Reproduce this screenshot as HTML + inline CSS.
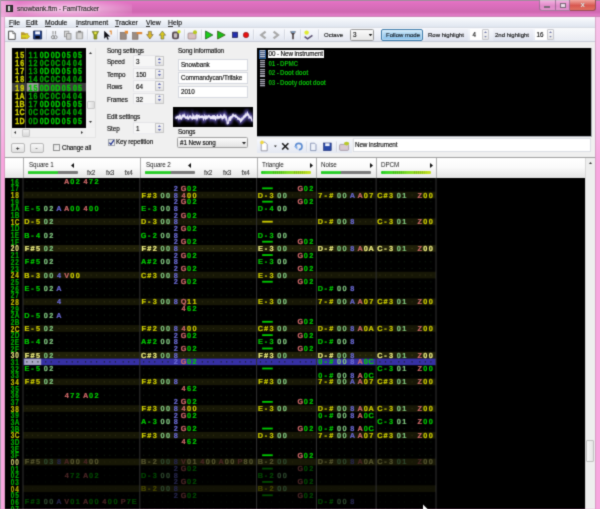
<!DOCTYPE html>
<html><head><meta charset="utf-8">
<style>
*{margin:0;padding:0;box-sizing:border-box}
html,body{width:600px;height:509px;overflow:hidden;background:#f08cd4}
body{position:relative;font-family:"Liberation Sans",sans-serif;color:#000}
#client{will-change:transform}
.a{position:absolute}
.t{position:absolute;white-space:nowrap;font-size:6.3px;letter-spacing:-0.1px;line-height:8px;color:#080808;-webkit-text-stroke:0.15px #222}
u{text-decoration:none;border-bottom:0.6px solid #333}
/* frame */
#frame{left:0;top:0;width:600px;height:509px;background:linear-gradient(to bottom,#a08c9c 0,#a08c9c 1px,#e872c8 1px,#e070c0 3px,#d66cb8 8px,#cf68b0 12px,#de78c2 14.5px,#e07cc4 16px,#b88aa8 17px,#f8c0e8 17px,#f8b4e4 130px,#f8a6de 160px,#f8a6de 100%)}
#client{left:5px;top:17px;width:590px;height:492px;background:#f0f0f0;box-shadow:-0.5px 0 0 #b890a8,0.5px 0 0 #b890a8}
#menu{left:0;top:0;width:590px;height:10px;background:linear-gradient(to bottom,#fbfdfe 0,#f2f5fa 30%,#dfe5ef 100%)}
#tool{left:0;top:10px;width:590px;height:13.5px;border-top:0.5px solid #d8dce4;background:linear-gradient(to bottom,#f8f9fd 0,#eef1f8 50%,#e2e6f0 100%)}
.sep{position:absolute;width:1px;height:10px;background:#c4c8d4;top:1.5px}
.edit{position:absolute;background:#fff;border:1px solid #d6d9e0}
.spin{position:absolute;background:linear-gradient(#f4f4f4,#e2e2e2);border:1px solid #c8c8c8}
.btn{position:absolute;background:linear-gradient(#f8f8f8,#e0e0e0);border:1px solid #b8b8b8;border-radius:2px}
.pat text{font-family:"Liberation Sans",sans-serif;font-weight:bold;font-size:7.3px;text-anchor:middle;text-rendering:geometricPrecision;stroke-width:0.2px}
.pat text.rn{font-size:8.6px}
.fl text{font-family:"Liberation Sans",sans-serif;font-weight:bold;font-size:8.8px;text-anchor:middle;text-rendering:geometricPrecision;stroke-width:0.35px}
</style></head><body>
<svg width="0" height="0" style="position:absolute"><defs><filter id="soft" x="0" y="0" width="100%" height="100%" color-interpolation-filters="sRGB"><feConvolveMatrix order="3" kernelMatrix="0.025 0.1 0.025 0.1 0.5 0.1 0.025 0.1 0.025" edgeMode="duplicate"/></filter></defs></svg>
<div id="wrap" style="position:absolute;left:0;top:0;width:600px;height:509px;filter:url(#soft)">
<div id="frame" class="a"></div>
<div class="a" style="left:0;top:0;width:600px;height:17px;will-change:transform">
<div class="a" style="left:2px;top:1px;width:130px;height:16px;background:radial-gradient(ellipse 60% 65% at 50% 50%,rgba(255,235,250,0.75),rgba(255,220,245,0.35) 60%,rgba(255,210,240,0) 100%)"></div>
<div class="a" style="left:1px;top:1px;width:18px;height:16px;background:linear-gradient(90deg,rgba(255,220,245,0.5),rgba(255,220,245,0))"></div>
<!-- title bar -->
<div class="a" style="left:0;top:0;width:1px;height:509px;background:#a89cac"></div>
<div class="a" style="left:6px;top:5px;width:7px;height:7px;background:#3a3a3a;border:1px solid #222"></div>
<div class="a" style="left:8px;top:6px;width:2px;height:5px;background:#d8d8d8"></div>
<div class="t" style="left:17px;top:5px;font-size:6.7px;color:#303030;text-shadow:0 0 2px #fde,0 0 3px #fce">snowbank.ftm - FamiTracker</div>
<div class="a" style="left:538.5px;top:0;width:16.5px;height:11px;background:linear-gradient(rgba(255,235,250,0.55),rgba(230,170,215,0.45) 60%,rgba(240,190,230,0.5));border:1px solid rgba(110,80,110,0.55);border-top:0;border-right:0;border-radius:0 0 0 3px"></div>
<div class="a" style="left:543.5px;top:6px;width:6.5px;height:2.2px;background:#f4f0f4;border:0.6px solid #7a6a78"></div>
<div class="a" style="left:555px;top:0;width:15px;height:11px;background:linear-gradient(rgba(255,235,250,0.55),rgba(230,170,215,0.45) 60%,rgba(240,190,230,0.5));border:1px solid rgba(110,80,110,0.55);border-top:0"></div>
<div class="a" style="left:559.5px;top:3.2px;width:6.5px;height:5px;border:1px solid #7a6a78;background:#ead8e8"></div>
<div class="a" style="left:570px;top:0;width:26px;height:11px;background:linear-gradient(#f0a8a0,#d85850 55%,#e07060);border:1px solid #9a5058;border-top:0;border-left:0;border-radius:0 0 3px 0"></div>
<div class="t" style="left:580.5px;top:0.6px;font-size:8px;font-weight:bold;color:#fff;letter-spacing:0">x</div>
</div>
<div id="client" class="a">
  <div id="menu" class="a">
    <div class="t" style="left:4px;top:1.5px;font-size:6.8px;letter-spacing:0"><u>F</u>ile</div>
    <div class="t" style="left:21px;top:1.5px;font-size:6.8px;letter-spacing:0"><u>E</u>dit</div>
    <div class="t" style="left:40px;top:1.5px;font-size:6.8px;letter-spacing:0"><u>M</u>odule</div>
    <div class="t" style="left:71px;top:1.5px;font-size:6.8px;letter-spacing:0"><u>I</u>nstrument</div>
    <div class="t" style="left:110px;top:1.5px;font-size:6.8px;letter-spacing:0"><u>T</u>racker</div>
    <div class="t" style="left:141px;top:1.5px;font-size:6.8px;letter-spacing:0"><u>V</u>iew</div>
    <div class="t" style="left:163px;top:1.5px;font-size:6.8px;letter-spacing:0"><u>H</u>elp</div>
  </div>
  <div id="tool" class="a">
    <svg class="a" style="left:0;top:-0.4px" width="320" height="13" viewBox="0 0 320 13">
      <g stroke-linejoin="round">
      <path d="M3.6 3.2h4.2l2.4 2.4v5.8H3.6z" fill="#fff" stroke="#4a4a4a" stroke-width="1"/>
      <path d="M7.8 3.2v2.4h2.4" fill="#ddd" stroke="#4a4a4a" stroke-width="0.7"/>
      <path d="M16 4.2h3l1 1h3.2v1.6L25 8.4 22.4 11H16z" fill="#b89a30"/>
      <path d="M16.6 7h4.2l0.2-1.6 3.6 3-3.6 2.6V9.4h-4.4z" fill="#d8d020"/>
      <rect x="28.6" y="3" width="8" height="8" fill="#20408c" stroke="#14244c" stroke-width="0.8"/>
      <rect x="30.2" y="3.4" width="4.8" height="3" fill="#f4f6ff"/>
      <rect x="30.4" y="8" width="4.4" height="2.6" fill="#080810"/>
      </g>
      <rect x="41.5" y="1.5" width="0.8" height="10" fill="#c4c8d4"/><rect x="42.3" y="1.5" width="0.6" height="10" fill="#fff"/>
      <path d="M48 3v3.5M50.5 3v3.5" stroke="#9a9a9a" stroke-width="1.1"/><circle cx="48" cy="9.2" r="1.6" fill="none" stroke="#8a8a8a" stroke-width="1"/><circle cx="50.5" cy="9.2" r="1.6" fill="none" stroke="#8a8a8a" stroke-width="1"/>
      <rect x="59.5" y="3.2" width="4.4" height="5.6" fill="#d8d8d8" stroke="#8c8c8c" stroke-width="0.8"/><rect x="61.6" y="5.6" width="4.4" height="5.6" fill="#cfcfcf" stroke="#8c8c8c" stroke-width="0.8"/>
      <rect x="70.8" y="3.6" width="7.4" height="7.6" rx="1" fill="#a8a8a8"/><rect x="72.4" y="5.2" width="4.4" height="5.2" fill="#d6d6d6"/><rect x="73" y="2.8" width="3" height="1.4" fill="#707070"/>
      <rect x="82" y="1.5" width="0.8" height="10" fill="#c4c8d4"/><rect x="82.8" y="1.5" width="0.6" height="10" fill="#fff"/>
      <path d="M87.2 3.4h6.4l-1.8 3.6v4h-2.8v-4z" fill="#98a020" stroke="#606818" stroke-width="0.6"/><circle cx="90.4" cy="5" r="1.3" fill="#e8e850"/>
      <path d="M99.2 2.8v8l2-2 1.4 3 1.2-0.6-1.4-2.8h2.8z" fill="#101018"/>
      <path d="M104.6 2.6h2.2v4h-1.2v-2.6h-1z" fill="#e09040"/>
      <rect x="112" y="1.5" width="0.8" height="10" fill="#c4c8d4"/><rect x="112.8" y="1.5" width="0.6" height="10" fill="#fff"/>
      <rect x="115.2" y="4.4" width="6" height="6.8" fill="#9a8c84" stroke="#706058" stroke-width="0.6"/><path d="M119.4 2.8h3.6v3.4z" fill="#e88a30"/><rect x="119.8" y="3.4" width="2" height="2" fill="#e88a30"/>
      <rect x="127.6" y="4.6" width="5.4" height="6.6" fill="#9a8c84" stroke="#706058" stroke-width="0.6"/><path d="M131.6 4h5.6v2.2h-5.6z" fill="#e08838"/>
      <path d="M143.4 3.4h3v3.2h1.8l-3.3 4.4-3.3-4.4h1.8z" fill="#d8b828" stroke="#6a5a40" stroke-width="0.6"/>
      <path d="M157.4 3l3.2 4.2h-1.8v3.8h-2.8V7.2h-1.8z" fill="#d8c820" stroke="#606040" stroke-width="0.6"/>
      <rect x="167" y="3.6" width="7" height="7.6" rx="2.2" fill="#5a4e52"/><rect x="168.8" y="5.2" width="3.4" height="4.6" rx="1" fill="#c8c0c0"/><circle cx="174" cy="3.8" r="1.7" fill="#d8e830"/>
      <rect x="179" y="1.5" width="0.8" height="10" fill="#c4c8d4"/><rect x="179.8" y="1.5" width="0.6" height="10" fill="#fff"/>
      <rect x="183" y="5" width="8" height="6" rx="1" fill="#d8c0c0" stroke="#8a7070" stroke-width="0.6"/><circle cx="190" cy="4.2" r="2" fill="#b8c820"/>
      <rect x="196" y="1.5" width="0.8" height="10" fill="#c4c8d4"/><rect x="196.8" y="1.5" width="0.6" height="10" fill="#fff"/>
      <path d="M200.6 3v8l7.2-4z" fill="#18d018" stroke="#1a5a1a" stroke-width="0.8" stroke-linejoin="round"/>
      <path d="M212.6 3v8l7.6-4z" fill="#18c018" stroke="#3a5a10" stroke-width="0.8" stroke-linejoin="round"/>
      <rect x="227.6" y="4.2" width="5" height="5.2" fill="#2430b0" stroke="#181848" stroke-width="0.7"/>
      <circle cx="241" cy="7" r="2.7" fill="#e81010" stroke="#802020" stroke-width="0.6"/>
      <rect x="248" y="1.5" width="0.8" height="10" fill="#c4c8d4"/><rect x="248.8" y="1.5" width="0.6" height="10" fill="#fff"/>
      <path d="M260.6 3.6l-4.4 3.4 4.4 3.4" fill="none" stroke="#a8a8a8" stroke-width="2.2"/>
      <path d="M268.6 3.6l4.4 3.4-4.4 3.4" fill="none" stroke="#a8a8a8" stroke-width="2.2"/>
      <rect x="279" y="1.5" width="0.8" height="10" fill="#c4c8d4"/><rect x="279.8" y="1.5" width="0.6" height="10" fill="#fff"/>
      <path d="M285 3.4h6l-2.2 3.4v4.4h-1.6V6.8z" fill="#4a4040"/><rect x="286.4" y="3.2" width="3.6" height="1.8" fill="#7a98b8"/>
      <rect x="295" y="1.5" width="0.8" height="10" fill="#c4c8d4"/><rect x="295.8" y="1.5" width="0.6" height="10" fill="#fff"/>
      <circle cx="301.6" cy="4.6" r="2.2" fill="#e0ec30"/><path d="M299.6 8.6l3 2.2 4.8-3.4" fill="none" stroke="#5a5070" stroke-width="1.6"/>
      <rect x="313" y="1.5" width="0.8" height="10" fill="#c4c8d4"/><rect x="313.8" y="1.5" width="0.6" height="10" fill="#fff"/>
    </svg>
    <div class="a" style="left:315px;top:0;width:41px;height:13px;background:linear-gradient(#f8f9fc,#e4e7f0)"></div>
    <div class="t" style="left:319px;top:2.5px;font-size:6px;letter-spacing:0">Octave</div>
    <div class="a" style="left:345px;top:0.8px;width:24px;height:12px;background:linear-gradient(#fafafa,#e6e6e6);border:1px solid #9a9a9a;border-radius:1.5px"></div>
    <div class="t" style="left:348px;top:2.8px;font-size:6.3px">3</div>
    <div class="a" style="left:363.5px;top:5.8px;width:4px;height:2.5px;background:#111;clip-path:polygon(0 0,100% 0,50% 100%)"></div>
    <div class="a" style="left:376px;top:0.5px;width:42px;height:12px;background:linear-gradient(#d4ecfa,#a4d0f0 50%,#88c0ea);border:1px solid #3a78a8;border-radius:2px;box-shadow:inset 0 0 0 0.5px #e8f6ff"></div>
    <div class="t" style="left:381px;top:2.5px;font-size:6px;letter-spacing:0;color:#0a1a2a">Follow mode</div>
    <div class="a" style="left:420px;top:1px;width:43px;height:11.5px;background:linear-gradient(#f2f3f9,#dde1ee);border-radius:1px"></div>
    <div class="t" style="left:423px;top:2.5px;font-size:6px;letter-spacing:0">Row highlight</div>
    <div class="a" style="left:465px;top:1px;width:12px;height:11px;background:#fff"></div>
    <div class="t" style="left:467.5px;top:2.8px;font-size:6.3px">4</div>
    <div class="a" style="left:477px;top:1px;width:7px;height:11px;background:linear-gradient(#f8f8f8,#e4e4e4);border:1px solid #c8c8cc;border-radius:1px"></div>
    <div class="a" style="left:478.8px;top:3.2px;width:3.4px;height:2px;background:#7078a8;clip-path:polygon(50% 0,100% 100%,0 100%)"></div>
    <div class="a" style="left:478.8px;top:7.6px;width:3.4px;height:2px;background:#7078a8;clip-path:polygon(0 0,100% 0,50% 100%)"></div>
    <div class="a" style="left:488px;top:1px;width:40px;height:11.5px;background:linear-gradient(#f2f3f9,#dde1ee);border-radius:1px"></div>
    <div class="t" style="left:490px;top:2.5px;font-size:6px;letter-spacing:0">2nd highlight</div>
    <div class="a" style="left:530px;top:1px;width:12px;height:11px;background:#fff"></div>
    <div class="t" style="left:531.5px;top:2.8px;font-size:6.3px">16</div>
    <div class="a" style="left:542px;top:1px;width:7px;height:11px;background:linear-gradient(#f8f8f8,#e4e4e4);border:1px solid #c8c8cc;border-radius:1px"></div>
    <div class="a" style="left:543.8px;top:3.2px;width:3.4px;height:2px;background:#7078a8;clip-path:polygon(50% 0,100% 100%,0 100%)"></div>
    <div class="a" style="left:543.8px;top:7.6px;width:3.4px;height:2px;background:#7078a8;clip-path:polygon(0 0,100% 0,50% 100%)"></div>
    <div class="a" style="left:550px;top:0;width:40px;height:13px;background:linear-gradient(#f9fafc,#e9ecf3)"></div>
  </div>
  <div class="a" style="left:0;top:23.5px;width:590px;height:1px;background:#c8ccd8"></div>

  <!-- control area -->
  <!-- frame list -->
  <div class="a" style="left:6px;top:30.5px;width:85px;height:90px;border:1px solid #e4e4e4;background:#f2f2f2"></div>
  <div class="a" style="left:7px;top:31px;width:74px;height:80px"><svg class="fl" width="74" height="80" viewBox="0 0 74 80"><defs><filter id="fb" x="0" y="0" width="74" height="80" filterUnits="userSpaceOnUse" color-interpolation-filters="sRGB"><feConvolveMatrix order="3" kernelMatrix="0.025 0.1 0.025 0.1 0.5 0.1 0.025 0.1 0.025" edgeMode="duplicate"/></filter></defs><g><rect x="0" y="0" width="74" height="80" fill="#000"/><rect x="13.2" y="0" width="0.8" height="80" fill="#505050"/><text transform="scale(0.8 1)" x="6.37 12.62" y="9.50" fill="#d4d400" stroke="#d4d400">15</text><text transform="scale(0.8 1)" x="23.12 29.38" y="9.50" fill="#00a000" stroke="#00a000">11</text><text transform="scale(0.8 1)" x="37.25 43.50" y="9.50" fill="#00cc00" stroke="#00cc00">0D</text><text transform="scale(0.8 1)" x="51.00 57.25" y="9.50" fill="#00cc00" stroke="#00cc00">0D</text><text transform="scale(0.8 1)" x="64.75 71.00" y="9.50" fill="#00cc00" stroke="#00cc00">05</text><text transform="scale(0.8 1)" x="78.62 84.88" y="9.50" fill="#00cc00" stroke="#00cc00">05</text><text transform="scale(0.8 1)" x="6.37 12.62" y="17.75" fill="#d4d400" stroke="#d4d400">16</text><text transform="scale(0.8 1)" x="23.12 29.38" y="17.75" fill="#00a000" stroke="#00a000">12</text><text transform="scale(0.8 1)" x="37.25 43.50" y="17.75" fill="#00a800" stroke="#00a800">0C</text><text transform="scale(0.8 1)" x="51.00 57.25" y="17.75" fill="#00a800" stroke="#00a800">0C</text><text transform="scale(0.8 1)" x="64.75 71.00" y="17.75" fill="#00a800" stroke="#00a800">04</text><text transform="scale(0.8 1)" x="78.62 84.88" y="17.75" fill="#00a800" stroke="#00a800">04</text><text transform="scale(0.8 1)" x="6.37 12.62" y="26.00" fill="#d4d400" stroke="#d4d400">17</text><text transform="scale(0.8 1)" x="23.12 29.38" y="26.00" fill="#00a000" stroke="#00a000">13</text><text transform="scale(0.8 1)" x="37.25 43.50" y="26.00" fill="#00cc00" stroke="#00cc00">0D</text><text transform="scale(0.8 1)" x="51.00 57.25" y="26.00" fill="#00cc00" stroke="#00cc00">0D</text><text transform="scale(0.8 1)" x="64.75 71.00" y="26.00" fill="#00cc00" stroke="#00cc00">05</text><text transform="scale(0.8 1)" x="78.62 84.88" y="26.00" fill="#00cc00" stroke="#00cc00">05</text><text transform="scale(0.8 1)" x="6.37 12.62" y="34.25" fill="#d4d400" stroke="#d4d400">18</text><text transform="scale(0.8 1)" x="23.12 29.38" y="34.25" fill="#00a000" stroke="#00a000">14</text><text transform="scale(0.8 1)" x="37.25 43.50" y="34.25" fill="#00a800" stroke="#00a800">0C</text><text transform="scale(0.8 1)" x="51.00 57.25" y="34.25" fill="#00a800" stroke="#00a800">0C</text><text transform="scale(0.8 1)" x="64.75 71.00" y="34.25" fill="#00a800" stroke="#00a800">04</text><text transform="scale(0.8 1)" x="78.62 84.88" y="34.25" fill="#00a800" stroke="#00a800">04</text><rect x="0" y="35.00" width="74" height="8.4" fill="#3c3c3c"/><rect x="15" y="35.00" width="11.5" height="8.4" fill="#9a9a9a"/><text transform="scale(0.8 1)" x="6.37 12.62" y="42.50" fill="#d4d400" stroke="#d4d400">19</text><text transform="scale(0.8 1)" x="23.12 29.38" y="42.50" fill="#00c800" stroke="#00c800">15</text><text transform="scale(0.8 1)" x="37.25 43.50" y="42.50" fill="#00cc00" stroke="#00cc00">0D</text><text transform="scale(0.8 1)" x="51.00 57.25" y="42.50" fill="#00cc00" stroke="#00cc00">0D</text><text transform="scale(0.8 1)" x="64.75 71.00" y="42.50" fill="#00cc00" stroke="#00cc00">05</text><text transform="scale(0.8 1)" x="78.62 84.88" y="42.50" fill="#00cc00" stroke="#00cc00">05</text><text transform="scale(0.8 1)" x="6.37 12.62" y="50.75" fill="#d4d400" stroke="#d4d400">1A</text><text transform="scale(0.8 1)" x="23.12 29.38" y="50.75" fill="#00a000" stroke="#00a000">16</text><text transform="scale(0.8 1)" x="37.25 43.50" y="50.75" fill="#00a800" stroke="#00a800">0C</text><text transform="scale(0.8 1)" x="51.00 57.25" y="50.75" fill="#00a800" stroke="#00a800">0C</text><text transform="scale(0.8 1)" x="64.75 71.00" y="50.75" fill="#00a800" stroke="#00a800">04</text><text transform="scale(0.8 1)" x="78.62 84.88" y="50.75" fill="#00a800" stroke="#00a800">04</text><text transform="scale(0.8 1)" x="6.37 12.62" y="59.00" fill="#d4d400" stroke="#d4d400">1B</text><text transform="scale(0.8 1)" x="23.12 29.38" y="59.00" fill="#00a000" stroke="#00a000">17</text><text transform="scale(0.8 1)" x="37.25 43.50" y="59.00" fill="#00cc00" stroke="#00cc00">0D</text><text transform="scale(0.8 1)" x="51.00 57.25" y="59.00" fill="#00cc00" stroke="#00cc00">0D</text><text transform="scale(0.8 1)" x="64.75 71.00" y="59.00" fill="#00cc00" stroke="#00cc00">05</text><text transform="scale(0.8 1)" x="78.62 84.88" y="59.00" fill="#00cc00" stroke="#00cc00">05</text><text transform="scale(0.8 1)" x="6.37 12.62" y="67.25" fill="#d4d400" stroke="#d4d400">1C</text><text transform="scale(0.8 1)" x="23.12 29.38" y="67.25" fill="#00a000" stroke="#00a000">0C</text><text transform="scale(0.8 1)" x="37.25 43.50" y="67.25" fill="#00a800" stroke="#00a800">0C</text><text transform="scale(0.8 1)" x="51.00 57.25" y="67.25" fill="#00a800" stroke="#00a800">0C</text><text transform="scale(0.8 1)" x="64.75 71.00" y="67.25" fill="#00a800" stroke="#00a800">04</text><text transform="scale(0.8 1)" x="78.62 84.88" y="67.25" fill="#00a800" stroke="#00a800">04</text><text transform="scale(0.8 1)" x="6.37 12.62" y="75.50" fill="#d4d400" stroke="#d4d400">1D</text><text transform="scale(0.8 1)" x="23.12 29.38" y="75.50" fill="#00a000" stroke="#00a000">0D</text><text transform="scale(0.8 1)" x="37.25 43.50" y="75.50" fill="#00cc00" stroke="#00cc00">0D</text><text transform="scale(0.8 1)" x="51.00 57.25" y="75.50" fill="#00cc00" stroke="#00cc00">0D</text><text transform="scale(0.8 1)" x="64.75 71.00" y="75.50" fill="#00cc00" stroke="#00cc00">05</text><text transform="scale(0.8 1)" x="78.62 84.88" y="75.50" fill="#00cc00" stroke="#00cc00">05</text></g></svg></div>
  <!-- v scrollbar -->
  <div class="a" style="left:81px;top:31px;width:9px;height:80px;background:#f0f0f0"></div>
  <div class="a" style="left:84px;top:35px;width:3px;height:2px;background:#333;clip-path:polygon(50% 0,100% 100%,0 100%)"></div>
  <div class="a" style="left:81.5px;top:84px;width:8px;height:8px;background:linear-gradient(90deg,#f4f4f4,#dcdcdc);border:1px solid #c8c8c8;border-radius:1px"></div>
  <div class="a" style="left:84px;top:104px;width:3px;height:2px;background:#333;clip-path:polygon(0 0,100% 0,50% 100%)"></div>
  <!-- h scrollbar -->
  <div class="a" style="left:7px;top:111px;width:74px;height:8.5px;background:#f0f0f0"></div>
  <div class="a" style="left:9px;top:114px;width:2px;height:3px;background:#333;clip-path:polygon(0 50%,100% 0,100% 100%)"></div>
  <div class="a" style="left:17px;top:111.5px;width:8px;height:8px;background:linear-gradient(#f4f4f4,#d8d8d8);border:1px solid #c8c8c8;border-radius:1px"></div>
  <div class="a" style="left:76px;top:114px;width:2px;height:3px;background:#333;clip-path:polygon(0 0,100% 50%,0 100%)"></div>
  <!-- buttons -->
  <div class="btn" style="left:6px;top:125.5px;width:14px;height:10px"></div>
  <div class="t" style="left:11px;top:126.5px;font-size:6px">+</div>
  <div class="btn" style="left:25px;top:125.5px;width:14px;height:10px"></div>
  <div class="t" style="left:30.5px;top:126.5px;font-size:6px">-</div>
  <div class="a" style="left:48px;top:126.5px;width:7px;height:7px;border:1px solid #8e8f8f;background:linear-gradient(135deg,#dcdcdc,#fafafa)"></div>
  <div class="t" style="left:57px;top:126.8px">Change all</div>

  <!-- song settings -->
  <div class="t" style="left:102px;top:30px">Song settings</div>
  <div class="t" style="left:102px;top:41.0px">Speed</div>
  <div class="edit" style="left:128px;top:38.0px;width:27px;height:11.7px;border-color:#e4e4e8 #ececf0 #ececf0 #e4e4e8;background:#f6f6f6"></div>
  <div class="t" style="left:131px;top:41.0px">3</div>
  <div class="spin" style="left:149.7px;top:39.0px;width:9.6px;height:10px"></div>
  <div class="a" style="left:152.6px;top:40.8px;width:3.6px;height:2.2px;background:#6a72b8;clip-path:polygon(50% 0,100% 100%,0 100%)"></div>
  <div class="a" style="left:152.6px;top:44.6px;width:3.6px;height:2.2px;background:#6a72b8;clip-path:polygon(0 0,100% 0,50% 100%)"></div>
  <div class="t" style="left:102px;top:53.5px">Tempo</div>
  <div class="edit" style="left:128px;top:50.5px;width:27px;height:11.7px;border-color:#e4e4e8 #ececf0 #ececf0 #e4e4e8;background:#f6f6f6"></div>
  <div class="t" style="left:131px;top:53.5px">150</div>
  <div class="spin" style="left:149.7px;top:51.5px;width:9.6px;height:10px"></div>
  <div class="a" style="left:152.6px;top:53.3px;width:3.6px;height:2.2px;background:#6a72b8;clip-path:polygon(50% 0,100% 100%,0 100%)"></div>
  <div class="a" style="left:152.6px;top:57.1px;width:3.6px;height:2.2px;background:#6a72b8;clip-path:polygon(0 0,100% 0,50% 100%)"></div>
  <div class="t" style="left:102px;top:66.0px">Rows</div>
  <div class="edit" style="left:128px;top:63.0px;width:27px;height:11.7px;border-color:#e4e4e8 #ececf0 #ececf0 #e4e4e8;background:#f6f6f6"></div>
  <div class="t" style="left:131px;top:66.0px">64</div>
  <div class="spin" style="left:149.7px;top:64.0px;width:9.6px;height:10px"></div>
  <div class="a" style="left:152.6px;top:65.8px;width:3.6px;height:2.2px;background:#6a72b8;clip-path:polygon(50% 0,100% 100%,0 100%)"></div>
  <div class="a" style="left:152.6px;top:69.6px;width:3.6px;height:2.2px;background:#6a72b8;clip-path:polygon(0 0,100% 0,50% 100%)"></div>
  <div class="t" style="left:102px;top:78.5px">Frames</div>
  <div class="edit" style="left:128px;top:75.5px;width:27px;height:11.7px;border-color:#e4e4e8 #ececf0 #ececf0 #e4e4e8;background:#f6f6f6"></div>
  <div class="t" style="left:131px;top:78.5px">32</div>
  <div class="spin" style="left:149.7px;top:76.5px;width:9.6px;height:10px"></div>
  <div class="a" style="left:152.6px;top:78.3px;width:3.6px;height:2.2px;background:#6a72b8;clip-path:polygon(50% 0,100% 100%,0 100%)"></div>
  <div class="a" style="left:152.6px;top:82.1px;width:3.6px;height:2.2px;background:#6a72b8;clip-path:polygon(0 0,100% 0,50% 100%)"></div>
  <div class="t" style="left:102px;top:108.3px">Step</div>
  <div class="edit" style="left:128px;top:105.3px;width:27px;height:11.7px;border-color:#e4e4e8 #ececf0 #ececf0 #e4e4e8;background:#f6f6f6"></div>
  <div class="t" style="left:131px;top:108.3px">1</div>
  <div class="spin" style="left:149.7px;top:106.3px;width:9.6px;height:10px"></div>
  <div class="a" style="left:152.6px;top:108.1px;width:3.6px;height:2.2px;background:#6a72b8;clip-path:polygon(50% 0,100% 100%,0 100%)"></div>
  <div class="a" style="left:152.6px;top:111.9px;width:3.6px;height:2.2px;background:#6a72b8;clip-path:polygon(0 0,100% 0,50% 100%)"></div>
  <div class="t" style="left:102px;top:96.3px">Edit settings</div>
  <div class="a" style="left:103px;top:122px;width:7px;height:7px;border:1px solid #a0a4ac;background:linear-gradient(135deg,#e0e0e0,#fafafa)"></div>
  <svg class="a" style="left:103px;top:122px" width="7" height="7" viewBox="0 0 7 7"><path d="M1.3 3.6l1.6 1.8 3-4.2" fill="none" stroke="#2a3a90" stroke-width="1.3"/></svg>
  <div class="t" style="left:111px;top:121px">Key repetition</div>

  <!-- song information -->
  <div class="t" style="left:173px;top:30px">Song information</div>
  <div class="edit" style="left:173px;top:41.5px;width:70px;height:12px"></div>
  <div class="t" style="left:176px;top:43.5px">Snowbank</div>
  <div class="edit" style="left:173px;top:55px;width:70px;height:12px"></div>
  <div class="t" style="left:176px;top:57px">Commandycan/Trifake</div>
  <div class="edit" style="left:173px;top:69px;width:70px;height:12px"></div>
  <div class="t" style="left:176px;top:71px">2010</div>
  <!-- visualizer -->
  <svg class="a" style="left:168px;top:90px" width="80" height="20" viewBox="0 0 80 20">
    <rect width="80" height="20" fill="#000"/>
    <defs><filter id="gl" x="-10%" y="-50%" width="120%" height="200%"><feGaussianBlur stdDeviation="1.0"/></filter></defs>
    <path d="M2.5 10.0 L2.9 10.4 L3.2 11.9 L3.6 10.1 L3.9 10.2 L4.2 10.5 L4.6 8.9 L4.9 10.2 L5.3 10.7 L5.6 11.4 L6.0 8.6 L6.3 9.4 L6.7 8.6 L7.0 11.4 L7.4 11.0 L7.7 8.4 L8.1 12.1 L8.4 12.1 L8.8 10.8 L9.1 10.7 L9.5 8.8 L9.8 8.3 L10.2 10.3 L10.5 8.4 L10.9 9.0 L11.2 9.2 L11.6 8.3 L11.9 10.1 L12.3 10.0 L12.6 11.6 L13.0 10.3 L13.3 10.8 L13.7 10.2 L14.0 10.8 L14.4 10.0 L14.7 9.3 L15.1 12.2 L15.4 12.2 L15.8 11.6 L16.1 11.0 L16.5 9.5 L16.8 9.1 L17.2 9.4 L17.5 8.5 L17.9 11.3 L18.2 9.8 L18.6 11.6 L18.9 9.7 L19.3 12.0 L19.7 11.6 L20.0 8.2 L20.4 9.0 L20.7 11.8 L21.1 10.1 L21.4 12.1 L21.8 9.8 L22.1 8.5 L22.5 10.7 L22.8 11.3 L23.2 9.3 L23.5 8.5 L23.9 9.5 L24.2 12.1 L24.6 11.2 L24.9 8.7 L25.3 9.2 L25.6 8.6 L26.0 8.4 L26.3 11.4 L26.7 8.9 L27.0 10.4 L27.4 10.0 L27.7 9.0 L28.1 11.1 L28.4 8.7 L28.8 10.8 L29.1 8.7 L29.5 9.9 L29.8 9.1 L30.2 9.3 L30.5 12.1 L30.9 11.4 L31.2 9.4 L31.6 11.7 L31.9 9.0 L32.3 9.8 L32.6 11.6 L33.0 10.8 L33.3 8.6 L33.7 12.2 L34.0 9.1 L34.4 9.2 L34.7 11.3 L35.1 9.5 L35.4 9.4 L35.8 8.5 L36.1 8.6 L36.5 10.5 L36.8 9.2 L37.2 10.6 L37.5 9.7 L37.9 10.0 L38.2 12.0 L38.6 10.1 L38.9 10.5 L39.3 11.7 L39.6 8.9 L40.0 8.8 L40.3 11.8 L40.7 11.5 L41.0 9.2 L41.4 9.0 L41.7 11.2 L42.1 12.0 L42.4 9.0 L42.8 12.0 L43.1 11.7 L43.5 10.6 L43.8 9.9 L44.2 8.6 L44.5 8.4 L44.9 12.1 L45.2 9.2 L45.6 11.0 L45.9 9.2 L46.3 11.5 L46.6 10.6 L47.0 9.4 L47.3 8.9 L47.7 11.1 L48.0 8.5 L48.4 9.1 L48.7 10.4 L49.1 11.6 L49.4 10.7 L49.8 9.3 L50.1 11.9 L50.5 9.0 L50.8 8.3 L51.2 9.3 L51.5 10.0 L51.9 8.4 L52.2 9.3 L52.6 10.4 L52.9 11.6 L53.3 10.4 L53.6 11.6 L54.0 13.8 L54.3 17.3 L54.7 16.3 L55.0 16.5 L55.4 16.1 L55.7 14.4 L56.1 10.9 L56.4 10.6 L56.8 13.5 L57.1 12.4 L57.5 12.9 L57.8 9.1 L58.2 10.9 L58.5 9.9 L58.9 10.3 L59.2 8.4 L59.6 10.5 L59.9 6.8 L60.3 8.2 L60.6 8.7 L61.0 9.1 L61.3 8.5 L61.7 8.3 L62.0 8.8 L62.4 9.4 L62.7 7.6 L63.1 9.1 L63.4 10.2 L63.8 10.5 L64.1 9.3 L64.5 11.1 L64.8 11.8 L65.2 11.2 L65.5 11.8 L65.9 11.3 L66.2 12.4 L66.6 12.8 L66.9 11.1 L67.3 13.2 L67.6 14.6 L68.0 14.1 L68.3 13.5 L68.7 12.1 L69.0 13.1 L69.4 12.3 L69.7 11.4 L70.1 12.4 L70.4 9.3 L70.8 11.2 L71.1 8.2 L71.5 9.8 L71.8 8.9 L72.2 7.7 L72.5 9.0 L72.9 8.0 L73.2 8.2 L73.6 9.2 L73.9 6.7 L74.3 5.9 L74.6 7.0 L75.0 8.5 L75.3 7.1 L75.6 7.3 L76.0 10.3 L76.3 9.8 L76.7 9.4 L77.0 11.5 L77.4 9.9 L77.7 11.6 L78.1 10.3 L78.4 11.5 L78.8 13.2 L79.1 13.9 L79.5 14.0" stroke="#8070f0" stroke-width="3.4" fill="none" filter="url(#gl)" opacity="0.65"/>
    <path d="M2.5 10.0 L2.9 10.4 L3.2 11.9 L3.6 10.1 L3.9 10.2 L4.2 10.5 L4.6 8.9 L4.9 10.2 L5.3 10.7 L5.6 11.4 L6.0 8.6 L6.3 9.4 L6.7 8.6 L7.0 11.4 L7.4 11.0 L7.7 8.4 L8.1 12.1 L8.4 12.1 L8.8 10.8 L9.1 10.7 L9.5 8.8 L9.8 8.3 L10.2 10.3 L10.5 8.4 L10.9 9.0 L11.2 9.2 L11.6 8.3 L11.9 10.1 L12.3 10.0 L12.6 11.6 L13.0 10.3 L13.3 10.8 L13.7 10.2 L14.0 10.8 L14.4 10.0 L14.7 9.3 L15.1 12.2 L15.4 12.2 L15.8 11.6 L16.1 11.0 L16.5 9.5 L16.8 9.1 L17.2 9.4 L17.5 8.5 L17.9 11.3 L18.2 9.8 L18.6 11.6 L18.9 9.7 L19.3 12.0 L19.7 11.6 L20.0 8.2 L20.4 9.0 L20.7 11.8 L21.1 10.1 L21.4 12.1 L21.8 9.8 L22.1 8.5 L22.5 10.7 L22.8 11.3 L23.2 9.3 L23.5 8.5 L23.9 9.5 L24.2 12.1 L24.6 11.2 L24.9 8.7 L25.3 9.2 L25.6 8.6 L26.0 8.4 L26.3 11.4 L26.7 8.9 L27.0 10.4 L27.4 10.0 L27.7 9.0 L28.1 11.1 L28.4 8.7 L28.8 10.8 L29.1 8.7 L29.5 9.9 L29.8 9.1 L30.2 9.3 L30.5 12.1 L30.9 11.4 L31.2 9.4 L31.6 11.7 L31.9 9.0 L32.3 9.8 L32.6 11.6 L33.0 10.8 L33.3 8.6 L33.7 12.2 L34.0 9.1 L34.4 9.2 L34.7 11.3 L35.1 9.5 L35.4 9.4 L35.8 8.5 L36.1 8.6 L36.5 10.5 L36.8 9.2 L37.2 10.6 L37.5 9.7 L37.9 10.0 L38.2 12.0 L38.6 10.1 L38.9 10.5 L39.3 11.7 L39.6 8.9 L40.0 8.8 L40.3 11.8 L40.7 11.5 L41.0 9.2 L41.4 9.0 L41.7 11.2 L42.1 12.0 L42.4 9.0 L42.8 12.0 L43.1 11.7 L43.5 10.6 L43.8 9.9 L44.2 8.6 L44.5 8.4 L44.9 12.1 L45.2 9.2 L45.6 11.0 L45.9 9.2 L46.3 11.5 L46.6 10.6 L47.0 9.4 L47.3 8.9 L47.7 11.1 L48.0 8.5 L48.4 9.1 L48.7 10.4 L49.1 11.6 L49.4 10.7 L49.8 9.3 L50.1 11.9 L50.5 9.0 L50.8 8.3 L51.2 9.3 L51.5 10.0 L51.9 8.4 L52.2 9.3 L52.6 10.4 L52.9 11.6 L53.3 10.4 L53.6 11.6 L54.0 13.8 L54.3 17.3 L54.7 16.3 L55.0 16.5 L55.4 16.1 L55.7 14.4 L56.1 10.9 L56.4 10.6 L56.8 13.5 L57.1 12.4 L57.5 12.9 L57.8 9.1 L58.2 10.9 L58.5 9.9 L58.9 10.3 L59.2 8.4 L59.6 10.5 L59.9 6.8 L60.3 8.2 L60.6 8.7 L61.0 9.1 L61.3 8.5 L61.7 8.3 L62.0 8.8 L62.4 9.4 L62.7 7.6 L63.1 9.1 L63.4 10.2 L63.8 10.5 L64.1 9.3 L64.5 11.1 L64.8 11.8 L65.2 11.2 L65.5 11.8 L65.9 11.3 L66.2 12.4 L66.6 12.8 L66.9 11.1 L67.3 13.2 L67.6 14.6 L68.0 14.1 L68.3 13.5 L68.7 12.1 L69.0 13.1 L69.4 12.3 L69.7 11.4 L70.1 12.4 L70.4 9.3 L70.8 11.2 L71.1 8.2 L71.5 9.8 L71.8 8.9 L72.2 7.7 L72.5 9.0 L72.9 8.0 L73.2 8.2 L73.6 9.2 L73.9 6.7 L74.3 5.9 L74.6 7.0 L75.0 8.5 L75.3 7.1 L75.6 7.3 L76.0 10.3 L76.3 9.8 L76.7 9.4 L77.0 11.5 L77.4 9.9 L77.7 11.6 L78.1 10.3 L78.4 11.5 L78.8 13.2 L79.1 13.9 L79.5 14.0" stroke="#f4f2ff" stroke-width="1.3" fill="none" opacity="0.95"/>
  </svg>
  <div class="t" style="left:173px;top:111px">Songs</div>
  <div class="a" style="left:172px;top:120px;width:71px;height:11px;background:linear-gradient(#fafafa,#e4e4e4);border:1px solid #a0a0a0;border-radius:1.5px"></div>
  <div class="t" style="left:175px;top:121.5px">#1 New song</div>
  <div class="a" style="left:237px;top:125px;width:4px;height:2.5px;background:#222;clip-path:polygon(0 0,100% 0,50% 100%)"></div>

  <!-- instrument list -->
  <div class="a" style="left:251.5px;top:30.5px;width:335px;height:89px;border:1px solid #a8acb4;background:#000"></div>
  <div class="a" style="left:252px;top:31px;width:334px;height:88px;background:#000"></div>
  <div class="a" style="left:253.5px;top:32.5px;width:7px;height:9.5px;background:#2a5a98"></div><div class="a" style="left:254.5px;top:33px;width:5px;height:8px;background:repeating-linear-gradient(#b8c4d8 0,#b8c4d8 1.2px,#506080 1.2px,#506080 2.1px)"></div>
  <div class="a" style="left:254.5px;top:42.5px;width:5px;height:8px;background:repeating-linear-gradient(#a8a8b4 0,#a8a8b4 1.2px,#303038 1.2px,#303038 2.1px)"></div>
  <div class="a" style="left:254.5px;top:52px;width:5px;height:8px;background:repeating-linear-gradient(#a8a8b4 0,#a8a8b4 1.2px,#303038 1.2px,#303038 2.1px)"></div>
  <div class="a" style="left:254.5px;top:61.5px;width:5px;height:8px;background:repeating-linear-gradient(#a8a8b4 0,#a8a8b4 1.2px,#303038 1.2px,#303038 2.1px)"></div>
  <div class="a" style="left:262.5px;top:33px;width:56px;height:8px;background:#fff"></div>
  <div class="t" style="left:263.5px;top:33px;color:#000">00 - New instrument</div>
  <div class="t" style="left:263.5px;top:42.5px;color:#00d800;font-weight:bold;letter-spacing:-0.2px">01 - DPMC</div>
  <div class="t" style="left:263.5px;top:52px;color:#00d800;font-weight:bold;letter-spacing:-0.2px">02 - Doot doot</div>
  <div class="t" style="left:263.5px;top:61.5px;color:#00d800;font-weight:bold;letter-spacing:-0.2px">03 - Dooty doot doot</div>
  <!-- instrument toolbar -->
  <div class="a" style="left:252px;top:121.5px;width:95px;height:14px;background:linear-gradient(#f6f8fc,#e4e8f2)"></div>
  <svg class="a" style="left:250px;top:121px" width="100" height="15" viewBox="0 0 100 15">
    <path d="M6.2 4.2h3.8l2.2 2.2v6.4H6.2z" fill="#fff" stroke="#7a7a8a" stroke-width="0.7"/>
    <circle cx="7" cy="4.4" r="1.8" fill="#f0d840"/>
    <path d="M19 7.4h2.8l-1.4 1.8z" fill="#202020"/>
    <path d="M27.2 5.2l6.2 6.4M33.4 5.2l-6.2 6.4" stroke="#181818" stroke-width="1.5"/>
    <path d="M40.6 8.6a3.2 3.2 0 1 1 3.2 3.2" fill="none" stroke="#5a8ad0" stroke-width="1.6"/>
    <path d="M39 8.2h3.4v3.6z" fill="#7aa8e8"/>
    <rect x="51.6" y="3.5" width="0.8" height="10" fill="#c4c8d4"/><rect x="52.4" y="3.5" width="0.6" height="10" fill="#fff"/>
    <path d="M55.6 5.2h4l1.4 1.4v6H55.6z" fill="#eef2fa" stroke="#6a7aa0" stroke-width="0.7"/>
    <rect x="68.6" y="5" width="7.6" height="7.6" fill="#2848a8" stroke="#18286a" stroke-width="0.6"/><rect x="70.2" y="5.3" width="4.4" height="2.8" fill="#f0f4ff"/>
    <rect x="81" y="3.5" width="0.8" height="10" fill="#c4c8d4"/><rect x="81.8" y="3.5" width="0.6" height="10" fill="#fff"/>
    <rect x="84.6" y="6.4" width="9" height="6" rx="1" fill="#d8c8d0" stroke="#8a7a88" stroke-width="0.6"/><ellipse cx="91.6" cy="5.6" rx="2.6" ry="1.8" fill="#b8c828"/>
  </svg>
  <div class="edit" style="left:348px;top:121px;width:238px;height:14px;border-color:#dcdee4"></div>
  <div class="t" style="left:350px;top:124px">New instrument</div>

  <!-- pattern editor -->
  <div class="a" style="left:0;top:140px;width:590px;height:1px;background:#a0a0a0"></div>
  <div class="a" style="left:0;top:141px;width:580px;height:20px;background:linear-gradient(#ffffff 0,#fbfbfb 45%,#e4e4e4 100%)"></div>
  <div class="a" style="left:18px;top:141px;width:1px;height:20px;background:#b0b0b0"></div>
  <div class="a" style="left:134.8px;top:141px;width:1px;height:20px;background:#b0b0b0"></div>
  <div class="a" style="left:251.6px;top:141px;width:1px;height:20px;background:#b0b0b0"></div>
  <div class="a" style="left:311.4px;top:141px;width:1px;height:20px;background:#b0b0b0"></div>
  <div class="a" style="left:371.1px;top:141px;width:1px;height:20px;background:#b0b0b0"></div>
  <div class="a" style="left:431px;top:141px;width:1px;height:20px;background:#b0b0b0"></div>
  <!-- headers -->
  <div class="t" style="left:24px;top:144.3px;-webkit-text-stroke:0;color:#1a1a1a">Square 1</div>
  <div class="a" style="left:66px;top:146px;width:3px;height:5px;background:#111;clip-path:polygon(100% 0,0 50%,100% 100%)"></div>
  <div class="a" style="left:23px;top:153.6px;width:50px;height:3.4px;background:#7a7a7a;border-radius:1px"></div>
  <div class="a" style="left:23px;top:153.6px;width:30px;height:3.4px;background:linear-gradient(#48e048,#22c822 60%,#30d030);border-radius:1px"></div>
  <div class="t" style="left:82px;top:152px;color:#555">fx2</div>
  <div class="t" style="left:101px;top:152px;color:#555">fx3</div>
  <div class="t" style="left:119.5px;top:152px;color:#555">fx4</div>

  <div class="t" style="left:141px;top:144.3px;-webkit-text-stroke:0;color:#1a1a1a">Square 2</div>
  <div class="a" style="left:183px;top:146px;width:3px;height:5px;background:#111;clip-path:polygon(100% 0,0 50%,100% 100%)"></div>
  <div class="a" style="left:139.5px;top:153.6px;width:50px;height:3.4px;background:#7a7a7a;border-radius:1px"></div>
  <div class="a" style="left:139.5px;top:153.6px;width:26px;height:3.4px;background:linear-gradient(#48e048,#22c822 60%,#30d030);border-radius:1px"></div>
  <div class="t" style="left:199px;top:152px;color:#555">fx2</div>
  <div class="t" style="left:218px;top:152px;color:#555">fx3</div>
  <div class="t" style="left:236.5px;top:152px;color:#555">fx4</div>

  <div class="t" style="left:257px;top:144.3px;-webkit-text-stroke:0;color:#1a1a1a">Triangle</div>
  <div class="a" style="left:305px;top:146px;width:3px;height:5px;background:#111;clip-path:polygon(0 0,100% 50%,0 100%)"></div>
  <div class="a" style="left:256px;top:153.6px;width:50px;height:3.4px;background:repeating-linear-gradient(90deg,transparent 0,transparent 1.3px,rgba(0,0,0,0.15) 1.6px,rgba(0,0,0,0.15) 2.1px),linear-gradient(90deg,#2ad82a,#c8e020);border-radius:1px"></div>

  <div class="t" style="left:316px;top:144.3px;-webkit-text-stroke:0;color:#1a1a1a">Noise</div>
  <div class="a" style="left:365px;top:146px;width:3px;height:5px;background:#111;clip-path:polygon(0 0,100% 50%,0 100%)"></div>
  <div class="a" style="left:316px;top:153.6px;width:50px;height:3.4px;background:#7a7a7a;border-radius:1px"></div>
  <div class="a" style="left:316px;top:153.6px;width:20px;height:3.4px;background:linear-gradient(#48e048,#22c822 60%,#30d030);border-radius:1px"></div>

  <div class="t" style="left:376px;top:144.3px;-webkit-text-stroke:0;color:#1a1a1a">DPCM</div>
  <div class="a" style="left:425px;top:146px;width:3px;height:5px;background:#111;clip-path:polygon(0 0,100% 50%,0 100%)"></div>
  <div class="a" style="left:376px;top:153.6px;width:50px;height:3.4px;background:repeating-linear-gradient(90deg,transparent 0,transparent 1.3px,rgba(0,0,0,0.15) 1.6px,rgba(0,0,0,0.15) 2.1px),linear-gradient(90deg,#2ad82a,#c8e020);border-radius:1px"></div>

  <!-- pattern view -->
  <div class="a" style="left:0;top:161px;width:580px;height:331px"><svg class="pat" width="580" height="331" viewBox="0 0 580 331"><defs><filter id="pb" x="0" y="0" width="580" height="331" filterUnits="userSpaceOnUse" color-interpolation-filters="sRGB"><feConvolveMatrix order="3" kernelMatrix="0.025 0.1 0.025 0.1 0.5 0.1 0.025 0.1 0.025" edgeMode="duplicate"/></filter></defs><g><rect x="0" y="0" width="580" height="331" fill="#000"/><rect x="18.00" y="13.70" width="413.00" height="6.67" fill="#171706"/><rect x="18.00" y="40.39" width="413.00" height="6.67" fill="#171706"/><rect x="18.00" y="67.08" width="413.00" height="6.67" fill="#202009"/><rect x="18.00" y="93.77" width="413.00" height="6.67" fill="#171706"/><rect x="18.00" y="120.46" width="413.00" height="6.67" fill="#171706"/><rect x="18.00" y="147.16" width="413.00" height="6.67" fill="#171706"/><rect x="18.00" y="173.85" width="413.00" height="6.67" fill="#202009"/><rect x="18.00" y="200.54" width="413.00" height="6.67" fill="#171706"/><rect x="18.00" y="227.23" width="413.00" height="6.67" fill="#171706"/><rect x="18.00" y="253.92" width="413.00" height="6.67" fill="#171706"/><rect x="18.00" y="280.62" width="413.00" height="6.67" fill="#181806"/><rect x="18.00" y="307.31" width="413.00" height="6.67" fill="#121205"/><rect x="18.00" y="180.52" width="413.00" height="6.67" fill="#3630a4"/><rect x="19.20" y="180.72" width="17.00" height="6.27" fill="#a8a6c4"/><rect x="17.50" y="0" width="1" height="331" fill="#303030"/><rect x="134.30" y="0" width="1" height="331" fill="#303030"/><rect x="251.10" y="0" width="1" height="331" fill="#303030"/><rect x="310.90" y="0" width="1" height="331" fill="#303030"/><rect x="370.60" y="0" width="1" height="331" fill="#303030"/><rect x="430.50" y="0" width="1" height="331" fill="#303030"/><text class="rn" transform="scale(0.75 1)" x="10.13 16.00" y="6.75" fill="#00ae00" stroke="#00ae00">16</text><rect x="21.32" y="3.15" width="1.1" height="1.1" fill="#0f1c0f"/><rect x="26.86" y="3.15" width="1.1" height="1.1" fill="#0f1c0f"/><rect x="32.39" y="3.15" width="1.1" height="1.1" fill="#0f1c0f"/><rect x="40.14" y="3.15" width="1.1" height="1.1" fill="#0f1c0f"/><rect x="45.68" y="3.15" width="1.1" height="1.1" fill="#0f1c0f"/><rect x="53.43" y="3.15" width="1.1" height="1.1" fill="#0f1c0f"/><rect x="98.81" y="3.15" width="1.1" height="1.1" fill="#0f1c0f"/><rect x="104.35" y="3.15" width="1.1" height="1.1" fill="#0f1c0f"/><rect x="109.88" y="3.15" width="1.1" height="1.1" fill="#0f1c0f"/><rect x="117.63" y="3.15" width="1.1" height="1.1" fill="#0f1c0f"/><rect x="123.17" y="3.15" width="1.1" height="1.1" fill="#0f1c0f"/><rect x="128.70" y="3.15" width="1.1" height="1.1" fill="#0f1c0f"/><rect x="138.12" y="3.15" width="1.1" height="1.1" fill="#0f1c0f"/><rect x="143.66" y="3.15" width="1.1" height="1.1" fill="#0f1c0f"/><rect x="149.19" y="3.15" width="1.1" height="1.1" fill="#0f1c0f"/><rect x="156.94" y="3.15" width="1.1" height="1.1" fill="#0f1c0f"/><rect x="162.48" y="3.15" width="1.1" height="1.1" fill="#0f1c0f"/><rect x="170.23" y="3.15" width="1.1" height="1.1" fill="#0f1c0f"/><rect x="177.98" y="3.15" width="1.1" height="1.1" fill="#0f1c0f"/><rect x="183.51" y="3.15" width="1.1" height="1.1" fill="#0f1c0f"/><rect x="189.05" y="3.15" width="1.1" height="1.1" fill="#0f1c0f"/><rect x="196.80" y="3.15" width="1.1" height="1.1" fill="#0f1c0f"/><rect x="202.33" y="3.15" width="1.1" height="1.1" fill="#0f1c0f"/><rect x="207.87" y="3.15" width="1.1" height="1.1" fill="#0f1c0f"/><rect x="215.61" y="3.15" width="1.1" height="1.1" fill="#0f1c0f"/><rect x="221.15" y="3.15" width="1.1" height="1.1" fill="#0f1c0f"/><rect x="226.68" y="3.15" width="1.1" height="1.1" fill="#0f1c0f"/><rect x="234.43" y="3.15" width="1.1" height="1.1" fill="#0f1c0f"/><rect x="239.97" y="3.15" width="1.1" height="1.1" fill="#0f1c0f"/><rect x="245.50" y="3.15" width="1.1" height="1.1" fill="#0f1c0f"/><rect x="254.92" y="3.15" width="1.1" height="1.1" fill="#0f1c0f"/><rect x="260.46" y="3.15" width="1.1" height="1.1" fill="#0f1c0f"/><rect x="265.99" y="3.15" width="1.1" height="1.1" fill="#0f1c0f"/><rect x="273.74" y="3.15" width="1.1" height="1.1" fill="#0f1c0f"/><rect x="279.28" y="3.15" width="1.1" height="1.1" fill="#0f1c0f"/><rect x="287.03" y="3.15" width="1.1" height="1.1" fill="#0f1c0f"/><rect x="294.78" y="3.15" width="1.1" height="1.1" fill="#0f1c0f"/><rect x="300.31" y="3.15" width="1.1" height="1.1" fill="#0f1c0f"/><rect x="305.85" y="3.15" width="1.1" height="1.1" fill="#0f1c0f"/><rect x="314.72" y="3.15" width="1.1" height="1.1" fill="#0f1c0f"/><rect x="320.26" y="3.15" width="1.1" height="1.1" fill="#0f1c0f"/><rect x="325.79" y="3.15" width="1.1" height="1.1" fill="#0f1c0f"/><rect x="333.54" y="3.15" width="1.1" height="1.1" fill="#0f1c0f"/><rect x="339.08" y="3.15" width="1.1" height="1.1" fill="#0f1c0f"/><rect x="346.83" y="3.15" width="1.1" height="1.1" fill="#0f1c0f"/><rect x="354.58" y="3.15" width="1.1" height="1.1" fill="#0f1c0f"/><rect x="360.11" y="3.15" width="1.1" height="1.1" fill="#0f1c0f"/><rect x="365.65" y="3.15" width="1.1" height="1.1" fill="#0f1c0f"/><rect x="374.42" y="3.15" width="1.1" height="1.1" fill="#0f1c0f"/><rect x="379.96" y="3.15" width="1.1" height="1.1" fill="#0f1c0f"/><rect x="385.49" y="3.15" width="1.1" height="1.1" fill="#0f1c0f"/><rect x="393.24" y="3.15" width="1.1" height="1.1" fill="#0f1c0f"/><rect x="398.78" y="3.15" width="1.1" height="1.1" fill="#0f1c0f"/><rect x="406.53" y="3.15" width="1.1" height="1.1" fill="#0f1c0f"/><rect x="414.28" y="3.15" width="1.1" height="1.1" fill="#0f1c0f"/><rect x="419.81" y="3.15" width="1.1" height="1.1" fill="#0f1c0f"/><rect x="425.35" y="3.15" width="1.1" height="1.1" fill="#0f1c0f"/><text class="rn" transform="scale(0.75 1)" x="10.13 16.00" y="13.42" fill="#00ae00" stroke="#00ae00">17</text><rect x="21.32" y="9.82" width="1.1" height="1.1" fill="#0f1c0f"/><rect x="26.86" y="9.82" width="1.1" height="1.1" fill="#0f1c0f"/><rect x="32.39" y="9.82" width="1.1" height="1.1" fill="#0f1c0f"/><rect x="40.14" y="9.82" width="1.1" height="1.1" fill="#0f1c0f"/><rect x="45.68" y="9.82" width="1.1" height="1.1" fill="#0f1c0f"/><rect x="53.43" y="9.82" width="1.1" height="1.1" fill="#0f1c0f"/><rect x="61.18" y="9.82" width="1.1" height="1.1" fill="#0f1c0f"/><rect x="66.71" y="9.82" width="1.1" height="1.1" fill="#0f1c0f"/><rect x="72.25" y="9.82" width="1.1" height="1.1" fill="#0f1c0f"/><rect x="80.00" y="9.82" width="1.1" height="1.1" fill="#0f1c0f"/><rect x="85.53" y="9.82" width="1.1" height="1.1" fill="#0f1c0f"/><rect x="91.07" y="9.82" width="1.1" height="1.1" fill="#0f1c0f"/><rect x="98.81" y="9.82" width="1.1" height="1.1" fill="#0f1c0f"/><rect x="104.35" y="9.82" width="1.1" height="1.1" fill="#0f1c0f"/><rect x="109.88" y="9.82" width="1.1" height="1.1" fill="#0f1c0f"/><rect x="117.63" y="9.82" width="1.1" height="1.1" fill="#0f1c0f"/><rect x="123.17" y="9.82" width="1.1" height="1.1" fill="#0f1c0f"/><rect x="128.70" y="9.82" width="1.1" height="1.1" fill="#0f1c0f"/><rect x="138.12" y="9.82" width="1.1" height="1.1" fill="#0f1c0f"/><rect x="143.66" y="9.82" width="1.1" height="1.1" fill="#0f1c0f"/><rect x="149.19" y="9.82" width="1.1" height="1.1" fill="#0f1c0f"/><rect x="156.94" y="9.82" width="1.1" height="1.1" fill="#0f1c0f"/><rect x="162.48" y="9.82" width="1.1" height="1.1" fill="#0f1c0f"/><rect x="196.80" y="9.82" width="1.1" height="1.1" fill="#0f1c0f"/><rect x="202.33" y="9.82" width="1.1" height="1.1" fill="#0f1c0f"/><rect x="207.87" y="9.82" width="1.1" height="1.1" fill="#0f1c0f"/><rect x="215.61" y="9.82" width="1.1" height="1.1" fill="#0f1c0f"/><rect x="221.15" y="9.82" width="1.1" height="1.1" fill="#0f1c0f"/><rect x="226.68" y="9.82" width="1.1" height="1.1" fill="#0f1c0f"/><rect x="234.43" y="9.82" width="1.1" height="1.1" fill="#0f1c0f"/><rect x="239.97" y="9.82" width="1.1" height="1.1" fill="#0f1c0f"/><rect x="245.50" y="9.82" width="1.1" height="1.1" fill="#0f1c0f"/><rect x="257.14" y="9.42" width="10.63" height="1.8" fill="#00cd00"/><rect x="273.74" y="9.82" width="1.1" height="1.1" fill="#0f1c0f"/><rect x="279.28" y="9.82" width="1.1" height="1.1" fill="#0f1c0f"/><rect x="287.03" y="9.82" width="1.1" height="1.1" fill="#0f1c0f"/><rect x="314.72" y="9.82" width="1.1" height="1.1" fill="#0f1c0f"/><rect x="320.26" y="9.82" width="1.1" height="1.1" fill="#0f1c0f"/><rect x="325.79" y="9.82" width="1.1" height="1.1" fill="#0f1c0f"/><rect x="333.54" y="9.82" width="1.1" height="1.1" fill="#0f1c0f"/><rect x="339.08" y="9.82" width="1.1" height="1.1" fill="#0f1c0f"/><rect x="346.83" y="9.82" width="1.1" height="1.1" fill="#0f1c0f"/><rect x="354.58" y="9.82" width="1.1" height="1.1" fill="#0f1c0f"/><rect x="360.11" y="9.82" width="1.1" height="1.1" fill="#0f1c0f"/><rect x="365.65" y="9.82" width="1.1" height="1.1" fill="#0f1c0f"/><rect x="374.42" y="9.82" width="1.1" height="1.1" fill="#0f1c0f"/><rect x="379.96" y="9.82" width="1.1" height="1.1" fill="#0f1c0f"/><rect x="385.49" y="9.82" width="1.1" height="1.1" fill="#0f1c0f"/><rect x="393.24" y="9.82" width="1.1" height="1.1" fill="#0f1c0f"/><rect x="398.78" y="9.82" width="1.1" height="1.1" fill="#0f1c0f"/><rect x="406.53" y="9.82" width="1.1" height="1.1" fill="#0f1c0f"/><rect x="414.28" y="9.82" width="1.1" height="1.1" fill="#0f1c0f"/><rect x="419.81" y="9.82" width="1.1" height="1.1" fill="#0f1c0f"/><rect x="425.35" y="9.82" width="1.1" height="1.1" fill="#0f1c0f"/><text class="rn" transform="scale(0.75 1)" x="10.13 16.00" y="20.10" fill="#c3c300" stroke="#c3c300">18</text><rect x="21.32" y="16.50" width="1.1" height="1.1" fill="#323214"/><rect x="26.86" y="16.50" width="1.1" height="1.1" fill="#323214"/><rect x="32.39" y="16.50" width="1.1" height="1.1" fill="#323214"/><rect x="40.14" y="16.50" width="1.1" height="1.1" fill="#323214"/><rect x="45.68" y="16.50" width="1.1" height="1.1" fill="#323214"/><rect x="53.43" y="16.50" width="1.1" height="1.1" fill="#323214"/><rect x="61.18" y="16.50" width="1.1" height="1.1" fill="#323214"/><rect x="66.71" y="16.50" width="1.1" height="1.1" fill="#323214"/><rect x="72.25" y="16.50" width="1.1" height="1.1" fill="#323214"/><rect x="80.00" y="16.50" width="1.1" height="1.1" fill="#323214"/><rect x="85.53" y="16.50" width="1.1" height="1.1" fill="#323214"/><rect x="91.07" y="16.50" width="1.1" height="1.1" fill="#323214"/><rect x="98.81" y="16.50" width="1.1" height="1.1" fill="#323214"/><rect x="104.35" y="16.50" width="1.1" height="1.1" fill="#323214"/><rect x="109.88" y="16.50" width="1.1" height="1.1" fill="#323214"/><rect x="117.63" y="16.50" width="1.1" height="1.1" fill="#323214"/><rect x="123.17" y="16.50" width="1.1" height="1.1" fill="#323214"/><rect x="128.70" y="16.50" width="1.1" height="1.1" fill="#323214"/><rect x="196.80" y="16.50" width="1.1" height="1.1" fill="#323214"/><rect x="202.33" y="16.50" width="1.1" height="1.1" fill="#323214"/><rect x="207.87" y="16.50" width="1.1" height="1.1" fill="#323214"/><rect x="215.61" y="16.50" width="1.1" height="1.1" fill="#323214"/><rect x="221.15" y="16.50" width="1.1" height="1.1" fill="#323214"/><rect x="226.68" y="16.50" width="1.1" height="1.1" fill="#323214"/><rect x="234.43" y="16.50" width="1.1" height="1.1" fill="#323214"/><rect x="239.97" y="16.50" width="1.1" height="1.1" fill="#323214"/><rect x="245.50" y="16.50" width="1.1" height="1.1" fill="#323214"/><rect x="287.03" y="16.50" width="1.1" height="1.1" fill="#323214"/><rect x="294.78" y="16.50" width="1.1" height="1.1" fill="#323214"/><rect x="300.31" y="16.50" width="1.1" height="1.1" fill="#323214"/><rect x="305.85" y="16.50" width="1.1" height="1.1" fill="#323214"/><rect x="406.53" y="16.50" width="1.1" height="1.1" fill="#323214"/><text class="rn" transform="scale(0.75 1)" x="10.13 16.00" y="26.77" fill="#00ae00" stroke="#00ae00">19</text><rect x="21.32" y="23.17" width="1.1" height="1.1" fill="#0f1c0f"/><rect x="26.86" y="23.17" width="1.1" height="1.1" fill="#0f1c0f"/><rect x="32.39" y="23.17" width="1.1" height="1.1" fill="#0f1c0f"/><rect x="40.14" y="23.17" width="1.1" height="1.1" fill="#0f1c0f"/><rect x="45.68" y="23.17" width="1.1" height="1.1" fill="#0f1c0f"/><rect x="53.43" y="23.17" width="1.1" height="1.1" fill="#0f1c0f"/><rect x="61.18" y="23.17" width="1.1" height="1.1" fill="#0f1c0f"/><rect x="66.71" y="23.17" width="1.1" height="1.1" fill="#0f1c0f"/><rect x="72.25" y="23.17" width="1.1" height="1.1" fill="#0f1c0f"/><rect x="80.00" y="23.17" width="1.1" height="1.1" fill="#0f1c0f"/><rect x="85.53" y="23.17" width="1.1" height="1.1" fill="#0f1c0f"/><rect x="91.07" y="23.17" width="1.1" height="1.1" fill="#0f1c0f"/><rect x="98.81" y="23.17" width="1.1" height="1.1" fill="#0f1c0f"/><rect x="104.35" y="23.17" width="1.1" height="1.1" fill="#0f1c0f"/><rect x="109.88" y="23.17" width="1.1" height="1.1" fill="#0f1c0f"/><rect x="117.63" y="23.17" width="1.1" height="1.1" fill="#0f1c0f"/><rect x="123.17" y="23.17" width="1.1" height="1.1" fill="#0f1c0f"/><rect x="128.70" y="23.17" width="1.1" height="1.1" fill="#0f1c0f"/><rect x="138.12" y="23.17" width="1.1" height="1.1" fill="#0f1c0f"/><rect x="143.66" y="23.17" width="1.1" height="1.1" fill="#0f1c0f"/><rect x="149.19" y="23.17" width="1.1" height="1.1" fill="#0f1c0f"/><rect x="156.94" y="23.17" width="1.1" height="1.1" fill="#0f1c0f"/><rect x="162.48" y="23.17" width="1.1" height="1.1" fill="#0f1c0f"/><rect x="196.80" y="23.17" width="1.1" height="1.1" fill="#0f1c0f"/><rect x="202.33" y="23.17" width="1.1" height="1.1" fill="#0f1c0f"/><rect x="207.87" y="23.17" width="1.1" height="1.1" fill="#0f1c0f"/><rect x="215.61" y="23.17" width="1.1" height="1.1" fill="#0f1c0f"/><rect x="221.15" y="23.17" width="1.1" height="1.1" fill="#0f1c0f"/><rect x="226.68" y="23.17" width="1.1" height="1.1" fill="#0f1c0f"/><rect x="234.43" y="23.17" width="1.1" height="1.1" fill="#0f1c0f"/><rect x="239.97" y="23.17" width="1.1" height="1.1" fill="#0f1c0f"/><rect x="245.50" y="23.17" width="1.1" height="1.1" fill="#0f1c0f"/><rect x="257.14" y="22.77" width="10.63" height="1.8" fill="#00cd00"/><rect x="273.74" y="23.17" width="1.1" height="1.1" fill="#0f1c0f"/><rect x="279.28" y="23.17" width="1.1" height="1.1" fill="#0f1c0f"/><rect x="287.03" y="23.17" width="1.1" height="1.1" fill="#0f1c0f"/><rect x="314.72" y="23.17" width="1.1" height="1.1" fill="#0f1c0f"/><rect x="320.26" y="23.17" width="1.1" height="1.1" fill="#0f1c0f"/><rect x="325.79" y="23.17" width="1.1" height="1.1" fill="#0f1c0f"/><rect x="333.54" y="23.17" width="1.1" height="1.1" fill="#0f1c0f"/><rect x="339.08" y="23.17" width="1.1" height="1.1" fill="#0f1c0f"/><rect x="346.83" y="23.17" width="1.1" height="1.1" fill="#0f1c0f"/><rect x="354.58" y="23.17" width="1.1" height="1.1" fill="#0f1c0f"/><rect x="360.11" y="23.17" width="1.1" height="1.1" fill="#0f1c0f"/><rect x="365.65" y="23.17" width="1.1" height="1.1" fill="#0f1c0f"/><rect x="374.42" y="23.17" width="1.1" height="1.1" fill="#0f1c0f"/><rect x="379.96" y="23.17" width="1.1" height="1.1" fill="#0f1c0f"/><rect x="385.49" y="23.17" width="1.1" height="1.1" fill="#0f1c0f"/><rect x="393.24" y="23.17" width="1.1" height="1.1" fill="#0f1c0f"/><rect x="398.78" y="23.17" width="1.1" height="1.1" fill="#0f1c0f"/><rect x="406.53" y="23.17" width="1.1" height="1.1" fill="#0f1c0f"/><rect x="414.28" y="23.17" width="1.1" height="1.1" fill="#0f1c0f"/><rect x="419.81" y="23.17" width="1.1" height="1.1" fill="#0f1c0f"/><rect x="425.35" y="23.17" width="1.1" height="1.1" fill="#0f1c0f"/><text class="rn" transform="scale(0.75 1)" x="10.13 16.00" y="33.44" fill="#00ae00" stroke="#00ae00">1A</text><rect x="98.81" y="29.84" width="1.1" height="1.1" fill="#0f1c0f"/><rect x="104.35" y="29.84" width="1.1" height="1.1" fill="#0f1c0f"/><rect x="109.88" y="29.84" width="1.1" height="1.1" fill="#0f1c0f"/><rect x="117.63" y="29.84" width="1.1" height="1.1" fill="#0f1c0f"/><rect x="123.17" y="29.84" width="1.1" height="1.1" fill="#0f1c0f"/><rect x="128.70" y="29.84" width="1.1" height="1.1" fill="#0f1c0f"/><rect x="177.98" y="29.84" width="1.1" height="1.1" fill="#0f1c0f"/><rect x="183.51" y="29.84" width="1.1" height="1.1" fill="#0f1c0f"/><rect x="189.05" y="29.84" width="1.1" height="1.1" fill="#0f1c0f"/><rect x="196.80" y="29.84" width="1.1" height="1.1" fill="#0f1c0f"/><rect x="202.33" y="29.84" width="1.1" height="1.1" fill="#0f1c0f"/><rect x="207.87" y="29.84" width="1.1" height="1.1" fill="#0f1c0f"/><rect x="215.61" y="29.84" width="1.1" height="1.1" fill="#0f1c0f"/><rect x="221.15" y="29.84" width="1.1" height="1.1" fill="#0f1c0f"/><rect x="226.68" y="29.84" width="1.1" height="1.1" fill="#0f1c0f"/><rect x="234.43" y="29.84" width="1.1" height="1.1" fill="#0f1c0f"/><rect x="239.97" y="29.84" width="1.1" height="1.1" fill="#0f1c0f"/><rect x="245.50" y="29.84" width="1.1" height="1.1" fill="#0f1c0f"/><rect x="287.03" y="29.84" width="1.1" height="1.1" fill="#0f1c0f"/><rect x="294.78" y="29.84" width="1.1" height="1.1" fill="#0f1c0f"/><rect x="300.31" y="29.84" width="1.1" height="1.1" fill="#0f1c0f"/><rect x="305.85" y="29.84" width="1.1" height="1.1" fill="#0f1c0f"/><rect x="314.72" y="29.84" width="1.1" height="1.1" fill="#0f1c0f"/><rect x="320.26" y="29.84" width="1.1" height="1.1" fill="#0f1c0f"/><rect x="325.79" y="29.84" width="1.1" height="1.1" fill="#0f1c0f"/><rect x="333.54" y="29.84" width="1.1" height="1.1" fill="#0f1c0f"/><rect x="339.08" y="29.84" width="1.1" height="1.1" fill="#0f1c0f"/><rect x="346.83" y="29.84" width="1.1" height="1.1" fill="#0f1c0f"/><rect x="354.58" y="29.84" width="1.1" height="1.1" fill="#0f1c0f"/><rect x="360.11" y="29.84" width="1.1" height="1.1" fill="#0f1c0f"/><rect x="365.65" y="29.84" width="1.1" height="1.1" fill="#0f1c0f"/><rect x="374.42" y="29.84" width="1.1" height="1.1" fill="#0f1c0f"/><rect x="379.96" y="29.84" width="1.1" height="1.1" fill="#0f1c0f"/><rect x="385.49" y="29.84" width="1.1" height="1.1" fill="#0f1c0f"/><rect x="393.24" y="29.84" width="1.1" height="1.1" fill="#0f1c0f"/><rect x="398.78" y="29.84" width="1.1" height="1.1" fill="#0f1c0f"/><rect x="406.53" y="29.84" width="1.1" height="1.1" fill="#0f1c0f"/><rect x="414.28" y="29.84" width="1.1" height="1.1" fill="#0f1c0f"/><rect x="419.81" y="29.84" width="1.1" height="1.1" fill="#0f1c0f"/><rect x="425.35" y="29.84" width="1.1" height="1.1" fill="#0f1c0f"/><text class="rn" transform="scale(0.75 1)" x="10.13 16.00" y="40.12" fill="#00ae00" stroke="#00ae00">1B</text><rect x="21.32" y="36.52" width="1.1" height="1.1" fill="#0f1c0f"/><rect x="26.86" y="36.52" width="1.1" height="1.1" fill="#0f1c0f"/><rect x="32.39" y="36.52" width="1.1" height="1.1" fill="#0f1c0f"/><rect x="40.14" y="36.52" width="1.1" height="1.1" fill="#0f1c0f"/><rect x="45.68" y="36.52" width="1.1" height="1.1" fill="#0f1c0f"/><rect x="53.43" y="36.52" width="1.1" height="1.1" fill="#0f1c0f"/><rect x="61.18" y="36.52" width="1.1" height="1.1" fill="#0f1c0f"/><rect x="66.71" y="36.52" width="1.1" height="1.1" fill="#0f1c0f"/><rect x="72.25" y="36.52" width="1.1" height="1.1" fill="#0f1c0f"/><rect x="80.00" y="36.52" width="1.1" height="1.1" fill="#0f1c0f"/><rect x="85.53" y="36.52" width="1.1" height="1.1" fill="#0f1c0f"/><rect x="91.07" y="36.52" width="1.1" height="1.1" fill="#0f1c0f"/><rect x="98.81" y="36.52" width="1.1" height="1.1" fill="#0f1c0f"/><rect x="104.35" y="36.52" width="1.1" height="1.1" fill="#0f1c0f"/><rect x="109.88" y="36.52" width="1.1" height="1.1" fill="#0f1c0f"/><rect x="117.63" y="36.52" width="1.1" height="1.1" fill="#0f1c0f"/><rect x="123.17" y="36.52" width="1.1" height="1.1" fill="#0f1c0f"/><rect x="128.70" y="36.52" width="1.1" height="1.1" fill="#0f1c0f"/><rect x="138.12" y="36.52" width="1.1" height="1.1" fill="#0f1c0f"/><rect x="143.66" y="36.52" width="1.1" height="1.1" fill="#0f1c0f"/><rect x="149.19" y="36.52" width="1.1" height="1.1" fill="#0f1c0f"/><rect x="156.94" y="36.52" width="1.1" height="1.1" fill="#0f1c0f"/><rect x="162.48" y="36.52" width="1.1" height="1.1" fill="#0f1c0f"/><rect x="196.80" y="36.52" width="1.1" height="1.1" fill="#0f1c0f"/><rect x="202.33" y="36.52" width="1.1" height="1.1" fill="#0f1c0f"/><rect x="207.87" y="36.52" width="1.1" height="1.1" fill="#0f1c0f"/><rect x="215.61" y="36.52" width="1.1" height="1.1" fill="#0f1c0f"/><rect x="221.15" y="36.52" width="1.1" height="1.1" fill="#0f1c0f"/><rect x="226.68" y="36.52" width="1.1" height="1.1" fill="#0f1c0f"/><rect x="234.43" y="36.52" width="1.1" height="1.1" fill="#0f1c0f"/><rect x="239.97" y="36.52" width="1.1" height="1.1" fill="#0f1c0f"/><rect x="245.50" y="36.52" width="1.1" height="1.1" fill="#0f1c0f"/><rect x="254.92" y="36.52" width="1.1" height="1.1" fill="#0f1c0f"/><rect x="260.46" y="36.52" width="1.1" height="1.1" fill="#0f1c0f"/><rect x="265.99" y="36.52" width="1.1" height="1.1" fill="#0f1c0f"/><rect x="273.74" y="36.52" width="1.1" height="1.1" fill="#0f1c0f"/><rect x="279.28" y="36.52" width="1.1" height="1.1" fill="#0f1c0f"/><rect x="287.03" y="36.52" width="1.1" height="1.1" fill="#0f1c0f"/><rect x="294.78" y="36.52" width="1.1" height="1.1" fill="#0f1c0f"/><rect x="300.31" y="36.52" width="1.1" height="1.1" fill="#0f1c0f"/><rect x="305.85" y="36.52" width="1.1" height="1.1" fill="#0f1c0f"/><rect x="314.72" y="36.52" width="1.1" height="1.1" fill="#0f1c0f"/><rect x="320.26" y="36.52" width="1.1" height="1.1" fill="#0f1c0f"/><rect x="325.79" y="36.52" width="1.1" height="1.1" fill="#0f1c0f"/><rect x="333.54" y="36.52" width="1.1" height="1.1" fill="#0f1c0f"/><rect x="339.08" y="36.52" width="1.1" height="1.1" fill="#0f1c0f"/><rect x="346.83" y="36.52" width="1.1" height="1.1" fill="#0f1c0f"/><rect x="354.58" y="36.52" width="1.1" height="1.1" fill="#0f1c0f"/><rect x="360.11" y="36.52" width="1.1" height="1.1" fill="#0f1c0f"/><rect x="365.65" y="36.52" width="1.1" height="1.1" fill="#0f1c0f"/><rect x="374.42" y="36.52" width="1.1" height="1.1" fill="#0f1c0f"/><rect x="379.96" y="36.52" width="1.1" height="1.1" fill="#0f1c0f"/><rect x="385.49" y="36.52" width="1.1" height="1.1" fill="#0f1c0f"/><rect x="393.24" y="36.52" width="1.1" height="1.1" fill="#0f1c0f"/><rect x="398.78" y="36.52" width="1.1" height="1.1" fill="#0f1c0f"/><rect x="406.53" y="36.52" width="1.1" height="1.1" fill="#0f1c0f"/><rect x="414.28" y="36.52" width="1.1" height="1.1" fill="#0f1c0f"/><rect x="419.81" y="36.52" width="1.1" height="1.1" fill="#0f1c0f"/><rect x="425.35" y="36.52" width="1.1" height="1.1" fill="#0f1c0f"/><text class="rn" transform="scale(0.75 1)" x="10.13 16.00" y="46.79" fill="#c3c300" stroke="#c3c300">1C</text><rect x="53.43" y="43.19" width="1.1" height="1.1" fill="#323214"/><rect x="61.18" y="43.19" width="1.1" height="1.1" fill="#323214"/><rect x="66.71" y="43.19" width="1.1" height="1.1" fill="#323214"/><rect x="72.25" y="43.19" width="1.1" height="1.1" fill="#323214"/><rect x="80.00" y="43.19" width="1.1" height="1.1" fill="#323214"/><rect x="85.53" y="43.19" width="1.1" height="1.1" fill="#323214"/><rect x="91.07" y="43.19" width="1.1" height="1.1" fill="#323214"/><rect x="98.81" y="43.19" width="1.1" height="1.1" fill="#323214"/><rect x="104.35" y="43.19" width="1.1" height="1.1" fill="#323214"/><rect x="109.88" y="43.19" width="1.1" height="1.1" fill="#323214"/><rect x="117.63" y="43.19" width="1.1" height="1.1" fill="#323214"/><rect x="123.17" y="43.19" width="1.1" height="1.1" fill="#323214"/><rect x="128.70" y="43.19" width="1.1" height="1.1" fill="#323214"/><rect x="177.98" y="43.19" width="1.1" height="1.1" fill="#323214"/><rect x="183.51" y="43.19" width="1.1" height="1.1" fill="#323214"/><rect x="189.05" y="43.19" width="1.1" height="1.1" fill="#323214"/><rect x="196.80" y="43.19" width="1.1" height="1.1" fill="#323214"/><rect x="202.33" y="43.19" width="1.1" height="1.1" fill="#323214"/><rect x="207.87" y="43.19" width="1.1" height="1.1" fill="#323214"/><rect x="215.61" y="43.19" width="1.1" height="1.1" fill="#323214"/><rect x="221.15" y="43.19" width="1.1" height="1.1" fill="#323214"/><rect x="226.68" y="43.19" width="1.1" height="1.1" fill="#323214"/><rect x="234.43" y="43.19" width="1.1" height="1.1" fill="#323214"/><rect x="239.97" y="43.19" width="1.1" height="1.1" fill="#323214"/><rect x="245.50" y="43.19" width="1.1" height="1.1" fill="#323214"/><rect x="257.14" y="42.79" width="10.63" height="1.8" fill="#cdcd00"/><rect x="273.74" y="43.19" width="1.1" height="1.1" fill="#323214"/><rect x="279.28" y="43.19" width="1.1" height="1.1" fill="#323214"/><rect x="287.03" y="43.19" width="1.1" height="1.1" fill="#323214"/><rect x="294.78" y="43.19" width="1.1" height="1.1" fill="#323214"/><rect x="300.31" y="43.19" width="1.1" height="1.1" fill="#323214"/><rect x="305.85" y="43.19" width="1.1" height="1.1" fill="#323214"/><rect x="354.58" y="43.19" width="1.1" height="1.1" fill="#323214"/><rect x="360.11" y="43.19" width="1.1" height="1.1" fill="#323214"/><rect x="365.65" y="43.19" width="1.1" height="1.1" fill="#323214"/><rect x="406.53" y="43.19" width="1.1" height="1.1" fill="#323214"/><text class="rn" transform="scale(0.75 1)" x="10.13 16.00" y="53.46" fill="#00ae00" stroke="#00ae00">1D</text><rect x="21.32" y="49.86" width="1.1" height="1.1" fill="#0f1c0f"/><rect x="26.86" y="49.86" width="1.1" height="1.1" fill="#0f1c0f"/><rect x="32.39" y="49.86" width="1.1" height="1.1" fill="#0f1c0f"/><rect x="40.14" y="49.86" width="1.1" height="1.1" fill="#0f1c0f"/><rect x="45.68" y="49.86" width="1.1" height="1.1" fill="#0f1c0f"/><rect x="53.43" y="49.86" width="1.1" height="1.1" fill="#0f1c0f"/><rect x="61.18" y="49.86" width="1.1" height="1.1" fill="#0f1c0f"/><rect x="66.71" y="49.86" width="1.1" height="1.1" fill="#0f1c0f"/><rect x="72.25" y="49.86" width="1.1" height="1.1" fill="#0f1c0f"/><rect x="80.00" y="49.86" width="1.1" height="1.1" fill="#0f1c0f"/><rect x="85.53" y="49.86" width="1.1" height="1.1" fill="#0f1c0f"/><rect x="91.07" y="49.86" width="1.1" height="1.1" fill="#0f1c0f"/><rect x="98.81" y="49.86" width="1.1" height="1.1" fill="#0f1c0f"/><rect x="104.35" y="49.86" width="1.1" height="1.1" fill="#0f1c0f"/><rect x="109.88" y="49.86" width="1.1" height="1.1" fill="#0f1c0f"/><rect x="117.63" y="49.86" width="1.1" height="1.1" fill="#0f1c0f"/><rect x="123.17" y="49.86" width="1.1" height="1.1" fill="#0f1c0f"/><rect x="128.70" y="49.86" width="1.1" height="1.1" fill="#0f1c0f"/><rect x="138.12" y="49.86" width="1.1" height="1.1" fill="#0f1c0f"/><rect x="143.66" y="49.86" width="1.1" height="1.1" fill="#0f1c0f"/><rect x="149.19" y="49.86" width="1.1" height="1.1" fill="#0f1c0f"/><rect x="156.94" y="49.86" width="1.1" height="1.1" fill="#0f1c0f"/><rect x="162.48" y="49.86" width="1.1" height="1.1" fill="#0f1c0f"/><rect x="196.80" y="49.86" width="1.1" height="1.1" fill="#0f1c0f"/><rect x="202.33" y="49.86" width="1.1" height="1.1" fill="#0f1c0f"/><rect x="207.87" y="49.86" width="1.1" height="1.1" fill="#0f1c0f"/><rect x="215.61" y="49.86" width="1.1" height="1.1" fill="#0f1c0f"/><rect x="221.15" y="49.86" width="1.1" height="1.1" fill="#0f1c0f"/><rect x="226.68" y="49.86" width="1.1" height="1.1" fill="#0f1c0f"/><rect x="234.43" y="49.86" width="1.1" height="1.1" fill="#0f1c0f"/><rect x="239.97" y="49.86" width="1.1" height="1.1" fill="#0f1c0f"/><rect x="245.50" y="49.86" width="1.1" height="1.1" fill="#0f1c0f"/><rect x="254.92" y="49.86" width="1.1" height="1.1" fill="#0f1c0f"/><rect x="260.46" y="49.86" width="1.1" height="1.1" fill="#0f1c0f"/><rect x="265.99" y="49.86" width="1.1" height="1.1" fill="#0f1c0f"/><rect x="273.74" y="49.86" width="1.1" height="1.1" fill="#0f1c0f"/><rect x="279.28" y="49.86" width="1.1" height="1.1" fill="#0f1c0f"/><rect x="287.03" y="49.86" width="1.1" height="1.1" fill="#0f1c0f"/><rect x="294.78" y="49.86" width="1.1" height="1.1" fill="#0f1c0f"/><rect x="300.31" y="49.86" width="1.1" height="1.1" fill="#0f1c0f"/><rect x="305.85" y="49.86" width="1.1" height="1.1" fill="#0f1c0f"/><rect x="314.72" y="49.86" width="1.1" height="1.1" fill="#0f1c0f"/><rect x="320.26" y="49.86" width="1.1" height="1.1" fill="#0f1c0f"/><rect x="325.79" y="49.86" width="1.1" height="1.1" fill="#0f1c0f"/><rect x="333.54" y="49.86" width="1.1" height="1.1" fill="#0f1c0f"/><rect x="339.08" y="49.86" width="1.1" height="1.1" fill="#0f1c0f"/><rect x="346.83" y="49.86" width="1.1" height="1.1" fill="#0f1c0f"/><rect x="354.58" y="49.86" width="1.1" height="1.1" fill="#0f1c0f"/><rect x="360.11" y="49.86" width="1.1" height="1.1" fill="#0f1c0f"/><rect x="365.65" y="49.86" width="1.1" height="1.1" fill="#0f1c0f"/><rect x="374.42" y="49.86" width="1.1" height="1.1" fill="#0f1c0f"/><rect x="379.96" y="49.86" width="1.1" height="1.1" fill="#0f1c0f"/><rect x="385.49" y="49.86" width="1.1" height="1.1" fill="#0f1c0f"/><rect x="393.24" y="49.86" width="1.1" height="1.1" fill="#0f1c0f"/><rect x="398.78" y="49.86" width="1.1" height="1.1" fill="#0f1c0f"/><rect x="406.53" y="49.86" width="1.1" height="1.1" fill="#0f1c0f"/><rect x="414.28" y="49.86" width="1.1" height="1.1" fill="#0f1c0f"/><rect x="419.81" y="49.86" width="1.1" height="1.1" fill="#0f1c0f"/><rect x="425.35" y="49.86" width="1.1" height="1.1" fill="#0f1c0f"/><text class="rn" transform="scale(0.75 1)" x="10.13 16.00" y="60.13" fill="#00ae00" stroke="#00ae00">1E</text><rect x="53.43" y="56.53" width="1.1" height="1.1" fill="#0f1c0f"/><rect x="61.18" y="56.53" width="1.1" height="1.1" fill="#0f1c0f"/><rect x="66.71" y="56.53" width="1.1" height="1.1" fill="#0f1c0f"/><rect x="72.25" y="56.53" width="1.1" height="1.1" fill="#0f1c0f"/><rect x="80.00" y="56.53" width="1.1" height="1.1" fill="#0f1c0f"/><rect x="85.53" y="56.53" width="1.1" height="1.1" fill="#0f1c0f"/><rect x="91.07" y="56.53" width="1.1" height="1.1" fill="#0f1c0f"/><rect x="98.81" y="56.53" width="1.1" height="1.1" fill="#0f1c0f"/><rect x="104.35" y="56.53" width="1.1" height="1.1" fill="#0f1c0f"/><rect x="109.88" y="56.53" width="1.1" height="1.1" fill="#0f1c0f"/><rect x="117.63" y="56.53" width="1.1" height="1.1" fill="#0f1c0f"/><rect x="123.17" y="56.53" width="1.1" height="1.1" fill="#0f1c0f"/><rect x="128.70" y="56.53" width="1.1" height="1.1" fill="#0f1c0f"/><rect x="177.98" y="56.53" width="1.1" height="1.1" fill="#0f1c0f"/><rect x="183.51" y="56.53" width="1.1" height="1.1" fill="#0f1c0f"/><rect x="189.05" y="56.53" width="1.1" height="1.1" fill="#0f1c0f"/><rect x="196.80" y="56.53" width="1.1" height="1.1" fill="#0f1c0f"/><rect x="202.33" y="56.53" width="1.1" height="1.1" fill="#0f1c0f"/><rect x="207.87" y="56.53" width="1.1" height="1.1" fill="#0f1c0f"/><rect x="215.61" y="56.53" width="1.1" height="1.1" fill="#0f1c0f"/><rect x="221.15" y="56.53" width="1.1" height="1.1" fill="#0f1c0f"/><rect x="226.68" y="56.53" width="1.1" height="1.1" fill="#0f1c0f"/><rect x="234.43" y="56.53" width="1.1" height="1.1" fill="#0f1c0f"/><rect x="239.97" y="56.53" width="1.1" height="1.1" fill="#0f1c0f"/><rect x="245.50" y="56.53" width="1.1" height="1.1" fill="#0f1c0f"/><rect x="287.03" y="56.53" width="1.1" height="1.1" fill="#0f1c0f"/><rect x="294.78" y="56.53" width="1.1" height="1.1" fill="#0f1c0f"/><rect x="300.31" y="56.53" width="1.1" height="1.1" fill="#0f1c0f"/><rect x="305.85" y="56.53" width="1.1" height="1.1" fill="#0f1c0f"/><rect x="314.72" y="56.53" width="1.1" height="1.1" fill="#0f1c0f"/><rect x="320.26" y="56.53" width="1.1" height="1.1" fill="#0f1c0f"/><rect x="325.79" y="56.53" width="1.1" height="1.1" fill="#0f1c0f"/><rect x="333.54" y="56.53" width="1.1" height="1.1" fill="#0f1c0f"/><rect x="339.08" y="56.53" width="1.1" height="1.1" fill="#0f1c0f"/><rect x="346.83" y="56.53" width="1.1" height="1.1" fill="#0f1c0f"/><rect x="354.58" y="56.53" width="1.1" height="1.1" fill="#0f1c0f"/><rect x="360.11" y="56.53" width="1.1" height="1.1" fill="#0f1c0f"/><rect x="365.65" y="56.53" width="1.1" height="1.1" fill="#0f1c0f"/><rect x="374.42" y="56.53" width="1.1" height="1.1" fill="#0f1c0f"/><rect x="379.96" y="56.53" width="1.1" height="1.1" fill="#0f1c0f"/><rect x="385.49" y="56.53" width="1.1" height="1.1" fill="#0f1c0f"/><rect x="393.24" y="56.53" width="1.1" height="1.1" fill="#0f1c0f"/><rect x="398.78" y="56.53" width="1.1" height="1.1" fill="#0f1c0f"/><rect x="406.53" y="56.53" width="1.1" height="1.1" fill="#0f1c0f"/><rect x="414.28" y="56.53" width="1.1" height="1.1" fill="#0f1c0f"/><rect x="419.81" y="56.53" width="1.1" height="1.1" fill="#0f1c0f"/><rect x="425.35" y="56.53" width="1.1" height="1.1" fill="#0f1c0f"/><text class="rn" transform="scale(0.75 1)" x="10.13 16.00" y="66.81" fill="#00ae00" stroke="#00ae00">1F</text><rect x="21.32" y="63.21" width="1.1" height="1.1" fill="#0f1c0f"/><rect x="26.86" y="63.21" width="1.1" height="1.1" fill="#0f1c0f"/><rect x="32.39" y="63.21" width="1.1" height="1.1" fill="#0f1c0f"/><rect x="40.14" y="63.21" width="1.1" height="1.1" fill="#0f1c0f"/><rect x="45.68" y="63.21" width="1.1" height="1.1" fill="#0f1c0f"/><rect x="53.43" y="63.21" width="1.1" height="1.1" fill="#0f1c0f"/><rect x="61.18" y="63.21" width="1.1" height="1.1" fill="#0f1c0f"/><rect x="66.71" y="63.21" width="1.1" height="1.1" fill="#0f1c0f"/><rect x="72.25" y="63.21" width="1.1" height="1.1" fill="#0f1c0f"/><rect x="80.00" y="63.21" width="1.1" height="1.1" fill="#0f1c0f"/><rect x="85.53" y="63.21" width="1.1" height="1.1" fill="#0f1c0f"/><rect x="91.07" y="63.21" width="1.1" height="1.1" fill="#0f1c0f"/><rect x="98.81" y="63.21" width="1.1" height="1.1" fill="#0f1c0f"/><rect x="104.35" y="63.21" width="1.1" height="1.1" fill="#0f1c0f"/><rect x="109.88" y="63.21" width="1.1" height="1.1" fill="#0f1c0f"/><rect x="117.63" y="63.21" width="1.1" height="1.1" fill="#0f1c0f"/><rect x="123.17" y="63.21" width="1.1" height="1.1" fill="#0f1c0f"/><rect x="128.70" y="63.21" width="1.1" height="1.1" fill="#0f1c0f"/><rect x="138.12" y="63.21" width="1.1" height="1.1" fill="#0f1c0f"/><rect x="143.66" y="63.21" width="1.1" height="1.1" fill="#0f1c0f"/><rect x="149.19" y="63.21" width="1.1" height="1.1" fill="#0f1c0f"/><rect x="156.94" y="63.21" width="1.1" height="1.1" fill="#0f1c0f"/><rect x="162.48" y="63.21" width="1.1" height="1.1" fill="#0f1c0f"/><rect x="196.80" y="63.21" width="1.1" height="1.1" fill="#0f1c0f"/><rect x="202.33" y="63.21" width="1.1" height="1.1" fill="#0f1c0f"/><rect x="207.87" y="63.21" width="1.1" height="1.1" fill="#0f1c0f"/><rect x="215.61" y="63.21" width="1.1" height="1.1" fill="#0f1c0f"/><rect x="221.15" y="63.21" width="1.1" height="1.1" fill="#0f1c0f"/><rect x="226.68" y="63.21" width="1.1" height="1.1" fill="#0f1c0f"/><rect x="234.43" y="63.21" width="1.1" height="1.1" fill="#0f1c0f"/><rect x="239.97" y="63.21" width="1.1" height="1.1" fill="#0f1c0f"/><rect x="245.50" y="63.21" width="1.1" height="1.1" fill="#0f1c0f"/><rect x="257.14" y="62.81" width="10.63" height="1.8" fill="#00cd00"/><rect x="273.74" y="63.21" width="1.1" height="1.1" fill="#0f1c0f"/><rect x="279.28" y="63.21" width="1.1" height="1.1" fill="#0f1c0f"/><rect x="287.03" y="63.21" width="1.1" height="1.1" fill="#0f1c0f"/><rect x="314.72" y="63.21" width="1.1" height="1.1" fill="#0f1c0f"/><rect x="320.26" y="63.21" width="1.1" height="1.1" fill="#0f1c0f"/><rect x="325.79" y="63.21" width="1.1" height="1.1" fill="#0f1c0f"/><rect x="333.54" y="63.21" width="1.1" height="1.1" fill="#0f1c0f"/><rect x="339.08" y="63.21" width="1.1" height="1.1" fill="#0f1c0f"/><rect x="346.83" y="63.21" width="1.1" height="1.1" fill="#0f1c0f"/><rect x="354.58" y="63.21" width="1.1" height="1.1" fill="#0f1c0f"/><rect x="360.11" y="63.21" width="1.1" height="1.1" fill="#0f1c0f"/><rect x="365.65" y="63.21" width="1.1" height="1.1" fill="#0f1c0f"/><rect x="374.42" y="63.21" width="1.1" height="1.1" fill="#0f1c0f"/><rect x="379.96" y="63.21" width="1.1" height="1.1" fill="#0f1c0f"/><rect x="385.49" y="63.21" width="1.1" height="1.1" fill="#0f1c0f"/><rect x="393.24" y="63.21" width="1.1" height="1.1" fill="#0f1c0f"/><rect x="398.78" y="63.21" width="1.1" height="1.1" fill="#0f1c0f"/><rect x="406.53" y="63.21" width="1.1" height="1.1" fill="#0f1c0f"/><rect x="414.28" y="63.21" width="1.1" height="1.1" fill="#0f1c0f"/><rect x="419.81" y="63.21" width="1.1" height="1.1" fill="#0f1c0f"/><rect x="425.35" y="63.21" width="1.1" height="1.1" fill="#0f1c0f"/><text class="rn" transform="scale(0.75 1)" x="10.13 16.00" y="73.48" fill="#e4e47c" stroke="#e4e47c">20</text><rect x="53.43" y="69.88" width="1.1" height="1.1" fill="#48481c"/><rect x="61.18" y="69.88" width="1.1" height="1.1" fill="#48481c"/><rect x="66.71" y="69.88" width="1.1" height="1.1" fill="#48481c"/><rect x="72.25" y="69.88" width="1.1" height="1.1" fill="#48481c"/><rect x="80.00" y="69.88" width="1.1" height="1.1" fill="#48481c"/><rect x="85.53" y="69.88" width="1.1" height="1.1" fill="#48481c"/><rect x="91.07" y="69.88" width="1.1" height="1.1" fill="#48481c"/><rect x="98.81" y="69.88" width="1.1" height="1.1" fill="#48481c"/><rect x="104.35" y="69.88" width="1.1" height="1.1" fill="#48481c"/><rect x="109.88" y="69.88" width="1.1" height="1.1" fill="#48481c"/><rect x="117.63" y="69.88" width="1.1" height="1.1" fill="#48481c"/><rect x="123.17" y="69.88" width="1.1" height="1.1" fill="#48481c"/><rect x="128.70" y="69.88" width="1.1" height="1.1" fill="#48481c"/><rect x="177.98" y="69.88" width="1.1" height="1.1" fill="#48481c"/><rect x="183.51" y="69.88" width="1.1" height="1.1" fill="#48481c"/><rect x="189.05" y="69.88" width="1.1" height="1.1" fill="#48481c"/><rect x="196.80" y="69.88" width="1.1" height="1.1" fill="#48481c"/><rect x="202.33" y="69.88" width="1.1" height="1.1" fill="#48481c"/><rect x="207.87" y="69.88" width="1.1" height="1.1" fill="#48481c"/><rect x="215.61" y="69.88" width="1.1" height="1.1" fill="#48481c"/><rect x="221.15" y="69.88" width="1.1" height="1.1" fill="#48481c"/><rect x="226.68" y="69.88" width="1.1" height="1.1" fill="#48481c"/><rect x="234.43" y="69.88" width="1.1" height="1.1" fill="#48481c"/><rect x="239.97" y="69.88" width="1.1" height="1.1" fill="#48481c"/><rect x="245.50" y="69.88" width="1.1" height="1.1" fill="#48481c"/><rect x="287.03" y="69.88" width="1.1" height="1.1" fill="#48481c"/><rect x="294.78" y="69.88" width="1.1" height="1.1" fill="#48481c"/><rect x="300.31" y="69.88" width="1.1" height="1.1" fill="#48481c"/><rect x="305.85" y="69.88" width="1.1" height="1.1" fill="#48481c"/><rect x="406.53" y="69.88" width="1.1" height="1.1" fill="#48481c"/><text class="rn" transform="scale(0.75 1)" x="10.13 16.00" y="80.15" fill="#00ae00" stroke="#00ae00">21</text><rect x="21.32" y="76.55" width="1.1" height="1.1" fill="#0f1c0f"/><rect x="26.86" y="76.55" width="1.1" height="1.1" fill="#0f1c0f"/><rect x="32.39" y="76.55" width="1.1" height="1.1" fill="#0f1c0f"/><rect x="40.14" y="76.55" width="1.1" height="1.1" fill="#0f1c0f"/><rect x="45.68" y="76.55" width="1.1" height="1.1" fill="#0f1c0f"/><rect x="53.43" y="76.55" width="1.1" height="1.1" fill="#0f1c0f"/><rect x="61.18" y="76.55" width="1.1" height="1.1" fill="#0f1c0f"/><rect x="66.71" y="76.55" width="1.1" height="1.1" fill="#0f1c0f"/><rect x="72.25" y="76.55" width="1.1" height="1.1" fill="#0f1c0f"/><rect x="80.00" y="76.55" width="1.1" height="1.1" fill="#0f1c0f"/><rect x="85.53" y="76.55" width="1.1" height="1.1" fill="#0f1c0f"/><rect x="91.07" y="76.55" width="1.1" height="1.1" fill="#0f1c0f"/><rect x="98.81" y="76.55" width="1.1" height="1.1" fill="#0f1c0f"/><rect x="104.35" y="76.55" width="1.1" height="1.1" fill="#0f1c0f"/><rect x="109.88" y="76.55" width="1.1" height="1.1" fill="#0f1c0f"/><rect x="117.63" y="76.55" width="1.1" height="1.1" fill="#0f1c0f"/><rect x="123.17" y="76.55" width="1.1" height="1.1" fill="#0f1c0f"/><rect x="128.70" y="76.55" width="1.1" height="1.1" fill="#0f1c0f"/><rect x="138.12" y="76.55" width="1.1" height="1.1" fill="#0f1c0f"/><rect x="143.66" y="76.55" width="1.1" height="1.1" fill="#0f1c0f"/><rect x="149.19" y="76.55" width="1.1" height="1.1" fill="#0f1c0f"/><rect x="156.94" y="76.55" width="1.1" height="1.1" fill="#0f1c0f"/><rect x="162.48" y="76.55" width="1.1" height="1.1" fill="#0f1c0f"/><rect x="196.80" y="76.55" width="1.1" height="1.1" fill="#0f1c0f"/><rect x="202.33" y="76.55" width="1.1" height="1.1" fill="#0f1c0f"/><rect x="207.87" y="76.55" width="1.1" height="1.1" fill="#0f1c0f"/><rect x="215.61" y="76.55" width="1.1" height="1.1" fill="#0f1c0f"/><rect x="221.15" y="76.55" width="1.1" height="1.1" fill="#0f1c0f"/><rect x="226.68" y="76.55" width="1.1" height="1.1" fill="#0f1c0f"/><rect x="234.43" y="76.55" width="1.1" height="1.1" fill="#0f1c0f"/><rect x="239.97" y="76.55" width="1.1" height="1.1" fill="#0f1c0f"/><rect x="245.50" y="76.55" width="1.1" height="1.1" fill="#0f1c0f"/><rect x="257.14" y="76.15" width="10.63" height="1.8" fill="#00cd00"/><rect x="273.74" y="76.55" width="1.1" height="1.1" fill="#0f1c0f"/><rect x="279.28" y="76.55" width="1.1" height="1.1" fill="#0f1c0f"/><rect x="287.03" y="76.55" width="1.1" height="1.1" fill="#0f1c0f"/><rect x="314.72" y="76.55" width="1.1" height="1.1" fill="#0f1c0f"/><rect x="320.26" y="76.55" width="1.1" height="1.1" fill="#0f1c0f"/><rect x="325.79" y="76.55" width="1.1" height="1.1" fill="#0f1c0f"/><rect x="333.54" y="76.55" width="1.1" height="1.1" fill="#0f1c0f"/><rect x="339.08" y="76.55" width="1.1" height="1.1" fill="#0f1c0f"/><rect x="346.83" y="76.55" width="1.1" height="1.1" fill="#0f1c0f"/><rect x="354.58" y="76.55" width="1.1" height="1.1" fill="#0f1c0f"/><rect x="360.11" y="76.55" width="1.1" height="1.1" fill="#0f1c0f"/><rect x="365.65" y="76.55" width="1.1" height="1.1" fill="#0f1c0f"/><rect x="374.42" y="76.55" width="1.1" height="1.1" fill="#0f1c0f"/><rect x="379.96" y="76.55" width="1.1" height="1.1" fill="#0f1c0f"/><rect x="385.49" y="76.55" width="1.1" height="1.1" fill="#0f1c0f"/><rect x="393.24" y="76.55" width="1.1" height="1.1" fill="#0f1c0f"/><rect x="398.78" y="76.55" width="1.1" height="1.1" fill="#0f1c0f"/><rect x="406.53" y="76.55" width="1.1" height="1.1" fill="#0f1c0f"/><rect x="414.28" y="76.55" width="1.1" height="1.1" fill="#0f1c0f"/><rect x="419.81" y="76.55" width="1.1" height="1.1" fill="#0f1c0f"/><rect x="425.35" y="76.55" width="1.1" height="1.1" fill="#0f1c0f"/><text class="rn" transform="scale(0.75 1)" x="10.13 16.00" y="86.83" fill="#00ae00" stroke="#00ae00">22</text><rect x="53.43" y="83.23" width="1.1" height="1.1" fill="#0f1c0f"/><rect x="61.18" y="83.23" width="1.1" height="1.1" fill="#0f1c0f"/><rect x="66.71" y="83.23" width="1.1" height="1.1" fill="#0f1c0f"/><rect x="72.25" y="83.23" width="1.1" height="1.1" fill="#0f1c0f"/><rect x="80.00" y="83.23" width="1.1" height="1.1" fill="#0f1c0f"/><rect x="85.53" y="83.23" width="1.1" height="1.1" fill="#0f1c0f"/><rect x="91.07" y="83.23" width="1.1" height="1.1" fill="#0f1c0f"/><rect x="98.81" y="83.23" width="1.1" height="1.1" fill="#0f1c0f"/><rect x="104.35" y="83.23" width="1.1" height="1.1" fill="#0f1c0f"/><rect x="109.88" y="83.23" width="1.1" height="1.1" fill="#0f1c0f"/><rect x="117.63" y="83.23" width="1.1" height="1.1" fill="#0f1c0f"/><rect x="123.17" y="83.23" width="1.1" height="1.1" fill="#0f1c0f"/><rect x="128.70" y="83.23" width="1.1" height="1.1" fill="#0f1c0f"/><rect x="177.98" y="83.23" width="1.1" height="1.1" fill="#0f1c0f"/><rect x="183.51" y="83.23" width="1.1" height="1.1" fill="#0f1c0f"/><rect x="189.05" y="83.23" width="1.1" height="1.1" fill="#0f1c0f"/><rect x="196.80" y="83.23" width="1.1" height="1.1" fill="#0f1c0f"/><rect x="202.33" y="83.23" width="1.1" height="1.1" fill="#0f1c0f"/><rect x="207.87" y="83.23" width="1.1" height="1.1" fill="#0f1c0f"/><rect x="215.61" y="83.23" width="1.1" height="1.1" fill="#0f1c0f"/><rect x="221.15" y="83.23" width="1.1" height="1.1" fill="#0f1c0f"/><rect x="226.68" y="83.23" width="1.1" height="1.1" fill="#0f1c0f"/><rect x="234.43" y="83.23" width="1.1" height="1.1" fill="#0f1c0f"/><rect x="239.97" y="83.23" width="1.1" height="1.1" fill="#0f1c0f"/><rect x="245.50" y="83.23" width="1.1" height="1.1" fill="#0f1c0f"/><rect x="287.03" y="83.23" width="1.1" height="1.1" fill="#0f1c0f"/><rect x="294.78" y="83.23" width="1.1" height="1.1" fill="#0f1c0f"/><rect x="300.31" y="83.23" width="1.1" height="1.1" fill="#0f1c0f"/><rect x="305.85" y="83.23" width="1.1" height="1.1" fill="#0f1c0f"/><rect x="314.72" y="83.23" width="1.1" height="1.1" fill="#0f1c0f"/><rect x="320.26" y="83.23" width="1.1" height="1.1" fill="#0f1c0f"/><rect x="325.79" y="83.23" width="1.1" height="1.1" fill="#0f1c0f"/><rect x="333.54" y="83.23" width="1.1" height="1.1" fill="#0f1c0f"/><rect x="339.08" y="83.23" width="1.1" height="1.1" fill="#0f1c0f"/><rect x="346.83" y="83.23" width="1.1" height="1.1" fill="#0f1c0f"/><rect x="354.58" y="83.23" width="1.1" height="1.1" fill="#0f1c0f"/><rect x="360.11" y="83.23" width="1.1" height="1.1" fill="#0f1c0f"/><rect x="365.65" y="83.23" width="1.1" height="1.1" fill="#0f1c0f"/><rect x="374.42" y="83.23" width="1.1" height="1.1" fill="#0f1c0f"/><rect x="379.96" y="83.23" width="1.1" height="1.1" fill="#0f1c0f"/><rect x="385.49" y="83.23" width="1.1" height="1.1" fill="#0f1c0f"/><rect x="393.24" y="83.23" width="1.1" height="1.1" fill="#0f1c0f"/><rect x="398.78" y="83.23" width="1.1" height="1.1" fill="#0f1c0f"/><rect x="406.53" y="83.23" width="1.1" height="1.1" fill="#0f1c0f"/><rect x="414.28" y="83.23" width="1.1" height="1.1" fill="#0f1c0f"/><rect x="419.81" y="83.23" width="1.1" height="1.1" fill="#0f1c0f"/><rect x="425.35" y="83.23" width="1.1" height="1.1" fill="#0f1c0f"/><text class="rn" transform="scale(0.75 1)" x="10.13 16.00" y="93.50" fill="#00ae00" stroke="#00ae00">23</text><rect x="21.32" y="89.90" width="1.1" height="1.1" fill="#0f1c0f"/><rect x="26.86" y="89.90" width="1.1" height="1.1" fill="#0f1c0f"/><rect x="32.39" y="89.90" width="1.1" height="1.1" fill="#0f1c0f"/><rect x="40.14" y="89.90" width="1.1" height="1.1" fill="#0f1c0f"/><rect x="45.68" y="89.90" width="1.1" height="1.1" fill="#0f1c0f"/><rect x="53.43" y="89.90" width="1.1" height="1.1" fill="#0f1c0f"/><rect x="61.18" y="89.90" width="1.1" height="1.1" fill="#0f1c0f"/><rect x="66.71" y="89.90" width="1.1" height="1.1" fill="#0f1c0f"/><rect x="72.25" y="89.90" width="1.1" height="1.1" fill="#0f1c0f"/><rect x="80.00" y="89.90" width="1.1" height="1.1" fill="#0f1c0f"/><rect x="85.53" y="89.90" width="1.1" height="1.1" fill="#0f1c0f"/><rect x="91.07" y="89.90" width="1.1" height="1.1" fill="#0f1c0f"/><rect x="98.81" y="89.90" width="1.1" height="1.1" fill="#0f1c0f"/><rect x="104.35" y="89.90" width="1.1" height="1.1" fill="#0f1c0f"/><rect x="109.88" y="89.90" width="1.1" height="1.1" fill="#0f1c0f"/><rect x="117.63" y="89.90" width="1.1" height="1.1" fill="#0f1c0f"/><rect x="123.17" y="89.90" width="1.1" height="1.1" fill="#0f1c0f"/><rect x="128.70" y="89.90" width="1.1" height="1.1" fill="#0f1c0f"/><rect x="138.12" y="89.90" width="1.1" height="1.1" fill="#0f1c0f"/><rect x="143.66" y="89.90" width="1.1" height="1.1" fill="#0f1c0f"/><rect x="149.19" y="89.90" width="1.1" height="1.1" fill="#0f1c0f"/><rect x="156.94" y="89.90" width="1.1" height="1.1" fill="#0f1c0f"/><rect x="162.48" y="89.90" width="1.1" height="1.1" fill="#0f1c0f"/><rect x="196.80" y="89.90" width="1.1" height="1.1" fill="#0f1c0f"/><rect x="202.33" y="89.90" width="1.1" height="1.1" fill="#0f1c0f"/><rect x="207.87" y="89.90" width="1.1" height="1.1" fill="#0f1c0f"/><rect x="215.61" y="89.90" width="1.1" height="1.1" fill="#0f1c0f"/><rect x="221.15" y="89.90" width="1.1" height="1.1" fill="#0f1c0f"/><rect x="226.68" y="89.90" width="1.1" height="1.1" fill="#0f1c0f"/><rect x="234.43" y="89.90" width="1.1" height="1.1" fill="#0f1c0f"/><rect x="239.97" y="89.90" width="1.1" height="1.1" fill="#0f1c0f"/><rect x="245.50" y="89.90" width="1.1" height="1.1" fill="#0f1c0f"/><rect x="254.92" y="89.90" width="1.1" height="1.1" fill="#0f1c0f"/><rect x="260.46" y="89.90" width="1.1" height="1.1" fill="#0f1c0f"/><rect x="265.99" y="89.90" width="1.1" height="1.1" fill="#0f1c0f"/><rect x="273.74" y="89.90" width="1.1" height="1.1" fill="#0f1c0f"/><rect x="279.28" y="89.90" width="1.1" height="1.1" fill="#0f1c0f"/><rect x="287.03" y="89.90" width="1.1" height="1.1" fill="#0f1c0f"/><rect x="314.72" y="89.90" width="1.1" height="1.1" fill="#0f1c0f"/><rect x="320.26" y="89.90" width="1.1" height="1.1" fill="#0f1c0f"/><rect x="325.79" y="89.90" width="1.1" height="1.1" fill="#0f1c0f"/><rect x="333.54" y="89.90" width="1.1" height="1.1" fill="#0f1c0f"/><rect x="339.08" y="89.90" width="1.1" height="1.1" fill="#0f1c0f"/><rect x="346.83" y="89.90" width="1.1" height="1.1" fill="#0f1c0f"/><rect x="354.58" y="89.90" width="1.1" height="1.1" fill="#0f1c0f"/><rect x="360.11" y="89.90" width="1.1" height="1.1" fill="#0f1c0f"/><rect x="365.65" y="89.90" width="1.1" height="1.1" fill="#0f1c0f"/><rect x="374.42" y="89.90" width="1.1" height="1.1" fill="#0f1c0f"/><rect x="379.96" y="89.90" width="1.1" height="1.1" fill="#0f1c0f"/><rect x="385.49" y="89.90" width="1.1" height="1.1" fill="#0f1c0f"/><rect x="393.24" y="89.90" width="1.1" height="1.1" fill="#0f1c0f"/><rect x="398.78" y="89.90" width="1.1" height="1.1" fill="#0f1c0f"/><rect x="406.53" y="89.90" width="1.1" height="1.1" fill="#0f1c0f"/><rect x="414.28" y="89.90" width="1.1" height="1.1" fill="#0f1c0f"/><rect x="419.81" y="89.90" width="1.1" height="1.1" fill="#0f1c0f"/><rect x="425.35" y="89.90" width="1.1" height="1.1" fill="#0f1c0f"/><text class="rn" transform="scale(0.75 1)" x="10.13 16.00" y="100.17" fill="#c3c300" stroke="#c3c300">24</text><rect x="80.00" y="96.57" width="1.1" height="1.1" fill="#323214"/><rect x="85.53" y="96.57" width="1.1" height="1.1" fill="#323214"/><rect x="91.07" y="96.57" width="1.1" height="1.1" fill="#323214"/><rect x="98.81" y="96.57" width="1.1" height="1.1" fill="#323214"/><rect x="104.35" y="96.57" width="1.1" height="1.1" fill="#323214"/><rect x="109.88" y="96.57" width="1.1" height="1.1" fill="#323214"/><rect x="117.63" y="96.57" width="1.1" height="1.1" fill="#323214"/><rect x="123.17" y="96.57" width="1.1" height="1.1" fill="#323214"/><rect x="128.70" y="96.57" width="1.1" height="1.1" fill="#323214"/><rect x="177.98" y="96.57" width="1.1" height="1.1" fill="#323214"/><rect x="183.51" y="96.57" width="1.1" height="1.1" fill="#323214"/><rect x="189.05" y="96.57" width="1.1" height="1.1" fill="#323214"/><rect x="196.80" y="96.57" width="1.1" height="1.1" fill="#323214"/><rect x="202.33" y="96.57" width="1.1" height="1.1" fill="#323214"/><rect x="207.87" y="96.57" width="1.1" height="1.1" fill="#323214"/><rect x="215.61" y="96.57" width="1.1" height="1.1" fill="#323214"/><rect x="221.15" y="96.57" width="1.1" height="1.1" fill="#323214"/><rect x="226.68" y="96.57" width="1.1" height="1.1" fill="#323214"/><rect x="234.43" y="96.57" width="1.1" height="1.1" fill="#323214"/><rect x="239.97" y="96.57" width="1.1" height="1.1" fill="#323214"/><rect x="245.50" y="96.57" width="1.1" height="1.1" fill="#323214"/><rect x="287.03" y="96.57" width="1.1" height="1.1" fill="#323214"/><rect x="294.78" y="96.57" width="1.1" height="1.1" fill="#323214"/><rect x="300.31" y="96.57" width="1.1" height="1.1" fill="#323214"/><rect x="305.85" y="96.57" width="1.1" height="1.1" fill="#323214"/><rect x="314.72" y="96.57" width="1.1" height="1.1" fill="#323214"/><rect x="320.26" y="96.57" width="1.1" height="1.1" fill="#323214"/><rect x="325.79" y="96.57" width="1.1" height="1.1" fill="#323214"/><rect x="333.54" y="96.57" width="1.1" height="1.1" fill="#323214"/><rect x="339.08" y="96.57" width="1.1" height="1.1" fill="#323214"/><rect x="346.83" y="96.57" width="1.1" height="1.1" fill="#323214"/><rect x="354.58" y="96.57" width="1.1" height="1.1" fill="#323214"/><rect x="360.11" y="96.57" width="1.1" height="1.1" fill="#323214"/><rect x="365.65" y="96.57" width="1.1" height="1.1" fill="#323214"/><rect x="374.42" y="96.57" width="1.1" height="1.1" fill="#323214"/><rect x="379.96" y="96.57" width="1.1" height="1.1" fill="#323214"/><rect x="385.49" y="96.57" width="1.1" height="1.1" fill="#323214"/><rect x="393.24" y="96.57" width="1.1" height="1.1" fill="#323214"/><rect x="398.78" y="96.57" width="1.1" height="1.1" fill="#323214"/><rect x="406.53" y="96.57" width="1.1" height="1.1" fill="#323214"/><rect x="414.28" y="96.57" width="1.1" height="1.1" fill="#323214"/><rect x="419.81" y="96.57" width="1.1" height="1.1" fill="#323214"/><rect x="425.35" y="96.57" width="1.1" height="1.1" fill="#323214"/><text class="rn" transform="scale(0.75 1)" x="10.13 16.00" y="106.84" fill="#00ae00" stroke="#00ae00">25</text><rect x="21.32" y="103.24" width="1.1" height="1.1" fill="#0f1c0f"/><rect x="26.86" y="103.24" width="1.1" height="1.1" fill="#0f1c0f"/><rect x="32.39" y="103.24" width="1.1" height="1.1" fill="#0f1c0f"/><rect x="40.14" y="103.24" width="1.1" height="1.1" fill="#0f1c0f"/><rect x="45.68" y="103.24" width="1.1" height="1.1" fill="#0f1c0f"/><rect x="53.43" y="103.24" width="1.1" height="1.1" fill="#0f1c0f"/><rect x="61.18" y="103.24" width="1.1" height="1.1" fill="#0f1c0f"/><rect x="66.71" y="103.24" width="1.1" height="1.1" fill="#0f1c0f"/><rect x="72.25" y="103.24" width="1.1" height="1.1" fill="#0f1c0f"/><rect x="80.00" y="103.24" width="1.1" height="1.1" fill="#0f1c0f"/><rect x="85.53" y="103.24" width="1.1" height="1.1" fill="#0f1c0f"/><rect x="91.07" y="103.24" width="1.1" height="1.1" fill="#0f1c0f"/><rect x="98.81" y="103.24" width="1.1" height="1.1" fill="#0f1c0f"/><rect x="104.35" y="103.24" width="1.1" height="1.1" fill="#0f1c0f"/><rect x="109.88" y="103.24" width="1.1" height="1.1" fill="#0f1c0f"/><rect x="117.63" y="103.24" width="1.1" height="1.1" fill="#0f1c0f"/><rect x="123.17" y="103.24" width="1.1" height="1.1" fill="#0f1c0f"/><rect x="128.70" y="103.24" width="1.1" height="1.1" fill="#0f1c0f"/><rect x="138.12" y="103.24" width="1.1" height="1.1" fill="#0f1c0f"/><rect x="143.66" y="103.24" width="1.1" height="1.1" fill="#0f1c0f"/><rect x="149.19" y="103.24" width="1.1" height="1.1" fill="#0f1c0f"/><rect x="156.94" y="103.24" width="1.1" height="1.1" fill="#0f1c0f"/><rect x="162.48" y="103.24" width="1.1" height="1.1" fill="#0f1c0f"/><rect x="196.80" y="103.24" width="1.1" height="1.1" fill="#0f1c0f"/><rect x="202.33" y="103.24" width="1.1" height="1.1" fill="#0f1c0f"/><rect x="207.87" y="103.24" width="1.1" height="1.1" fill="#0f1c0f"/><rect x="215.61" y="103.24" width="1.1" height="1.1" fill="#0f1c0f"/><rect x="221.15" y="103.24" width="1.1" height="1.1" fill="#0f1c0f"/><rect x="226.68" y="103.24" width="1.1" height="1.1" fill="#0f1c0f"/><rect x="234.43" y="103.24" width="1.1" height="1.1" fill="#0f1c0f"/><rect x="239.97" y="103.24" width="1.1" height="1.1" fill="#0f1c0f"/><rect x="245.50" y="103.24" width="1.1" height="1.1" fill="#0f1c0f"/><rect x="257.14" y="102.84" width="10.63" height="1.8" fill="#00cd00"/><rect x="273.74" y="103.24" width="1.1" height="1.1" fill="#0f1c0f"/><rect x="279.28" y="103.24" width="1.1" height="1.1" fill="#0f1c0f"/><rect x="287.03" y="103.24" width="1.1" height="1.1" fill="#0f1c0f"/><rect x="314.72" y="103.24" width="1.1" height="1.1" fill="#0f1c0f"/><rect x="320.26" y="103.24" width="1.1" height="1.1" fill="#0f1c0f"/><rect x="325.79" y="103.24" width="1.1" height="1.1" fill="#0f1c0f"/><rect x="333.54" y="103.24" width="1.1" height="1.1" fill="#0f1c0f"/><rect x="339.08" y="103.24" width="1.1" height="1.1" fill="#0f1c0f"/><rect x="346.83" y="103.24" width="1.1" height="1.1" fill="#0f1c0f"/><rect x="354.58" y="103.24" width="1.1" height="1.1" fill="#0f1c0f"/><rect x="360.11" y="103.24" width="1.1" height="1.1" fill="#0f1c0f"/><rect x="365.65" y="103.24" width="1.1" height="1.1" fill="#0f1c0f"/><rect x="374.42" y="103.24" width="1.1" height="1.1" fill="#0f1c0f"/><rect x="379.96" y="103.24" width="1.1" height="1.1" fill="#0f1c0f"/><rect x="385.49" y="103.24" width="1.1" height="1.1" fill="#0f1c0f"/><rect x="393.24" y="103.24" width="1.1" height="1.1" fill="#0f1c0f"/><rect x="398.78" y="103.24" width="1.1" height="1.1" fill="#0f1c0f"/><rect x="406.53" y="103.24" width="1.1" height="1.1" fill="#0f1c0f"/><rect x="414.28" y="103.24" width="1.1" height="1.1" fill="#0f1c0f"/><rect x="419.81" y="103.24" width="1.1" height="1.1" fill="#0f1c0f"/><rect x="425.35" y="103.24" width="1.1" height="1.1" fill="#0f1c0f"/><text class="rn" transform="scale(0.75 1)" x="10.13 16.00" y="113.52" fill="#00ae00" stroke="#00ae00">26</text><rect x="61.18" y="109.92" width="1.1" height="1.1" fill="#0f1c0f"/><rect x="66.71" y="109.92" width="1.1" height="1.1" fill="#0f1c0f"/><rect x="72.25" y="109.92" width="1.1" height="1.1" fill="#0f1c0f"/><rect x="80.00" y="109.92" width="1.1" height="1.1" fill="#0f1c0f"/><rect x="85.53" y="109.92" width="1.1" height="1.1" fill="#0f1c0f"/><rect x="91.07" y="109.92" width="1.1" height="1.1" fill="#0f1c0f"/><rect x="98.81" y="109.92" width="1.1" height="1.1" fill="#0f1c0f"/><rect x="104.35" y="109.92" width="1.1" height="1.1" fill="#0f1c0f"/><rect x="109.88" y="109.92" width="1.1" height="1.1" fill="#0f1c0f"/><rect x="117.63" y="109.92" width="1.1" height="1.1" fill="#0f1c0f"/><rect x="123.17" y="109.92" width="1.1" height="1.1" fill="#0f1c0f"/><rect x="128.70" y="109.92" width="1.1" height="1.1" fill="#0f1c0f"/><rect x="138.12" y="109.92" width="1.1" height="1.1" fill="#0f1c0f"/><rect x="143.66" y="109.92" width="1.1" height="1.1" fill="#0f1c0f"/><rect x="149.19" y="109.92" width="1.1" height="1.1" fill="#0f1c0f"/><rect x="156.94" y="109.92" width="1.1" height="1.1" fill="#0f1c0f"/><rect x="162.48" y="109.92" width="1.1" height="1.1" fill="#0f1c0f"/><rect x="170.23" y="109.92" width="1.1" height="1.1" fill="#0f1c0f"/><rect x="177.98" y="109.92" width="1.1" height="1.1" fill="#0f1c0f"/><rect x="183.51" y="109.92" width="1.1" height="1.1" fill="#0f1c0f"/><rect x="189.05" y="109.92" width="1.1" height="1.1" fill="#0f1c0f"/><rect x="196.80" y="109.92" width="1.1" height="1.1" fill="#0f1c0f"/><rect x="202.33" y="109.92" width="1.1" height="1.1" fill="#0f1c0f"/><rect x="207.87" y="109.92" width="1.1" height="1.1" fill="#0f1c0f"/><rect x="215.61" y="109.92" width="1.1" height="1.1" fill="#0f1c0f"/><rect x="221.15" y="109.92" width="1.1" height="1.1" fill="#0f1c0f"/><rect x="226.68" y="109.92" width="1.1" height="1.1" fill="#0f1c0f"/><rect x="234.43" y="109.92" width="1.1" height="1.1" fill="#0f1c0f"/><rect x="239.97" y="109.92" width="1.1" height="1.1" fill="#0f1c0f"/><rect x="245.50" y="109.92" width="1.1" height="1.1" fill="#0f1c0f"/><rect x="254.92" y="109.92" width="1.1" height="1.1" fill="#0f1c0f"/><rect x="260.46" y="109.92" width="1.1" height="1.1" fill="#0f1c0f"/><rect x="265.99" y="109.92" width="1.1" height="1.1" fill="#0f1c0f"/><rect x="273.74" y="109.92" width="1.1" height="1.1" fill="#0f1c0f"/><rect x="279.28" y="109.92" width="1.1" height="1.1" fill="#0f1c0f"/><rect x="287.03" y="109.92" width="1.1" height="1.1" fill="#0f1c0f"/><rect x="294.78" y="109.92" width="1.1" height="1.1" fill="#0f1c0f"/><rect x="300.31" y="109.92" width="1.1" height="1.1" fill="#0f1c0f"/><rect x="305.85" y="109.92" width="1.1" height="1.1" fill="#0f1c0f"/><rect x="354.58" y="109.92" width="1.1" height="1.1" fill="#0f1c0f"/><rect x="360.11" y="109.92" width="1.1" height="1.1" fill="#0f1c0f"/><rect x="365.65" y="109.92" width="1.1" height="1.1" fill="#0f1c0f"/><rect x="374.42" y="109.92" width="1.1" height="1.1" fill="#0f1c0f"/><rect x="379.96" y="109.92" width="1.1" height="1.1" fill="#0f1c0f"/><rect x="385.49" y="109.92" width="1.1" height="1.1" fill="#0f1c0f"/><rect x="393.24" y="109.92" width="1.1" height="1.1" fill="#0f1c0f"/><rect x="398.78" y="109.92" width="1.1" height="1.1" fill="#0f1c0f"/><rect x="406.53" y="109.92" width="1.1" height="1.1" fill="#0f1c0f"/><rect x="414.28" y="109.92" width="1.1" height="1.1" fill="#0f1c0f"/><rect x="419.81" y="109.92" width="1.1" height="1.1" fill="#0f1c0f"/><rect x="425.35" y="109.92" width="1.1" height="1.1" fill="#0f1c0f"/><text class="rn" transform="scale(0.75 1)" x="10.13 16.00" y="120.19" fill="#00ae00" stroke="#00ae00">27</text><rect x="21.32" y="116.59" width="1.1" height="1.1" fill="#0f1c0f"/><rect x="26.86" y="116.59" width="1.1" height="1.1" fill="#0f1c0f"/><rect x="32.39" y="116.59" width="1.1" height="1.1" fill="#0f1c0f"/><rect x="40.14" y="116.59" width="1.1" height="1.1" fill="#0f1c0f"/><rect x="45.68" y="116.59" width="1.1" height="1.1" fill="#0f1c0f"/><rect x="53.43" y="116.59" width="1.1" height="1.1" fill="#0f1c0f"/><rect x="61.18" y="116.59" width="1.1" height="1.1" fill="#0f1c0f"/><rect x="66.71" y="116.59" width="1.1" height="1.1" fill="#0f1c0f"/><rect x="72.25" y="116.59" width="1.1" height="1.1" fill="#0f1c0f"/><rect x="80.00" y="116.59" width="1.1" height="1.1" fill="#0f1c0f"/><rect x="85.53" y="116.59" width="1.1" height="1.1" fill="#0f1c0f"/><rect x="91.07" y="116.59" width="1.1" height="1.1" fill="#0f1c0f"/><rect x="98.81" y="116.59" width="1.1" height="1.1" fill="#0f1c0f"/><rect x="104.35" y="116.59" width="1.1" height="1.1" fill="#0f1c0f"/><rect x="109.88" y="116.59" width="1.1" height="1.1" fill="#0f1c0f"/><rect x="117.63" y="116.59" width="1.1" height="1.1" fill="#0f1c0f"/><rect x="123.17" y="116.59" width="1.1" height="1.1" fill="#0f1c0f"/><rect x="128.70" y="116.59" width="1.1" height="1.1" fill="#0f1c0f"/><rect x="138.12" y="116.59" width="1.1" height="1.1" fill="#0f1c0f"/><rect x="143.66" y="116.59" width="1.1" height="1.1" fill="#0f1c0f"/><rect x="149.19" y="116.59" width="1.1" height="1.1" fill="#0f1c0f"/><rect x="156.94" y="116.59" width="1.1" height="1.1" fill="#0f1c0f"/><rect x="162.48" y="116.59" width="1.1" height="1.1" fill="#0f1c0f"/><rect x="170.23" y="116.59" width="1.1" height="1.1" fill="#0f1c0f"/><rect x="177.98" y="116.59" width="1.1" height="1.1" fill="#0f1c0f"/><rect x="183.51" y="116.59" width="1.1" height="1.1" fill="#0f1c0f"/><rect x="189.05" y="116.59" width="1.1" height="1.1" fill="#0f1c0f"/><rect x="196.80" y="116.59" width="1.1" height="1.1" fill="#0f1c0f"/><rect x="202.33" y="116.59" width="1.1" height="1.1" fill="#0f1c0f"/><rect x="207.87" y="116.59" width="1.1" height="1.1" fill="#0f1c0f"/><rect x="215.61" y="116.59" width="1.1" height="1.1" fill="#0f1c0f"/><rect x="221.15" y="116.59" width="1.1" height="1.1" fill="#0f1c0f"/><rect x="226.68" y="116.59" width="1.1" height="1.1" fill="#0f1c0f"/><rect x="234.43" y="116.59" width="1.1" height="1.1" fill="#0f1c0f"/><rect x="239.97" y="116.59" width="1.1" height="1.1" fill="#0f1c0f"/><rect x="245.50" y="116.59" width="1.1" height="1.1" fill="#0f1c0f"/><rect x="254.92" y="116.59" width="1.1" height="1.1" fill="#0f1c0f"/><rect x="260.46" y="116.59" width="1.1" height="1.1" fill="#0f1c0f"/><rect x="265.99" y="116.59" width="1.1" height="1.1" fill="#0f1c0f"/><rect x="273.74" y="116.59" width="1.1" height="1.1" fill="#0f1c0f"/><rect x="279.28" y="116.59" width="1.1" height="1.1" fill="#0f1c0f"/><rect x="287.03" y="116.59" width="1.1" height="1.1" fill="#0f1c0f"/><rect x="294.78" y="116.59" width="1.1" height="1.1" fill="#0f1c0f"/><rect x="300.31" y="116.59" width="1.1" height="1.1" fill="#0f1c0f"/><rect x="305.85" y="116.59" width="1.1" height="1.1" fill="#0f1c0f"/><rect x="314.72" y="116.59" width="1.1" height="1.1" fill="#0f1c0f"/><rect x="320.26" y="116.59" width="1.1" height="1.1" fill="#0f1c0f"/><rect x="325.79" y="116.59" width="1.1" height="1.1" fill="#0f1c0f"/><rect x="333.54" y="116.59" width="1.1" height="1.1" fill="#0f1c0f"/><rect x="339.08" y="116.59" width="1.1" height="1.1" fill="#0f1c0f"/><rect x="346.83" y="116.59" width="1.1" height="1.1" fill="#0f1c0f"/><rect x="354.58" y="116.59" width="1.1" height="1.1" fill="#0f1c0f"/><rect x="360.11" y="116.59" width="1.1" height="1.1" fill="#0f1c0f"/><rect x="365.65" y="116.59" width="1.1" height="1.1" fill="#0f1c0f"/><rect x="374.42" y="116.59" width="1.1" height="1.1" fill="#0f1c0f"/><rect x="379.96" y="116.59" width="1.1" height="1.1" fill="#0f1c0f"/><rect x="385.49" y="116.59" width="1.1" height="1.1" fill="#0f1c0f"/><rect x="393.24" y="116.59" width="1.1" height="1.1" fill="#0f1c0f"/><rect x="398.78" y="116.59" width="1.1" height="1.1" fill="#0f1c0f"/><rect x="406.53" y="116.59" width="1.1" height="1.1" fill="#0f1c0f"/><rect x="414.28" y="116.59" width="1.1" height="1.1" fill="#0f1c0f"/><rect x="419.81" y="116.59" width="1.1" height="1.1" fill="#0f1c0f"/><rect x="425.35" y="116.59" width="1.1" height="1.1" fill="#0f1c0f"/><text class="rn" transform="scale(0.75 1)" x="10.13 16.00" y="126.86" fill="#c3c300" stroke="#c3c300">28</text><rect x="21.32" y="123.26" width="1.1" height="1.1" fill="#323214"/><rect x="26.86" y="123.26" width="1.1" height="1.1" fill="#323214"/><rect x="32.39" y="123.26" width="1.1" height="1.1" fill="#323214"/><rect x="40.14" y="123.26" width="1.1" height="1.1" fill="#323214"/><rect x="45.68" y="123.26" width="1.1" height="1.1" fill="#323214"/><rect x="61.18" y="123.26" width="1.1" height="1.1" fill="#323214"/><rect x="66.71" y="123.26" width="1.1" height="1.1" fill="#323214"/><rect x="72.25" y="123.26" width="1.1" height="1.1" fill="#323214"/><rect x="80.00" y="123.26" width="1.1" height="1.1" fill="#323214"/><rect x="85.53" y="123.26" width="1.1" height="1.1" fill="#323214"/><rect x="91.07" y="123.26" width="1.1" height="1.1" fill="#323214"/><rect x="98.81" y="123.26" width="1.1" height="1.1" fill="#323214"/><rect x="104.35" y="123.26" width="1.1" height="1.1" fill="#323214"/><rect x="109.88" y="123.26" width="1.1" height="1.1" fill="#323214"/><rect x="117.63" y="123.26" width="1.1" height="1.1" fill="#323214"/><rect x="123.17" y="123.26" width="1.1" height="1.1" fill="#323214"/><rect x="128.70" y="123.26" width="1.1" height="1.1" fill="#323214"/><rect x="196.80" y="123.26" width="1.1" height="1.1" fill="#323214"/><rect x="202.33" y="123.26" width="1.1" height="1.1" fill="#323214"/><rect x="207.87" y="123.26" width="1.1" height="1.1" fill="#323214"/><rect x="215.61" y="123.26" width="1.1" height="1.1" fill="#323214"/><rect x="221.15" y="123.26" width="1.1" height="1.1" fill="#323214"/><rect x="226.68" y="123.26" width="1.1" height="1.1" fill="#323214"/><rect x="234.43" y="123.26" width="1.1" height="1.1" fill="#323214"/><rect x="239.97" y="123.26" width="1.1" height="1.1" fill="#323214"/><rect x="245.50" y="123.26" width="1.1" height="1.1" fill="#323214"/><rect x="287.03" y="123.26" width="1.1" height="1.1" fill="#323214"/><rect x="294.78" y="123.26" width="1.1" height="1.1" fill="#323214"/><rect x="300.31" y="123.26" width="1.1" height="1.1" fill="#323214"/><rect x="305.85" y="123.26" width="1.1" height="1.1" fill="#323214"/><rect x="406.53" y="123.26" width="1.1" height="1.1" fill="#323214"/><text class="rn" transform="scale(0.75 1)" x="10.13 16.00" y="133.54" fill="#00ae00" stroke="#00ae00">29</text><rect x="21.32" y="129.94" width="1.1" height="1.1" fill="#0f1c0f"/><rect x="26.86" y="129.94" width="1.1" height="1.1" fill="#0f1c0f"/><rect x="32.39" y="129.94" width="1.1" height="1.1" fill="#0f1c0f"/><rect x="40.14" y="129.94" width="1.1" height="1.1" fill="#0f1c0f"/><rect x="45.68" y="129.94" width="1.1" height="1.1" fill="#0f1c0f"/><rect x="53.43" y="129.94" width="1.1" height="1.1" fill="#0f1c0f"/><rect x="61.18" y="129.94" width="1.1" height="1.1" fill="#0f1c0f"/><rect x="66.71" y="129.94" width="1.1" height="1.1" fill="#0f1c0f"/><rect x="72.25" y="129.94" width="1.1" height="1.1" fill="#0f1c0f"/><rect x="80.00" y="129.94" width="1.1" height="1.1" fill="#0f1c0f"/><rect x="85.53" y="129.94" width="1.1" height="1.1" fill="#0f1c0f"/><rect x="91.07" y="129.94" width="1.1" height="1.1" fill="#0f1c0f"/><rect x="98.81" y="129.94" width="1.1" height="1.1" fill="#0f1c0f"/><rect x="104.35" y="129.94" width="1.1" height="1.1" fill="#0f1c0f"/><rect x="109.88" y="129.94" width="1.1" height="1.1" fill="#0f1c0f"/><rect x="117.63" y="129.94" width="1.1" height="1.1" fill="#0f1c0f"/><rect x="123.17" y="129.94" width="1.1" height="1.1" fill="#0f1c0f"/><rect x="128.70" y="129.94" width="1.1" height="1.1" fill="#0f1c0f"/><rect x="138.12" y="129.94" width="1.1" height="1.1" fill="#0f1c0f"/><rect x="143.66" y="129.94" width="1.1" height="1.1" fill="#0f1c0f"/><rect x="149.19" y="129.94" width="1.1" height="1.1" fill="#0f1c0f"/><rect x="156.94" y="129.94" width="1.1" height="1.1" fill="#0f1c0f"/><rect x="162.48" y="129.94" width="1.1" height="1.1" fill="#0f1c0f"/><rect x="170.23" y="129.94" width="1.1" height="1.1" fill="#0f1c0f"/><rect x="196.80" y="129.94" width="1.1" height="1.1" fill="#0f1c0f"/><rect x="202.33" y="129.94" width="1.1" height="1.1" fill="#0f1c0f"/><rect x="207.87" y="129.94" width="1.1" height="1.1" fill="#0f1c0f"/><rect x="215.61" y="129.94" width="1.1" height="1.1" fill="#0f1c0f"/><rect x="221.15" y="129.94" width="1.1" height="1.1" fill="#0f1c0f"/><rect x="226.68" y="129.94" width="1.1" height="1.1" fill="#0f1c0f"/><rect x="234.43" y="129.94" width="1.1" height="1.1" fill="#0f1c0f"/><rect x="239.97" y="129.94" width="1.1" height="1.1" fill="#0f1c0f"/><rect x="245.50" y="129.94" width="1.1" height="1.1" fill="#0f1c0f"/><rect x="254.92" y="129.94" width="1.1" height="1.1" fill="#0f1c0f"/><rect x="260.46" y="129.94" width="1.1" height="1.1" fill="#0f1c0f"/><rect x="265.99" y="129.94" width="1.1" height="1.1" fill="#0f1c0f"/><rect x="273.74" y="129.94" width="1.1" height="1.1" fill="#0f1c0f"/><rect x="279.28" y="129.94" width="1.1" height="1.1" fill="#0f1c0f"/><rect x="287.03" y="129.94" width="1.1" height="1.1" fill="#0f1c0f"/><rect x="294.78" y="129.94" width="1.1" height="1.1" fill="#0f1c0f"/><rect x="300.31" y="129.94" width="1.1" height="1.1" fill="#0f1c0f"/><rect x="305.85" y="129.94" width="1.1" height="1.1" fill="#0f1c0f"/><rect x="314.72" y="129.94" width="1.1" height="1.1" fill="#0f1c0f"/><rect x="320.26" y="129.94" width="1.1" height="1.1" fill="#0f1c0f"/><rect x="325.79" y="129.94" width="1.1" height="1.1" fill="#0f1c0f"/><rect x="333.54" y="129.94" width="1.1" height="1.1" fill="#0f1c0f"/><rect x="339.08" y="129.94" width="1.1" height="1.1" fill="#0f1c0f"/><rect x="346.83" y="129.94" width="1.1" height="1.1" fill="#0f1c0f"/><rect x="354.58" y="129.94" width="1.1" height="1.1" fill="#0f1c0f"/><rect x="360.11" y="129.94" width="1.1" height="1.1" fill="#0f1c0f"/><rect x="365.65" y="129.94" width="1.1" height="1.1" fill="#0f1c0f"/><rect x="374.42" y="129.94" width="1.1" height="1.1" fill="#0f1c0f"/><rect x="379.96" y="129.94" width="1.1" height="1.1" fill="#0f1c0f"/><rect x="385.49" y="129.94" width="1.1" height="1.1" fill="#0f1c0f"/><rect x="393.24" y="129.94" width="1.1" height="1.1" fill="#0f1c0f"/><rect x="398.78" y="129.94" width="1.1" height="1.1" fill="#0f1c0f"/><rect x="406.53" y="129.94" width="1.1" height="1.1" fill="#0f1c0f"/><rect x="414.28" y="129.94" width="1.1" height="1.1" fill="#0f1c0f"/><rect x="419.81" y="129.94" width="1.1" height="1.1" fill="#0f1c0f"/><rect x="425.35" y="129.94" width="1.1" height="1.1" fill="#0f1c0f"/><text class="rn" transform="scale(0.75 1)" x="10.13 16.00" y="140.21" fill="#00ae00" stroke="#00ae00">2A</text><rect x="61.18" y="136.61" width="1.1" height="1.1" fill="#0f1c0f"/><rect x="66.71" y="136.61" width="1.1" height="1.1" fill="#0f1c0f"/><rect x="72.25" y="136.61" width="1.1" height="1.1" fill="#0f1c0f"/><rect x="80.00" y="136.61" width="1.1" height="1.1" fill="#0f1c0f"/><rect x="85.53" y="136.61" width="1.1" height="1.1" fill="#0f1c0f"/><rect x="91.07" y="136.61" width="1.1" height="1.1" fill="#0f1c0f"/><rect x="98.81" y="136.61" width="1.1" height="1.1" fill="#0f1c0f"/><rect x="104.35" y="136.61" width="1.1" height="1.1" fill="#0f1c0f"/><rect x="109.88" y="136.61" width="1.1" height="1.1" fill="#0f1c0f"/><rect x="117.63" y="136.61" width="1.1" height="1.1" fill="#0f1c0f"/><rect x="123.17" y="136.61" width="1.1" height="1.1" fill="#0f1c0f"/><rect x="128.70" y="136.61" width="1.1" height="1.1" fill="#0f1c0f"/><rect x="138.12" y="136.61" width="1.1" height="1.1" fill="#0f1c0f"/><rect x="143.66" y="136.61" width="1.1" height="1.1" fill="#0f1c0f"/><rect x="149.19" y="136.61" width="1.1" height="1.1" fill="#0f1c0f"/><rect x="156.94" y="136.61" width="1.1" height="1.1" fill="#0f1c0f"/><rect x="162.48" y="136.61" width="1.1" height="1.1" fill="#0f1c0f"/><rect x="170.23" y="136.61" width="1.1" height="1.1" fill="#0f1c0f"/><rect x="177.98" y="136.61" width="1.1" height="1.1" fill="#0f1c0f"/><rect x="183.51" y="136.61" width="1.1" height="1.1" fill="#0f1c0f"/><rect x="189.05" y="136.61" width="1.1" height="1.1" fill="#0f1c0f"/><rect x="196.80" y="136.61" width="1.1" height="1.1" fill="#0f1c0f"/><rect x="202.33" y="136.61" width="1.1" height="1.1" fill="#0f1c0f"/><rect x="207.87" y="136.61" width="1.1" height="1.1" fill="#0f1c0f"/><rect x="215.61" y="136.61" width="1.1" height="1.1" fill="#0f1c0f"/><rect x="221.15" y="136.61" width="1.1" height="1.1" fill="#0f1c0f"/><rect x="226.68" y="136.61" width="1.1" height="1.1" fill="#0f1c0f"/><rect x="234.43" y="136.61" width="1.1" height="1.1" fill="#0f1c0f"/><rect x="239.97" y="136.61" width="1.1" height="1.1" fill="#0f1c0f"/><rect x="245.50" y="136.61" width="1.1" height="1.1" fill="#0f1c0f"/><rect x="254.92" y="136.61" width="1.1" height="1.1" fill="#0f1c0f"/><rect x="260.46" y="136.61" width="1.1" height="1.1" fill="#0f1c0f"/><rect x="265.99" y="136.61" width="1.1" height="1.1" fill="#0f1c0f"/><rect x="273.74" y="136.61" width="1.1" height="1.1" fill="#0f1c0f"/><rect x="279.28" y="136.61" width="1.1" height="1.1" fill="#0f1c0f"/><rect x="287.03" y="136.61" width="1.1" height="1.1" fill="#0f1c0f"/><rect x="294.78" y="136.61" width="1.1" height="1.1" fill="#0f1c0f"/><rect x="300.31" y="136.61" width="1.1" height="1.1" fill="#0f1c0f"/><rect x="305.85" y="136.61" width="1.1" height="1.1" fill="#0f1c0f"/><rect x="314.72" y="136.61" width="1.1" height="1.1" fill="#0f1c0f"/><rect x="320.26" y="136.61" width="1.1" height="1.1" fill="#0f1c0f"/><rect x="325.79" y="136.61" width="1.1" height="1.1" fill="#0f1c0f"/><rect x="333.54" y="136.61" width="1.1" height="1.1" fill="#0f1c0f"/><rect x="339.08" y="136.61" width="1.1" height="1.1" fill="#0f1c0f"/><rect x="346.83" y="136.61" width="1.1" height="1.1" fill="#0f1c0f"/><rect x="354.58" y="136.61" width="1.1" height="1.1" fill="#0f1c0f"/><rect x="360.11" y="136.61" width="1.1" height="1.1" fill="#0f1c0f"/><rect x="365.65" y="136.61" width="1.1" height="1.1" fill="#0f1c0f"/><rect x="374.42" y="136.61" width="1.1" height="1.1" fill="#0f1c0f"/><rect x="379.96" y="136.61" width="1.1" height="1.1" fill="#0f1c0f"/><rect x="385.49" y="136.61" width="1.1" height="1.1" fill="#0f1c0f"/><rect x="393.24" y="136.61" width="1.1" height="1.1" fill="#0f1c0f"/><rect x="398.78" y="136.61" width="1.1" height="1.1" fill="#0f1c0f"/><rect x="406.53" y="136.61" width="1.1" height="1.1" fill="#0f1c0f"/><rect x="414.28" y="136.61" width="1.1" height="1.1" fill="#0f1c0f"/><rect x="419.81" y="136.61" width="1.1" height="1.1" fill="#0f1c0f"/><rect x="425.35" y="136.61" width="1.1" height="1.1" fill="#0f1c0f"/><text class="rn" transform="scale(0.75 1)" x="10.13 16.00" y="146.88" fill="#00ae00" stroke="#00ae00">2B</text><rect x="21.32" y="143.28" width="1.1" height="1.1" fill="#0f1c0f"/><rect x="26.86" y="143.28" width="1.1" height="1.1" fill="#0f1c0f"/><rect x="32.39" y="143.28" width="1.1" height="1.1" fill="#0f1c0f"/><rect x="40.14" y="143.28" width="1.1" height="1.1" fill="#0f1c0f"/><rect x="45.68" y="143.28" width="1.1" height="1.1" fill="#0f1c0f"/><rect x="53.43" y="143.28" width="1.1" height="1.1" fill="#0f1c0f"/><rect x="61.18" y="143.28" width="1.1" height="1.1" fill="#0f1c0f"/><rect x="66.71" y="143.28" width="1.1" height="1.1" fill="#0f1c0f"/><rect x="72.25" y="143.28" width="1.1" height="1.1" fill="#0f1c0f"/><rect x="80.00" y="143.28" width="1.1" height="1.1" fill="#0f1c0f"/><rect x="85.53" y="143.28" width="1.1" height="1.1" fill="#0f1c0f"/><rect x="91.07" y="143.28" width="1.1" height="1.1" fill="#0f1c0f"/><rect x="98.81" y="143.28" width="1.1" height="1.1" fill="#0f1c0f"/><rect x="104.35" y="143.28" width="1.1" height="1.1" fill="#0f1c0f"/><rect x="109.88" y="143.28" width="1.1" height="1.1" fill="#0f1c0f"/><rect x="117.63" y="143.28" width="1.1" height="1.1" fill="#0f1c0f"/><rect x="123.17" y="143.28" width="1.1" height="1.1" fill="#0f1c0f"/><rect x="128.70" y="143.28" width="1.1" height="1.1" fill="#0f1c0f"/><rect x="138.12" y="143.28" width="1.1" height="1.1" fill="#0f1c0f"/><rect x="143.66" y="143.28" width="1.1" height="1.1" fill="#0f1c0f"/><rect x="149.19" y="143.28" width="1.1" height="1.1" fill="#0f1c0f"/><rect x="156.94" y="143.28" width="1.1" height="1.1" fill="#0f1c0f"/><rect x="162.48" y="143.28" width="1.1" height="1.1" fill="#0f1c0f"/><rect x="170.23" y="143.28" width="1.1" height="1.1" fill="#0f1c0f"/><rect x="177.98" y="143.28" width="1.1" height="1.1" fill="#0f1c0f"/><rect x="183.51" y="143.28" width="1.1" height="1.1" fill="#0f1c0f"/><rect x="189.05" y="143.28" width="1.1" height="1.1" fill="#0f1c0f"/><rect x="196.80" y="143.28" width="1.1" height="1.1" fill="#0f1c0f"/><rect x="202.33" y="143.28" width="1.1" height="1.1" fill="#0f1c0f"/><rect x="207.87" y="143.28" width="1.1" height="1.1" fill="#0f1c0f"/><rect x="215.61" y="143.28" width="1.1" height="1.1" fill="#0f1c0f"/><rect x="221.15" y="143.28" width="1.1" height="1.1" fill="#0f1c0f"/><rect x="226.68" y="143.28" width="1.1" height="1.1" fill="#0f1c0f"/><rect x="234.43" y="143.28" width="1.1" height="1.1" fill="#0f1c0f"/><rect x="239.97" y="143.28" width="1.1" height="1.1" fill="#0f1c0f"/><rect x="245.50" y="143.28" width="1.1" height="1.1" fill="#0f1c0f"/><rect x="257.14" y="142.88" width="10.63" height="1.8" fill="#00cd00"/><rect x="273.74" y="143.28" width="1.1" height="1.1" fill="#0f1c0f"/><rect x="279.28" y="143.28" width="1.1" height="1.1" fill="#0f1c0f"/><rect x="287.03" y="143.28" width="1.1" height="1.1" fill="#0f1c0f"/><rect x="314.72" y="143.28" width="1.1" height="1.1" fill="#0f1c0f"/><rect x="320.26" y="143.28" width="1.1" height="1.1" fill="#0f1c0f"/><rect x="325.79" y="143.28" width="1.1" height="1.1" fill="#0f1c0f"/><rect x="333.54" y="143.28" width="1.1" height="1.1" fill="#0f1c0f"/><rect x="339.08" y="143.28" width="1.1" height="1.1" fill="#0f1c0f"/><rect x="346.83" y="143.28" width="1.1" height="1.1" fill="#0f1c0f"/><rect x="354.58" y="143.28" width="1.1" height="1.1" fill="#0f1c0f"/><rect x="360.11" y="143.28" width="1.1" height="1.1" fill="#0f1c0f"/><rect x="365.65" y="143.28" width="1.1" height="1.1" fill="#0f1c0f"/><rect x="374.42" y="143.28" width="1.1" height="1.1" fill="#0f1c0f"/><rect x="379.96" y="143.28" width="1.1" height="1.1" fill="#0f1c0f"/><rect x="385.49" y="143.28" width="1.1" height="1.1" fill="#0f1c0f"/><rect x="393.24" y="143.28" width="1.1" height="1.1" fill="#0f1c0f"/><rect x="398.78" y="143.28" width="1.1" height="1.1" fill="#0f1c0f"/><rect x="406.53" y="143.28" width="1.1" height="1.1" fill="#0f1c0f"/><rect x="414.28" y="143.28" width="1.1" height="1.1" fill="#0f1c0f"/><rect x="419.81" y="143.28" width="1.1" height="1.1" fill="#0f1c0f"/><rect x="425.35" y="143.28" width="1.1" height="1.1" fill="#0f1c0f"/><text class="rn" transform="scale(0.75 1)" x="10.13 16.00" y="153.56" fill="#c3c300" stroke="#c3c300">2C</text><rect x="53.43" y="149.96" width="1.1" height="1.1" fill="#323214"/><rect x="61.18" y="149.96" width="1.1" height="1.1" fill="#323214"/><rect x="66.71" y="149.96" width="1.1" height="1.1" fill="#323214"/><rect x="72.25" y="149.96" width="1.1" height="1.1" fill="#323214"/><rect x="80.00" y="149.96" width="1.1" height="1.1" fill="#323214"/><rect x="85.53" y="149.96" width="1.1" height="1.1" fill="#323214"/><rect x="91.07" y="149.96" width="1.1" height="1.1" fill="#323214"/><rect x="98.81" y="149.96" width="1.1" height="1.1" fill="#323214"/><rect x="104.35" y="149.96" width="1.1" height="1.1" fill="#323214"/><rect x="109.88" y="149.96" width="1.1" height="1.1" fill="#323214"/><rect x="117.63" y="149.96" width="1.1" height="1.1" fill="#323214"/><rect x="123.17" y="149.96" width="1.1" height="1.1" fill="#323214"/><rect x="128.70" y="149.96" width="1.1" height="1.1" fill="#323214"/><rect x="196.80" y="149.96" width="1.1" height="1.1" fill="#323214"/><rect x="202.33" y="149.96" width="1.1" height="1.1" fill="#323214"/><rect x="207.87" y="149.96" width="1.1" height="1.1" fill="#323214"/><rect x="215.61" y="149.96" width="1.1" height="1.1" fill="#323214"/><rect x="221.15" y="149.96" width="1.1" height="1.1" fill="#323214"/><rect x="226.68" y="149.96" width="1.1" height="1.1" fill="#323214"/><rect x="234.43" y="149.96" width="1.1" height="1.1" fill="#323214"/><rect x="239.97" y="149.96" width="1.1" height="1.1" fill="#323214"/><rect x="245.50" y="149.96" width="1.1" height="1.1" fill="#323214"/><rect x="287.03" y="149.96" width="1.1" height="1.1" fill="#323214"/><rect x="294.78" y="149.96" width="1.1" height="1.1" fill="#323214"/><rect x="300.31" y="149.96" width="1.1" height="1.1" fill="#323214"/><rect x="305.85" y="149.96" width="1.1" height="1.1" fill="#323214"/><rect x="406.53" y="149.96" width="1.1" height="1.1" fill="#323214"/><text class="rn" transform="scale(0.75 1)" x="10.13 16.00" y="160.23" fill="#00ae00" stroke="#00ae00">2D</text><rect x="21.32" y="156.63" width="1.1" height="1.1" fill="#0f1c0f"/><rect x="26.86" y="156.63" width="1.1" height="1.1" fill="#0f1c0f"/><rect x="32.39" y="156.63" width="1.1" height="1.1" fill="#0f1c0f"/><rect x="40.14" y="156.63" width="1.1" height="1.1" fill="#0f1c0f"/><rect x="45.68" y="156.63" width="1.1" height="1.1" fill="#0f1c0f"/><rect x="53.43" y="156.63" width="1.1" height="1.1" fill="#0f1c0f"/><rect x="61.18" y="156.63" width="1.1" height="1.1" fill="#0f1c0f"/><rect x="66.71" y="156.63" width="1.1" height="1.1" fill="#0f1c0f"/><rect x="72.25" y="156.63" width="1.1" height="1.1" fill="#0f1c0f"/><rect x="80.00" y="156.63" width="1.1" height="1.1" fill="#0f1c0f"/><rect x="85.53" y="156.63" width="1.1" height="1.1" fill="#0f1c0f"/><rect x="91.07" y="156.63" width="1.1" height="1.1" fill="#0f1c0f"/><rect x="98.81" y="156.63" width="1.1" height="1.1" fill="#0f1c0f"/><rect x="104.35" y="156.63" width="1.1" height="1.1" fill="#0f1c0f"/><rect x="109.88" y="156.63" width="1.1" height="1.1" fill="#0f1c0f"/><rect x="117.63" y="156.63" width="1.1" height="1.1" fill="#0f1c0f"/><rect x="123.17" y="156.63" width="1.1" height="1.1" fill="#0f1c0f"/><rect x="128.70" y="156.63" width="1.1" height="1.1" fill="#0f1c0f"/><rect x="138.12" y="156.63" width="1.1" height="1.1" fill="#0f1c0f"/><rect x="143.66" y="156.63" width="1.1" height="1.1" fill="#0f1c0f"/><rect x="149.19" y="156.63" width="1.1" height="1.1" fill="#0f1c0f"/><rect x="156.94" y="156.63" width="1.1" height="1.1" fill="#0f1c0f"/><rect x="162.48" y="156.63" width="1.1" height="1.1" fill="#0f1c0f"/><rect x="196.80" y="156.63" width="1.1" height="1.1" fill="#0f1c0f"/><rect x="202.33" y="156.63" width="1.1" height="1.1" fill="#0f1c0f"/><rect x="207.87" y="156.63" width="1.1" height="1.1" fill="#0f1c0f"/><rect x="215.61" y="156.63" width="1.1" height="1.1" fill="#0f1c0f"/><rect x="221.15" y="156.63" width="1.1" height="1.1" fill="#0f1c0f"/><rect x="226.68" y="156.63" width="1.1" height="1.1" fill="#0f1c0f"/><rect x="234.43" y="156.63" width="1.1" height="1.1" fill="#0f1c0f"/><rect x="239.97" y="156.63" width="1.1" height="1.1" fill="#0f1c0f"/><rect x="245.50" y="156.63" width="1.1" height="1.1" fill="#0f1c0f"/><rect x="257.14" y="156.23" width="10.63" height="1.8" fill="#00cd00"/><rect x="273.74" y="156.63" width="1.1" height="1.1" fill="#0f1c0f"/><rect x="279.28" y="156.63" width="1.1" height="1.1" fill="#0f1c0f"/><rect x="287.03" y="156.63" width="1.1" height="1.1" fill="#0f1c0f"/><rect x="314.72" y="156.63" width="1.1" height="1.1" fill="#0f1c0f"/><rect x="320.26" y="156.63" width="1.1" height="1.1" fill="#0f1c0f"/><rect x="325.79" y="156.63" width="1.1" height="1.1" fill="#0f1c0f"/><rect x="333.54" y="156.63" width="1.1" height="1.1" fill="#0f1c0f"/><rect x="339.08" y="156.63" width="1.1" height="1.1" fill="#0f1c0f"/><rect x="346.83" y="156.63" width="1.1" height="1.1" fill="#0f1c0f"/><rect x="354.58" y="156.63" width="1.1" height="1.1" fill="#0f1c0f"/><rect x="360.11" y="156.63" width="1.1" height="1.1" fill="#0f1c0f"/><rect x="365.65" y="156.63" width="1.1" height="1.1" fill="#0f1c0f"/><rect x="374.42" y="156.63" width="1.1" height="1.1" fill="#0f1c0f"/><rect x="379.96" y="156.63" width="1.1" height="1.1" fill="#0f1c0f"/><rect x="385.49" y="156.63" width="1.1" height="1.1" fill="#0f1c0f"/><rect x="393.24" y="156.63" width="1.1" height="1.1" fill="#0f1c0f"/><rect x="398.78" y="156.63" width="1.1" height="1.1" fill="#0f1c0f"/><rect x="406.53" y="156.63" width="1.1" height="1.1" fill="#0f1c0f"/><rect x="414.28" y="156.63" width="1.1" height="1.1" fill="#0f1c0f"/><rect x="419.81" y="156.63" width="1.1" height="1.1" fill="#0f1c0f"/><rect x="425.35" y="156.63" width="1.1" height="1.1" fill="#0f1c0f"/><text class="rn" transform="scale(0.75 1)" x="10.13 16.00" y="166.90" fill="#00ae00" stroke="#00ae00">2E</text><rect x="53.43" y="163.30" width="1.1" height="1.1" fill="#0f1c0f"/><rect x="61.18" y="163.30" width="1.1" height="1.1" fill="#0f1c0f"/><rect x="66.71" y="163.30" width="1.1" height="1.1" fill="#0f1c0f"/><rect x="72.25" y="163.30" width="1.1" height="1.1" fill="#0f1c0f"/><rect x="80.00" y="163.30" width="1.1" height="1.1" fill="#0f1c0f"/><rect x="85.53" y="163.30" width="1.1" height="1.1" fill="#0f1c0f"/><rect x="91.07" y="163.30" width="1.1" height="1.1" fill="#0f1c0f"/><rect x="98.81" y="163.30" width="1.1" height="1.1" fill="#0f1c0f"/><rect x="104.35" y="163.30" width="1.1" height="1.1" fill="#0f1c0f"/><rect x="109.88" y="163.30" width="1.1" height="1.1" fill="#0f1c0f"/><rect x="117.63" y="163.30" width="1.1" height="1.1" fill="#0f1c0f"/><rect x="123.17" y="163.30" width="1.1" height="1.1" fill="#0f1c0f"/><rect x="128.70" y="163.30" width="1.1" height="1.1" fill="#0f1c0f"/><rect x="177.98" y="163.30" width="1.1" height="1.1" fill="#0f1c0f"/><rect x="183.51" y="163.30" width="1.1" height="1.1" fill="#0f1c0f"/><rect x="189.05" y="163.30" width="1.1" height="1.1" fill="#0f1c0f"/><rect x="196.80" y="163.30" width="1.1" height="1.1" fill="#0f1c0f"/><rect x="202.33" y="163.30" width="1.1" height="1.1" fill="#0f1c0f"/><rect x="207.87" y="163.30" width="1.1" height="1.1" fill="#0f1c0f"/><rect x="215.61" y="163.30" width="1.1" height="1.1" fill="#0f1c0f"/><rect x="221.15" y="163.30" width="1.1" height="1.1" fill="#0f1c0f"/><rect x="226.68" y="163.30" width="1.1" height="1.1" fill="#0f1c0f"/><rect x="234.43" y="163.30" width="1.1" height="1.1" fill="#0f1c0f"/><rect x="239.97" y="163.30" width="1.1" height="1.1" fill="#0f1c0f"/><rect x="245.50" y="163.30" width="1.1" height="1.1" fill="#0f1c0f"/><rect x="287.03" y="163.30" width="1.1" height="1.1" fill="#0f1c0f"/><rect x="294.78" y="163.30" width="1.1" height="1.1" fill="#0f1c0f"/><rect x="300.31" y="163.30" width="1.1" height="1.1" fill="#0f1c0f"/><rect x="305.85" y="163.30" width="1.1" height="1.1" fill="#0f1c0f"/><rect x="354.58" y="163.30" width="1.1" height="1.1" fill="#0f1c0f"/><rect x="360.11" y="163.30" width="1.1" height="1.1" fill="#0f1c0f"/><rect x="365.65" y="163.30" width="1.1" height="1.1" fill="#0f1c0f"/><rect x="374.42" y="163.30" width="1.1" height="1.1" fill="#0f1c0f"/><rect x="379.96" y="163.30" width="1.1" height="1.1" fill="#0f1c0f"/><rect x="385.49" y="163.30" width="1.1" height="1.1" fill="#0f1c0f"/><rect x="393.24" y="163.30" width="1.1" height="1.1" fill="#0f1c0f"/><rect x="398.78" y="163.30" width="1.1" height="1.1" fill="#0f1c0f"/><rect x="406.53" y="163.30" width="1.1" height="1.1" fill="#0f1c0f"/><rect x="414.28" y="163.30" width="1.1" height="1.1" fill="#0f1c0f"/><rect x="419.81" y="163.30" width="1.1" height="1.1" fill="#0f1c0f"/><rect x="425.35" y="163.30" width="1.1" height="1.1" fill="#0f1c0f"/><text class="rn" transform="scale(0.75 1)" x="10.13 16.00" y="173.57" fill="#00ae00" stroke="#00ae00">2F</text><rect x="21.32" y="169.97" width="1.1" height="1.1" fill="#0f1c0f"/><rect x="26.86" y="169.97" width="1.1" height="1.1" fill="#0f1c0f"/><rect x="32.39" y="169.97" width="1.1" height="1.1" fill="#0f1c0f"/><rect x="40.14" y="169.97" width="1.1" height="1.1" fill="#0f1c0f"/><rect x="45.68" y="169.97" width="1.1" height="1.1" fill="#0f1c0f"/><rect x="53.43" y="169.97" width="1.1" height="1.1" fill="#0f1c0f"/><rect x="61.18" y="169.97" width="1.1" height="1.1" fill="#0f1c0f"/><rect x="66.71" y="169.97" width="1.1" height="1.1" fill="#0f1c0f"/><rect x="72.25" y="169.97" width="1.1" height="1.1" fill="#0f1c0f"/><rect x="80.00" y="169.97" width="1.1" height="1.1" fill="#0f1c0f"/><rect x="85.53" y="169.97" width="1.1" height="1.1" fill="#0f1c0f"/><rect x="91.07" y="169.97" width="1.1" height="1.1" fill="#0f1c0f"/><rect x="98.81" y="169.97" width="1.1" height="1.1" fill="#0f1c0f"/><rect x="104.35" y="169.97" width="1.1" height="1.1" fill="#0f1c0f"/><rect x="109.88" y="169.97" width="1.1" height="1.1" fill="#0f1c0f"/><rect x="117.63" y="169.97" width="1.1" height="1.1" fill="#0f1c0f"/><rect x="123.17" y="169.97" width="1.1" height="1.1" fill="#0f1c0f"/><rect x="128.70" y="169.97" width="1.1" height="1.1" fill="#0f1c0f"/><rect x="138.12" y="169.97" width="1.1" height="1.1" fill="#0f1c0f"/><rect x="143.66" y="169.97" width="1.1" height="1.1" fill="#0f1c0f"/><rect x="149.19" y="169.97" width="1.1" height="1.1" fill="#0f1c0f"/><rect x="156.94" y="169.97" width="1.1" height="1.1" fill="#0f1c0f"/><rect x="162.48" y="169.97" width="1.1" height="1.1" fill="#0f1c0f"/><rect x="196.80" y="169.97" width="1.1" height="1.1" fill="#0f1c0f"/><rect x="202.33" y="169.97" width="1.1" height="1.1" fill="#0f1c0f"/><rect x="207.87" y="169.97" width="1.1" height="1.1" fill="#0f1c0f"/><rect x="215.61" y="169.97" width="1.1" height="1.1" fill="#0f1c0f"/><rect x="221.15" y="169.97" width="1.1" height="1.1" fill="#0f1c0f"/><rect x="226.68" y="169.97" width="1.1" height="1.1" fill="#0f1c0f"/><rect x="234.43" y="169.97" width="1.1" height="1.1" fill="#0f1c0f"/><rect x="239.97" y="169.97" width="1.1" height="1.1" fill="#0f1c0f"/><rect x="245.50" y="169.97" width="1.1" height="1.1" fill="#0f1c0f"/><rect x="257.14" y="169.57" width="10.63" height="1.8" fill="#00cd00"/><rect x="273.74" y="169.97" width="1.1" height="1.1" fill="#0f1c0f"/><rect x="279.28" y="169.97" width="1.1" height="1.1" fill="#0f1c0f"/><rect x="287.03" y="169.97" width="1.1" height="1.1" fill="#0f1c0f"/><rect x="314.72" y="169.97" width="1.1" height="1.1" fill="#0f1c0f"/><rect x="320.26" y="169.97" width="1.1" height="1.1" fill="#0f1c0f"/><rect x="325.79" y="169.97" width="1.1" height="1.1" fill="#0f1c0f"/><rect x="333.54" y="169.97" width="1.1" height="1.1" fill="#0f1c0f"/><rect x="339.08" y="169.97" width="1.1" height="1.1" fill="#0f1c0f"/><rect x="346.83" y="169.97" width="1.1" height="1.1" fill="#0f1c0f"/><rect x="354.58" y="169.97" width="1.1" height="1.1" fill="#0f1c0f"/><rect x="360.11" y="169.97" width="1.1" height="1.1" fill="#0f1c0f"/><rect x="365.65" y="169.97" width="1.1" height="1.1" fill="#0f1c0f"/><rect x="374.42" y="169.97" width="1.1" height="1.1" fill="#0f1c0f"/><rect x="379.96" y="169.97" width="1.1" height="1.1" fill="#0f1c0f"/><rect x="385.49" y="169.97" width="1.1" height="1.1" fill="#0f1c0f"/><rect x="393.24" y="169.97" width="1.1" height="1.1" fill="#0f1c0f"/><rect x="398.78" y="169.97" width="1.1" height="1.1" fill="#0f1c0f"/><rect x="406.53" y="169.97" width="1.1" height="1.1" fill="#0f1c0f"/><rect x="414.28" y="169.97" width="1.1" height="1.1" fill="#0f1c0f"/><rect x="419.81" y="169.97" width="1.1" height="1.1" fill="#0f1c0f"/><rect x="425.35" y="169.97" width="1.1" height="1.1" fill="#0f1c0f"/><text class="rn" transform="scale(0.75 1)" x="10.13 16.00" y="180.25" fill="#e4e47c" stroke="#e4e47c">30</text><rect x="53.43" y="176.65" width="1.1" height="1.1" fill="#48481c"/><rect x="61.18" y="176.65" width="1.1" height="1.1" fill="#48481c"/><rect x="66.71" y="176.65" width="1.1" height="1.1" fill="#48481c"/><rect x="72.25" y="176.65" width="1.1" height="1.1" fill="#48481c"/><rect x="80.00" y="176.65" width="1.1" height="1.1" fill="#48481c"/><rect x="85.53" y="176.65" width="1.1" height="1.1" fill="#48481c"/><rect x="91.07" y="176.65" width="1.1" height="1.1" fill="#48481c"/><rect x="98.81" y="176.65" width="1.1" height="1.1" fill="#48481c"/><rect x="104.35" y="176.65" width="1.1" height="1.1" fill="#48481c"/><rect x="109.88" y="176.65" width="1.1" height="1.1" fill="#48481c"/><rect x="117.63" y="176.65" width="1.1" height="1.1" fill="#48481c"/><rect x="123.17" y="176.65" width="1.1" height="1.1" fill="#48481c"/><rect x="128.70" y="176.65" width="1.1" height="1.1" fill="#48481c"/><rect x="177.98" y="176.65" width="1.1" height="1.1" fill="#48481c"/><rect x="183.51" y="176.65" width="1.1" height="1.1" fill="#48481c"/><rect x="189.05" y="176.65" width="1.1" height="1.1" fill="#48481c"/><rect x="196.80" y="176.65" width="1.1" height="1.1" fill="#48481c"/><rect x="202.33" y="176.65" width="1.1" height="1.1" fill="#48481c"/><rect x="207.87" y="176.65" width="1.1" height="1.1" fill="#48481c"/><rect x="215.61" y="176.65" width="1.1" height="1.1" fill="#48481c"/><rect x="221.15" y="176.65" width="1.1" height="1.1" fill="#48481c"/><rect x="226.68" y="176.65" width="1.1" height="1.1" fill="#48481c"/><rect x="234.43" y="176.65" width="1.1" height="1.1" fill="#48481c"/><rect x="239.97" y="176.65" width="1.1" height="1.1" fill="#48481c"/><rect x="245.50" y="176.65" width="1.1" height="1.1" fill="#48481c"/><rect x="287.03" y="176.65" width="1.1" height="1.1" fill="#48481c"/><rect x="294.78" y="176.65" width="1.1" height="1.1" fill="#48481c"/><rect x="300.31" y="176.65" width="1.1" height="1.1" fill="#48481c"/><rect x="305.85" y="176.65" width="1.1" height="1.1" fill="#48481c"/><rect x="354.58" y="176.65" width="1.1" height="1.1" fill="#48481c"/><rect x="360.11" y="176.65" width="1.1" height="1.1" fill="#48481c"/><rect x="365.65" y="176.65" width="1.1" height="1.1" fill="#48481c"/><rect x="406.53" y="176.65" width="1.1" height="1.1" fill="#48481c"/><text class="rn" transform="scale(0.75 1)" x="10.13 16.00" y="186.92" fill="#00ae00" stroke="#00ae00">31</text><rect x="21.32" y="183.32" width="1.1" height="1.1" fill="#0f1c0f"/><rect x="26.86" y="183.32" width="1.1" height="1.1" fill="#0f1c0f"/><rect x="32.39" y="183.32" width="1.1" height="1.1" fill="#0f1c0f"/><rect x="40.14" y="183.32" width="1.1" height="1.1" fill="#0f1c0f"/><rect x="45.68" y="183.32" width="1.1" height="1.1" fill="#0f1c0f"/><rect x="53.43" y="183.32" width="1.1" height="1.1" fill="#0f1c0f"/><rect x="61.18" y="183.32" width="1.1" height="1.1" fill="#0f1c0f"/><rect x="66.71" y="183.32" width="1.1" height="1.1" fill="#0f1c0f"/><rect x="72.25" y="183.32" width="1.1" height="1.1" fill="#0f1c0f"/><rect x="80.00" y="183.32" width="1.1" height="1.1" fill="#0f1c0f"/><rect x="85.53" y="183.32" width="1.1" height="1.1" fill="#0f1c0f"/><rect x="91.07" y="183.32" width="1.1" height="1.1" fill="#0f1c0f"/><rect x="98.81" y="183.32" width="1.1" height="1.1" fill="#0f1c0f"/><rect x="104.35" y="183.32" width="1.1" height="1.1" fill="#0f1c0f"/><rect x="109.88" y="183.32" width="1.1" height="1.1" fill="#0f1c0f"/><rect x="117.63" y="183.32" width="1.1" height="1.1" fill="#0f1c0f"/><rect x="123.17" y="183.32" width="1.1" height="1.1" fill="#0f1c0f"/><rect x="128.70" y="183.32" width="1.1" height="1.1" fill="#0f1c0f"/><rect x="138.12" y="183.32" width="1.1" height="1.1" fill="#0f1c0f"/><rect x="143.66" y="183.32" width="1.1" height="1.1" fill="#0f1c0f"/><rect x="149.19" y="183.32" width="1.1" height="1.1" fill="#0f1c0f"/><rect x="156.94" y="183.32" width="1.1" height="1.1" fill="#0f1c0f"/><rect x="162.48" y="183.32" width="1.1" height="1.1" fill="#0f1c0f"/><rect x="196.80" y="183.32" width="1.1" height="1.1" fill="#0f1c0f"/><rect x="202.33" y="183.32" width="1.1" height="1.1" fill="#0f1c0f"/><rect x="207.87" y="183.32" width="1.1" height="1.1" fill="#0f1c0f"/><rect x="215.61" y="183.32" width="1.1" height="1.1" fill="#0f1c0f"/><rect x="221.15" y="183.32" width="1.1" height="1.1" fill="#0f1c0f"/><rect x="226.68" y="183.32" width="1.1" height="1.1" fill="#0f1c0f"/><rect x="234.43" y="183.32" width="1.1" height="1.1" fill="#0f1c0f"/><rect x="239.97" y="183.32" width="1.1" height="1.1" fill="#0f1c0f"/><rect x="245.50" y="183.32" width="1.1" height="1.1" fill="#0f1c0f"/><rect x="254.92" y="183.32" width="1.1" height="1.1" fill="#0f1c0f"/><rect x="260.46" y="183.32" width="1.1" height="1.1" fill="#0f1c0f"/><rect x="265.99" y="183.32" width="1.1" height="1.1" fill="#0f1c0f"/><rect x="273.74" y="183.32" width="1.1" height="1.1" fill="#0f1c0f"/><rect x="279.28" y="183.32" width="1.1" height="1.1" fill="#0f1c0f"/><rect x="287.03" y="183.32" width="1.1" height="1.1" fill="#0f1c0f"/><rect x="294.78" y="183.32" width="1.1" height="1.1" fill="#0f1c0f"/><rect x="300.31" y="183.32" width="1.1" height="1.1" fill="#0f1c0f"/><rect x="305.85" y="183.32" width="1.1" height="1.1" fill="#0f1c0f"/><rect x="374.42" y="183.32" width="1.1" height="1.1" fill="#0f1c0f"/><rect x="379.96" y="183.32" width="1.1" height="1.1" fill="#0f1c0f"/><rect x="385.49" y="183.32" width="1.1" height="1.1" fill="#0f1c0f"/><rect x="393.24" y="183.32" width="1.1" height="1.1" fill="#0f1c0f"/><rect x="398.78" y="183.32" width="1.1" height="1.1" fill="#0f1c0f"/><rect x="406.53" y="183.32" width="1.1" height="1.1" fill="#0f1c0f"/><rect x="414.28" y="183.32" width="1.1" height="1.1" fill="#0f1c0f"/><rect x="419.81" y="183.32" width="1.1" height="1.1" fill="#0f1c0f"/><rect x="425.35" y="183.32" width="1.1" height="1.1" fill="#0f1c0f"/><text class="rn" transform="scale(0.75 1)" x="10.13 16.00" y="193.59" fill="#00ae00" stroke="#00ae00">32</text><rect x="53.43" y="189.99" width="1.1" height="1.1" fill="#0f1c0f"/><rect x="61.18" y="189.99" width="1.1" height="1.1" fill="#0f1c0f"/><rect x="66.71" y="189.99" width="1.1" height="1.1" fill="#0f1c0f"/><rect x="72.25" y="189.99" width="1.1" height="1.1" fill="#0f1c0f"/><rect x="80.00" y="189.99" width="1.1" height="1.1" fill="#0f1c0f"/><rect x="85.53" y="189.99" width="1.1" height="1.1" fill="#0f1c0f"/><rect x="91.07" y="189.99" width="1.1" height="1.1" fill="#0f1c0f"/><rect x="98.81" y="189.99" width="1.1" height="1.1" fill="#0f1c0f"/><rect x="104.35" y="189.99" width="1.1" height="1.1" fill="#0f1c0f"/><rect x="109.88" y="189.99" width="1.1" height="1.1" fill="#0f1c0f"/><rect x="117.63" y="189.99" width="1.1" height="1.1" fill="#0f1c0f"/><rect x="123.17" y="189.99" width="1.1" height="1.1" fill="#0f1c0f"/><rect x="128.70" y="189.99" width="1.1" height="1.1" fill="#0f1c0f"/><rect x="138.12" y="189.99" width="1.1" height="1.1" fill="#0f1c0f"/><rect x="143.66" y="189.99" width="1.1" height="1.1" fill="#0f1c0f"/><rect x="149.19" y="189.99" width="1.1" height="1.1" fill="#0f1c0f"/><rect x="156.94" y="189.99" width="1.1" height="1.1" fill="#0f1c0f"/><rect x="162.48" y="189.99" width="1.1" height="1.1" fill="#0f1c0f"/><rect x="170.23" y="189.99" width="1.1" height="1.1" fill="#0f1c0f"/><rect x="177.98" y="189.99" width="1.1" height="1.1" fill="#0f1c0f"/><rect x="183.51" y="189.99" width="1.1" height="1.1" fill="#0f1c0f"/><rect x="189.05" y="189.99" width="1.1" height="1.1" fill="#0f1c0f"/><rect x="196.80" y="189.99" width="1.1" height="1.1" fill="#0f1c0f"/><rect x="202.33" y="189.99" width="1.1" height="1.1" fill="#0f1c0f"/><rect x="207.87" y="189.99" width="1.1" height="1.1" fill="#0f1c0f"/><rect x="215.61" y="189.99" width="1.1" height="1.1" fill="#0f1c0f"/><rect x="221.15" y="189.99" width="1.1" height="1.1" fill="#0f1c0f"/><rect x="226.68" y="189.99" width="1.1" height="1.1" fill="#0f1c0f"/><rect x="234.43" y="189.99" width="1.1" height="1.1" fill="#0f1c0f"/><rect x="239.97" y="189.99" width="1.1" height="1.1" fill="#0f1c0f"/><rect x="245.50" y="189.99" width="1.1" height="1.1" fill="#0f1c0f"/><rect x="257.14" y="189.59" width="10.63" height="1.8" fill="#00cd00"/><rect x="273.74" y="189.99" width="1.1" height="1.1" fill="#0f1c0f"/><rect x="279.28" y="189.99" width="1.1" height="1.1" fill="#0f1c0f"/><rect x="287.03" y="189.99" width="1.1" height="1.1" fill="#0f1c0f"/><rect x="294.78" y="189.99" width="1.1" height="1.1" fill="#0f1c0f"/><rect x="300.31" y="189.99" width="1.1" height="1.1" fill="#0f1c0f"/><rect x="305.85" y="189.99" width="1.1" height="1.1" fill="#0f1c0f"/><rect x="314.72" y="189.99" width="1.1" height="1.1" fill="#0f1c0f"/><rect x="320.26" y="189.99" width="1.1" height="1.1" fill="#0f1c0f"/><rect x="325.79" y="189.99" width="1.1" height="1.1" fill="#0f1c0f"/><rect x="333.54" y="189.99" width="1.1" height="1.1" fill="#0f1c0f"/><rect x="339.08" y="189.99" width="1.1" height="1.1" fill="#0f1c0f"/><rect x="346.83" y="189.99" width="1.1" height="1.1" fill="#0f1c0f"/><rect x="354.58" y="189.99" width="1.1" height="1.1" fill="#0f1c0f"/><rect x="360.11" y="189.99" width="1.1" height="1.1" fill="#0f1c0f"/><rect x="365.65" y="189.99" width="1.1" height="1.1" fill="#0f1c0f"/><rect x="406.53" y="189.99" width="1.1" height="1.1" fill="#0f1c0f"/><text class="rn" transform="scale(0.75 1)" x="10.13 16.00" y="200.27" fill="#00ae00" stroke="#00ae00">33</text><rect x="21.32" y="196.67" width="1.1" height="1.1" fill="#0f1c0f"/><rect x="26.86" y="196.67" width="1.1" height="1.1" fill="#0f1c0f"/><rect x="32.39" y="196.67" width="1.1" height="1.1" fill="#0f1c0f"/><rect x="40.14" y="196.67" width="1.1" height="1.1" fill="#0f1c0f"/><rect x="45.68" y="196.67" width="1.1" height="1.1" fill="#0f1c0f"/><rect x="53.43" y="196.67" width="1.1" height="1.1" fill="#0f1c0f"/><rect x="61.18" y="196.67" width="1.1" height="1.1" fill="#0f1c0f"/><rect x="66.71" y="196.67" width="1.1" height="1.1" fill="#0f1c0f"/><rect x="72.25" y="196.67" width="1.1" height="1.1" fill="#0f1c0f"/><rect x="80.00" y="196.67" width="1.1" height="1.1" fill="#0f1c0f"/><rect x="85.53" y="196.67" width="1.1" height="1.1" fill="#0f1c0f"/><rect x="91.07" y="196.67" width="1.1" height="1.1" fill="#0f1c0f"/><rect x="98.81" y="196.67" width="1.1" height="1.1" fill="#0f1c0f"/><rect x="104.35" y="196.67" width="1.1" height="1.1" fill="#0f1c0f"/><rect x="109.88" y="196.67" width="1.1" height="1.1" fill="#0f1c0f"/><rect x="117.63" y="196.67" width="1.1" height="1.1" fill="#0f1c0f"/><rect x="123.17" y="196.67" width="1.1" height="1.1" fill="#0f1c0f"/><rect x="128.70" y="196.67" width="1.1" height="1.1" fill="#0f1c0f"/><rect x="138.12" y="196.67" width="1.1" height="1.1" fill="#0f1c0f"/><rect x="143.66" y="196.67" width="1.1" height="1.1" fill="#0f1c0f"/><rect x="149.19" y="196.67" width="1.1" height="1.1" fill="#0f1c0f"/><rect x="156.94" y="196.67" width="1.1" height="1.1" fill="#0f1c0f"/><rect x="162.48" y="196.67" width="1.1" height="1.1" fill="#0f1c0f"/><rect x="170.23" y="196.67" width="1.1" height="1.1" fill="#0f1c0f"/><rect x="177.98" y="196.67" width="1.1" height="1.1" fill="#0f1c0f"/><rect x="183.51" y="196.67" width="1.1" height="1.1" fill="#0f1c0f"/><rect x="189.05" y="196.67" width="1.1" height="1.1" fill="#0f1c0f"/><rect x="196.80" y="196.67" width="1.1" height="1.1" fill="#0f1c0f"/><rect x="202.33" y="196.67" width="1.1" height="1.1" fill="#0f1c0f"/><rect x="207.87" y="196.67" width="1.1" height="1.1" fill="#0f1c0f"/><rect x="215.61" y="196.67" width="1.1" height="1.1" fill="#0f1c0f"/><rect x="221.15" y="196.67" width="1.1" height="1.1" fill="#0f1c0f"/><rect x="226.68" y="196.67" width="1.1" height="1.1" fill="#0f1c0f"/><rect x="234.43" y="196.67" width="1.1" height="1.1" fill="#0f1c0f"/><rect x="239.97" y="196.67" width="1.1" height="1.1" fill="#0f1c0f"/><rect x="245.50" y="196.67" width="1.1" height="1.1" fill="#0f1c0f"/><rect x="254.92" y="196.67" width="1.1" height="1.1" fill="#0f1c0f"/><rect x="260.46" y="196.67" width="1.1" height="1.1" fill="#0f1c0f"/><rect x="265.99" y="196.67" width="1.1" height="1.1" fill="#0f1c0f"/><rect x="273.74" y="196.67" width="1.1" height="1.1" fill="#0f1c0f"/><rect x="279.28" y="196.67" width="1.1" height="1.1" fill="#0f1c0f"/><rect x="287.03" y="196.67" width="1.1" height="1.1" fill="#0f1c0f"/><rect x="294.78" y="196.67" width="1.1" height="1.1" fill="#0f1c0f"/><rect x="300.31" y="196.67" width="1.1" height="1.1" fill="#0f1c0f"/><rect x="305.85" y="196.67" width="1.1" height="1.1" fill="#0f1c0f"/><rect x="374.42" y="196.67" width="1.1" height="1.1" fill="#0f1c0f"/><rect x="379.96" y="196.67" width="1.1" height="1.1" fill="#0f1c0f"/><rect x="385.49" y="196.67" width="1.1" height="1.1" fill="#0f1c0f"/><rect x="393.24" y="196.67" width="1.1" height="1.1" fill="#0f1c0f"/><rect x="398.78" y="196.67" width="1.1" height="1.1" fill="#0f1c0f"/><rect x="406.53" y="196.67" width="1.1" height="1.1" fill="#0f1c0f"/><rect x="414.28" y="196.67" width="1.1" height="1.1" fill="#0f1c0f"/><rect x="419.81" y="196.67" width="1.1" height="1.1" fill="#0f1c0f"/><rect x="425.35" y="196.67" width="1.1" height="1.1" fill="#0f1c0f"/><text class="rn" transform="scale(0.75 1)" x="10.13 16.00" y="206.94" fill="#c3c300" stroke="#c3c300">34</text><rect x="53.43" y="203.34" width="1.1" height="1.1" fill="#323214"/><rect x="61.18" y="203.34" width="1.1" height="1.1" fill="#323214"/><rect x="66.71" y="203.34" width="1.1" height="1.1" fill="#323214"/><rect x="72.25" y="203.34" width="1.1" height="1.1" fill="#323214"/><rect x="80.00" y="203.34" width="1.1" height="1.1" fill="#323214"/><rect x="85.53" y="203.34" width="1.1" height="1.1" fill="#323214"/><rect x="91.07" y="203.34" width="1.1" height="1.1" fill="#323214"/><rect x="98.81" y="203.34" width="1.1" height="1.1" fill="#323214"/><rect x="104.35" y="203.34" width="1.1" height="1.1" fill="#323214"/><rect x="109.88" y="203.34" width="1.1" height="1.1" fill="#323214"/><rect x="117.63" y="203.34" width="1.1" height="1.1" fill="#323214"/><rect x="123.17" y="203.34" width="1.1" height="1.1" fill="#323214"/><rect x="128.70" y="203.34" width="1.1" height="1.1" fill="#323214"/><rect x="177.98" y="203.34" width="1.1" height="1.1" fill="#323214"/><rect x="183.51" y="203.34" width="1.1" height="1.1" fill="#323214"/><rect x="189.05" y="203.34" width="1.1" height="1.1" fill="#323214"/><rect x="196.80" y="203.34" width="1.1" height="1.1" fill="#323214"/><rect x="202.33" y="203.34" width="1.1" height="1.1" fill="#323214"/><rect x="207.87" y="203.34" width="1.1" height="1.1" fill="#323214"/><rect x="215.61" y="203.34" width="1.1" height="1.1" fill="#323214"/><rect x="221.15" y="203.34" width="1.1" height="1.1" fill="#323214"/><rect x="226.68" y="203.34" width="1.1" height="1.1" fill="#323214"/><rect x="234.43" y="203.34" width="1.1" height="1.1" fill="#323214"/><rect x="239.97" y="203.34" width="1.1" height="1.1" fill="#323214"/><rect x="245.50" y="203.34" width="1.1" height="1.1" fill="#323214"/><rect x="287.03" y="203.34" width="1.1" height="1.1" fill="#323214"/><rect x="294.78" y="203.34" width="1.1" height="1.1" fill="#323214"/><rect x="300.31" y="203.34" width="1.1" height="1.1" fill="#323214"/><rect x="305.85" y="203.34" width="1.1" height="1.1" fill="#323214"/><rect x="406.53" y="203.34" width="1.1" height="1.1" fill="#323214"/><text class="rn" transform="scale(0.75 1)" x="10.13 16.00" y="213.61" fill="#00ae00" stroke="#00ae00">35</text><rect x="21.32" y="210.01" width="1.1" height="1.1" fill="#0f1c0f"/><rect x="26.86" y="210.01" width="1.1" height="1.1" fill="#0f1c0f"/><rect x="32.39" y="210.01" width="1.1" height="1.1" fill="#0f1c0f"/><rect x="40.14" y="210.01" width="1.1" height="1.1" fill="#0f1c0f"/><rect x="45.68" y="210.01" width="1.1" height="1.1" fill="#0f1c0f"/><rect x="53.43" y="210.01" width="1.1" height="1.1" fill="#0f1c0f"/><rect x="61.18" y="210.01" width="1.1" height="1.1" fill="#0f1c0f"/><rect x="66.71" y="210.01" width="1.1" height="1.1" fill="#0f1c0f"/><rect x="72.25" y="210.01" width="1.1" height="1.1" fill="#0f1c0f"/><rect x="80.00" y="210.01" width="1.1" height="1.1" fill="#0f1c0f"/><rect x="85.53" y="210.01" width="1.1" height="1.1" fill="#0f1c0f"/><rect x="91.07" y="210.01" width="1.1" height="1.1" fill="#0f1c0f"/><rect x="98.81" y="210.01" width="1.1" height="1.1" fill="#0f1c0f"/><rect x="104.35" y="210.01" width="1.1" height="1.1" fill="#0f1c0f"/><rect x="109.88" y="210.01" width="1.1" height="1.1" fill="#0f1c0f"/><rect x="117.63" y="210.01" width="1.1" height="1.1" fill="#0f1c0f"/><rect x="123.17" y="210.01" width="1.1" height="1.1" fill="#0f1c0f"/><rect x="128.70" y="210.01" width="1.1" height="1.1" fill="#0f1c0f"/><rect x="138.12" y="210.01" width="1.1" height="1.1" fill="#0f1c0f"/><rect x="143.66" y="210.01" width="1.1" height="1.1" fill="#0f1c0f"/><rect x="149.19" y="210.01" width="1.1" height="1.1" fill="#0f1c0f"/><rect x="156.94" y="210.01" width="1.1" height="1.1" fill="#0f1c0f"/><rect x="162.48" y="210.01" width="1.1" height="1.1" fill="#0f1c0f"/><rect x="170.23" y="210.01" width="1.1" height="1.1" fill="#0f1c0f"/><rect x="196.80" y="210.01" width="1.1" height="1.1" fill="#0f1c0f"/><rect x="202.33" y="210.01" width="1.1" height="1.1" fill="#0f1c0f"/><rect x="207.87" y="210.01" width="1.1" height="1.1" fill="#0f1c0f"/><rect x="215.61" y="210.01" width="1.1" height="1.1" fill="#0f1c0f"/><rect x="221.15" y="210.01" width="1.1" height="1.1" fill="#0f1c0f"/><rect x="226.68" y="210.01" width="1.1" height="1.1" fill="#0f1c0f"/><rect x="234.43" y="210.01" width="1.1" height="1.1" fill="#0f1c0f"/><rect x="239.97" y="210.01" width="1.1" height="1.1" fill="#0f1c0f"/><rect x="245.50" y="210.01" width="1.1" height="1.1" fill="#0f1c0f"/><rect x="254.92" y="210.01" width="1.1" height="1.1" fill="#0f1c0f"/><rect x="260.46" y="210.01" width="1.1" height="1.1" fill="#0f1c0f"/><rect x="265.99" y="210.01" width="1.1" height="1.1" fill="#0f1c0f"/><rect x="273.74" y="210.01" width="1.1" height="1.1" fill="#0f1c0f"/><rect x="279.28" y="210.01" width="1.1" height="1.1" fill="#0f1c0f"/><rect x="287.03" y="210.01" width="1.1" height="1.1" fill="#0f1c0f"/><rect x="294.78" y="210.01" width="1.1" height="1.1" fill="#0f1c0f"/><rect x="300.31" y="210.01" width="1.1" height="1.1" fill="#0f1c0f"/><rect x="305.85" y="210.01" width="1.1" height="1.1" fill="#0f1c0f"/><rect x="314.72" y="210.01" width="1.1" height="1.1" fill="#0f1c0f"/><rect x="320.26" y="210.01" width="1.1" height="1.1" fill="#0f1c0f"/><rect x="325.79" y="210.01" width="1.1" height="1.1" fill="#0f1c0f"/><rect x="333.54" y="210.01" width="1.1" height="1.1" fill="#0f1c0f"/><rect x="339.08" y="210.01" width="1.1" height="1.1" fill="#0f1c0f"/><rect x="346.83" y="210.01" width="1.1" height="1.1" fill="#0f1c0f"/><rect x="354.58" y="210.01" width="1.1" height="1.1" fill="#0f1c0f"/><rect x="360.11" y="210.01" width="1.1" height="1.1" fill="#0f1c0f"/><rect x="365.65" y="210.01" width="1.1" height="1.1" fill="#0f1c0f"/><rect x="374.42" y="210.01" width="1.1" height="1.1" fill="#0f1c0f"/><rect x="379.96" y="210.01" width="1.1" height="1.1" fill="#0f1c0f"/><rect x="385.49" y="210.01" width="1.1" height="1.1" fill="#0f1c0f"/><rect x="393.24" y="210.01" width="1.1" height="1.1" fill="#0f1c0f"/><rect x="398.78" y="210.01" width="1.1" height="1.1" fill="#0f1c0f"/><rect x="406.53" y="210.01" width="1.1" height="1.1" fill="#0f1c0f"/><rect x="414.28" y="210.01" width="1.1" height="1.1" fill="#0f1c0f"/><rect x="419.81" y="210.01" width="1.1" height="1.1" fill="#0f1c0f"/><rect x="425.35" y="210.01" width="1.1" height="1.1" fill="#0f1c0f"/><text class="rn" transform="scale(0.75 1)" x="10.13 16.00" y="220.29" fill="#00ae00" stroke="#00ae00">36</text><rect x="21.32" y="216.69" width="1.1" height="1.1" fill="#0f1c0f"/><rect x="26.86" y="216.69" width="1.1" height="1.1" fill="#0f1c0f"/><rect x="32.39" y="216.69" width="1.1" height="1.1" fill="#0f1c0f"/><rect x="40.14" y="216.69" width="1.1" height="1.1" fill="#0f1c0f"/><rect x="45.68" y="216.69" width="1.1" height="1.1" fill="#0f1c0f"/><rect x="53.43" y="216.69" width="1.1" height="1.1" fill="#0f1c0f"/><rect x="98.81" y="216.69" width="1.1" height="1.1" fill="#0f1c0f"/><rect x="104.35" y="216.69" width="1.1" height="1.1" fill="#0f1c0f"/><rect x="109.88" y="216.69" width="1.1" height="1.1" fill="#0f1c0f"/><rect x="117.63" y="216.69" width="1.1" height="1.1" fill="#0f1c0f"/><rect x="123.17" y="216.69" width="1.1" height="1.1" fill="#0f1c0f"/><rect x="128.70" y="216.69" width="1.1" height="1.1" fill="#0f1c0f"/><rect x="138.12" y="216.69" width="1.1" height="1.1" fill="#0f1c0f"/><rect x="143.66" y="216.69" width="1.1" height="1.1" fill="#0f1c0f"/><rect x="149.19" y="216.69" width="1.1" height="1.1" fill="#0f1c0f"/><rect x="156.94" y="216.69" width="1.1" height="1.1" fill="#0f1c0f"/><rect x="162.48" y="216.69" width="1.1" height="1.1" fill="#0f1c0f"/><rect x="170.23" y="216.69" width="1.1" height="1.1" fill="#0f1c0f"/><rect x="177.98" y="216.69" width="1.1" height="1.1" fill="#0f1c0f"/><rect x="183.51" y="216.69" width="1.1" height="1.1" fill="#0f1c0f"/><rect x="189.05" y="216.69" width="1.1" height="1.1" fill="#0f1c0f"/><rect x="196.80" y="216.69" width="1.1" height="1.1" fill="#0f1c0f"/><rect x="202.33" y="216.69" width="1.1" height="1.1" fill="#0f1c0f"/><rect x="207.87" y="216.69" width="1.1" height="1.1" fill="#0f1c0f"/><rect x="215.61" y="216.69" width="1.1" height="1.1" fill="#0f1c0f"/><rect x="221.15" y="216.69" width="1.1" height="1.1" fill="#0f1c0f"/><rect x="226.68" y="216.69" width="1.1" height="1.1" fill="#0f1c0f"/><rect x="234.43" y="216.69" width="1.1" height="1.1" fill="#0f1c0f"/><rect x="239.97" y="216.69" width="1.1" height="1.1" fill="#0f1c0f"/><rect x="245.50" y="216.69" width="1.1" height="1.1" fill="#0f1c0f"/><rect x="254.92" y="216.69" width="1.1" height="1.1" fill="#0f1c0f"/><rect x="260.46" y="216.69" width="1.1" height="1.1" fill="#0f1c0f"/><rect x="265.99" y="216.69" width="1.1" height="1.1" fill="#0f1c0f"/><rect x="273.74" y="216.69" width="1.1" height="1.1" fill="#0f1c0f"/><rect x="279.28" y="216.69" width="1.1" height="1.1" fill="#0f1c0f"/><rect x="287.03" y="216.69" width="1.1" height="1.1" fill="#0f1c0f"/><rect x="294.78" y="216.69" width="1.1" height="1.1" fill="#0f1c0f"/><rect x="300.31" y="216.69" width="1.1" height="1.1" fill="#0f1c0f"/><rect x="305.85" y="216.69" width="1.1" height="1.1" fill="#0f1c0f"/><rect x="314.72" y="216.69" width="1.1" height="1.1" fill="#0f1c0f"/><rect x="320.26" y="216.69" width="1.1" height="1.1" fill="#0f1c0f"/><rect x="325.79" y="216.69" width="1.1" height="1.1" fill="#0f1c0f"/><rect x="333.54" y="216.69" width="1.1" height="1.1" fill="#0f1c0f"/><rect x="339.08" y="216.69" width="1.1" height="1.1" fill="#0f1c0f"/><rect x="346.83" y="216.69" width="1.1" height="1.1" fill="#0f1c0f"/><rect x="354.58" y="216.69" width="1.1" height="1.1" fill="#0f1c0f"/><rect x="360.11" y="216.69" width="1.1" height="1.1" fill="#0f1c0f"/><rect x="365.65" y="216.69" width="1.1" height="1.1" fill="#0f1c0f"/><rect x="374.42" y="216.69" width="1.1" height="1.1" fill="#0f1c0f"/><rect x="379.96" y="216.69" width="1.1" height="1.1" fill="#0f1c0f"/><rect x="385.49" y="216.69" width="1.1" height="1.1" fill="#0f1c0f"/><rect x="393.24" y="216.69" width="1.1" height="1.1" fill="#0f1c0f"/><rect x="398.78" y="216.69" width="1.1" height="1.1" fill="#0f1c0f"/><rect x="406.53" y="216.69" width="1.1" height="1.1" fill="#0f1c0f"/><rect x="414.28" y="216.69" width="1.1" height="1.1" fill="#0f1c0f"/><rect x="419.81" y="216.69" width="1.1" height="1.1" fill="#0f1c0f"/><rect x="425.35" y="216.69" width="1.1" height="1.1" fill="#0f1c0f"/><text class="rn" transform="scale(0.75 1)" x="10.13 16.00" y="226.96" fill="#00ae00" stroke="#00ae00">37</text><rect x="21.32" y="223.36" width="1.1" height="1.1" fill="#0f1c0f"/><rect x="26.86" y="223.36" width="1.1" height="1.1" fill="#0f1c0f"/><rect x="32.39" y="223.36" width="1.1" height="1.1" fill="#0f1c0f"/><rect x="40.14" y="223.36" width="1.1" height="1.1" fill="#0f1c0f"/><rect x="45.68" y="223.36" width="1.1" height="1.1" fill="#0f1c0f"/><rect x="53.43" y="223.36" width="1.1" height="1.1" fill="#0f1c0f"/><rect x="61.18" y="223.36" width="1.1" height="1.1" fill="#0f1c0f"/><rect x="66.71" y="223.36" width="1.1" height="1.1" fill="#0f1c0f"/><rect x="72.25" y="223.36" width="1.1" height="1.1" fill="#0f1c0f"/><rect x="80.00" y="223.36" width="1.1" height="1.1" fill="#0f1c0f"/><rect x="85.53" y="223.36" width="1.1" height="1.1" fill="#0f1c0f"/><rect x="91.07" y="223.36" width="1.1" height="1.1" fill="#0f1c0f"/><rect x="98.81" y="223.36" width="1.1" height="1.1" fill="#0f1c0f"/><rect x="104.35" y="223.36" width="1.1" height="1.1" fill="#0f1c0f"/><rect x="109.88" y="223.36" width="1.1" height="1.1" fill="#0f1c0f"/><rect x="117.63" y="223.36" width="1.1" height="1.1" fill="#0f1c0f"/><rect x="123.17" y="223.36" width="1.1" height="1.1" fill="#0f1c0f"/><rect x="128.70" y="223.36" width="1.1" height="1.1" fill="#0f1c0f"/><rect x="138.12" y="223.36" width="1.1" height="1.1" fill="#0f1c0f"/><rect x="143.66" y="223.36" width="1.1" height="1.1" fill="#0f1c0f"/><rect x="149.19" y="223.36" width="1.1" height="1.1" fill="#0f1c0f"/><rect x="156.94" y="223.36" width="1.1" height="1.1" fill="#0f1c0f"/><rect x="162.48" y="223.36" width="1.1" height="1.1" fill="#0f1c0f"/><rect x="196.80" y="223.36" width="1.1" height="1.1" fill="#0f1c0f"/><rect x="202.33" y="223.36" width="1.1" height="1.1" fill="#0f1c0f"/><rect x="207.87" y="223.36" width="1.1" height="1.1" fill="#0f1c0f"/><rect x="215.61" y="223.36" width="1.1" height="1.1" fill="#0f1c0f"/><rect x="221.15" y="223.36" width="1.1" height="1.1" fill="#0f1c0f"/><rect x="226.68" y="223.36" width="1.1" height="1.1" fill="#0f1c0f"/><rect x="234.43" y="223.36" width="1.1" height="1.1" fill="#0f1c0f"/><rect x="239.97" y="223.36" width="1.1" height="1.1" fill="#0f1c0f"/><rect x="245.50" y="223.36" width="1.1" height="1.1" fill="#0f1c0f"/><rect x="257.14" y="222.96" width="10.63" height="1.8" fill="#00cd00"/><rect x="273.74" y="223.36" width="1.1" height="1.1" fill="#0f1c0f"/><rect x="279.28" y="223.36" width="1.1" height="1.1" fill="#0f1c0f"/><rect x="287.03" y="223.36" width="1.1" height="1.1" fill="#0f1c0f"/><rect x="314.72" y="223.36" width="1.1" height="1.1" fill="#0f1c0f"/><rect x="320.26" y="223.36" width="1.1" height="1.1" fill="#0f1c0f"/><rect x="325.79" y="223.36" width="1.1" height="1.1" fill="#0f1c0f"/><rect x="333.54" y="223.36" width="1.1" height="1.1" fill="#0f1c0f"/><rect x="339.08" y="223.36" width="1.1" height="1.1" fill="#0f1c0f"/><rect x="346.83" y="223.36" width="1.1" height="1.1" fill="#0f1c0f"/><rect x="354.58" y="223.36" width="1.1" height="1.1" fill="#0f1c0f"/><rect x="360.11" y="223.36" width="1.1" height="1.1" fill="#0f1c0f"/><rect x="365.65" y="223.36" width="1.1" height="1.1" fill="#0f1c0f"/><rect x="374.42" y="223.36" width="1.1" height="1.1" fill="#0f1c0f"/><rect x="379.96" y="223.36" width="1.1" height="1.1" fill="#0f1c0f"/><rect x="385.49" y="223.36" width="1.1" height="1.1" fill="#0f1c0f"/><rect x="393.24" y="223.36" width="1.1" height="1.1" fill="#0f1c0f"/><rect x="398.78" y="223.36" width="1.1" height="1.1" fill="#0f1c0f"/><rect x="406.53" y="223.36" width="1.1" height="1.1" fill="#0f1c0f"/><rect x="414.28" y="223.36" width="1.1" height="1.1" fill="#0f1c0f"/><rect x="419.81" y="223.36" width="1.1" height="1.1" fill="#0f1c0f"/><rect x="425.35" y="223.36" width="1.1" height="1.1" fill="#0f1c0f"/><text class="rn" transform="scale(0.75 1)" x="10.13 16.00" y="233.63" fill="#c3c300" stroke="#c3c300">38</text><rect x="21.32" y="230.03" width="1.1" height="1.1" fill="#323214"/><rect x="26.86" y="230.03" width="1.1" height="1.1" fill="#323214"/><rect x="32.39" y="230.03" width="1.1" height="1.1" fill="#323214"/><rect x="40.14" y="230.03" width="1.1" height="1.1" fill="#323214"/><rect x="45.68" y="230.03" width="1.1" height="1.1" fill="#323214"/><rect x="53.43" y="230.03" width="1.1" height="1.1" fill="#323214"/><rect x="61.18" y="230.03" width="1.1" height="1.1" fill="#323214"/><rect x="66.71" y="230.03" width="1.1" height="1.1" fill="#323214"/><rect x="72.25" y="230.03" width="1.1" height="1.1" fill="#323214"/><rect x="80.00" y="230.03" width="1.1" height="1.1" fill="#323214"/><rect x="85.53" y="230.03" width="1.1" height="1.1" fill="#323214"/><rect x="91.07" y="230.03" width="1.1" height="1.1" fill="#323214"/><rect x="98.81" y="230.03" width="1.1" height="1.1" fill="#323214"/><rect x="104.35" y="230.03" width="1.1" height="1.1" fill="#323214"/><rect x="109.88" y="230.03" width="1.1" height="1.1" fill="#323214"/><rect x="117.63" y="230.03" width="1.1" height="1.1" fill="#323214"/><rect x="123.17" y="230.03" width="1.1" height="1.1" fill="#323214"/><rect x="128.70" y="230.03" width="1.1" height="1.1" fill="#323214"/><rect x="196.80" y="230.03" width="1.1" height="1.1" fill="#323214"/><rect x="202.33" y="230.03" width="1.1" height="1.1" fill="#323214"/><rect x="207.87" y="230.03" width="1.1" height="1.1" fill="#323214"/><rect x="215.61" y="230.03" width="1.1" height="1.1" fill="#323214"/><rect x="221.15" y="230.03" width="1.1" height="1.1" fill="#323214"/><rect x="226.68" y="230.03" width="1.1" height="1.1" fill="#323214"/><rect x="234.43" y="230.03" width="1.1" height="1.1" fill="#323214"/><rect x="239.97" y="230.03" width="1.1" height="1.1" fill="#323214"/><rect x="245.50" y="230.03" width="1.1" height="1.1" fill="#323214"/><rect x="287.03" y="230.03" width="1.1" height="1.1" fill="#323214"/><rect x="294.78" y="230.03" width="1.1" height="1.1" fill="#323214"/><rect x="300.31" y="230.03" width="1.1" height="1.1" fill="#323214"/><rect x="305.85" y="230.03" width="1.1" height="1.1" fill="#323214"/><rect x="406.53" y="230.03" width="1.1" height="1.1" fill="#323214"/><text class="rn" transform="scale(0.75 1)" x="10.13 16.00" y="240.30" fill="#00ae00" stroke="#00ae00">39</text><rect x="21.32" y="236.70" width="1.1" height="1.1" fill="#0f1c0f"/><rect x="26.86" y="236.70" width="1.1" height="1.1" fill="#0f1c0f"/><rect x="32.39" y="236.70" width="1.1" height="1.1" fill="#0f1c0f"/><rect x="40.14" y="236.70" width="1.1" height="1.1" fill="#0f1c0f"/><rect x="45.68" y="236.70" width="1.1" height="1.1" fill="#0f1c0f"/><rect x="53.43" y="236.70" width="1.1" height="1.1" fill="#0f1c0f"/><rect x="61.18" y="236.70" width="1.1" height="1.1" fill="#0f1c0f"/><rect x="66.71" y="236.70" width="1.1" height="1.1" fill="#0f1c0f"/><rect x="72.25" y="236.70" width="1.1" height="1.1" fill="#0f1c0f"/><rect x="80.00" y="236.70" width="1.1" height="1.1" fill="#0f1c0f"/><rect x="85.53" y="236.70" width="1.1" height="1.1" fill="#0f1c0f"/><rect x="91.07" y="236.70" width="1.1" height="1.1" fill="#0f1c0f"/><rect x="98.81" y="236.70" width="1.1" height="1.1" fill="#0f1c0f"/><rect x="104.35" y="236.70" width="1.1" height="1.1" fill="#0f1c0f"/><rect x="109.88" y="236.70" width="1.1" height="1.1" fill="#0f1c0f"/><rect x="117.63" y="236.70" width="1.1" height="1.1" fill="#0f1c0f"/><rect x="123.17" y="236.70" width="1.1" height="1.1" fill="#0f1c0f"/><rect x="128.70" y="236.70" width="1.1" height="1.1" fill="#0f1c0f"/><rect x="138.12" y="236.70" width="1.1" height="1.1" fill="#0f1c0f"/><rect x="143.66" y="236.70" width="1.1" height="1.1" fill="#0f1c0f"/><rect x="149.19" y="236.70" width="1.1" height="1.1" fill="#0f1c0f"/><rect x="156.94" y="236.70" width="1.1" height="1.1" fill="#0f1c0f"/><rect x="162.48" y="236.70" width="1.1" height="1.1" fill="#0f1c0f"/><rect x="196.80" y="236.70" width="1.1" height="1.1" fill="#0f1c0f"/><rect x="202.33" y="236.70" width="1.1" height="1.1" fill="#0f1c0f"/><rect x="207.87" y="236.70" width="1.1" height="1.1" fill="#0f1c0f"/><rect x="215.61" y="236.70" width="1.1" height="1.1" fill="#0f1c0f"/><rect x="221.15" y="236.70" width="1.1" height="1.1" fill="#0f1c0f"/><rect x="226.68" y="236.70" width="1.1" height="1.1" fill="#0f1c0f"/><rect x="234.43" y="236.70" width="1.1" height="1.1" fill="#0f1c0f"/><rect x="239.97" y="236.70" width="1.1" height="1.1" fill="#0f1c0f"/><rect x="245.50" y="236.70" width="1.1" height="1.1" fill="#0f1c0f"/><rect x="254.92" y="236.70" width="1.1" height="1.1" fill="#0f1c0f"/><rect x="260.46" y="236.70" width="1.1" height="1.1" fill="#0f1c0f"/><rect x="265.99" y="236.70" width="1.1" height="1.1" fill="#0f1c0f"/><rect x="273.74" y="236.70" width="1.1" height="1.1" fill="#0f1c0f"/><rect x="279.28" y="236.70" width="1.1" height="1.1" fill="#0f1c0f"/><rect x="287.03" y="236.70" width="1.1" height="1.1" fill="#0f1c0f"/><rect x="294.78" y="236.70" width="1.1" height="1.1" fill="#0f1c0f"/><rect x="300.31" y="236.70" width="1.1" height="1.1" fill="#0f1c0f"/><rect x="305.85" y="236.70" width="1.1" height="1.1" fill="#0f1c0f"/><rect x="374.42" y="236.70" width="1.1" height="1.1" fill="#0f1c0f"/><rect x="379.96" y="236.70" width="1.1" height="1.1" fill="#0f1c0f"/><rect x="385.49" y="236.70" width="1.1" height="1.1" fill="#0f1c0f"/><rect x="393.24" y="236.70" width="1.1" height="1.1" fill="#0f1c0f"/><rect x="398.78" y="236.70" width="1.1" height="1.1" fill="#0f1c0f"/><rect x="406.53" y="236.70" width="1.1" height="1.1" fill="#0f1c0f"/><rect x="414.28" y="236.70" width="1.1" height="1.1" fill="#0f1c0f"/><rect x="419.81" y="236.70" width="1.1" height="1.1" fill="#0f1c0f"/><rect x="425.35" y="236.70" width="1.1" height="1.1" fill="#0f1c0f"/><text class="rn" transform="scale(0.75 1)" x="10.13 16.00" y="246.98" fill="#00ae00" stroke="#00ae00">3A</text><rect x="21.32" y="243.38" width="1.1" height="1.1" fill="#0f1c0f"/><rect x="26.86" y="243.38" width="1.1" height="1.1" fill="#0f1c0f"/><rect x="32.39" y="243.38" width="1.1" height="1.1" fill="#0f1c0f"/><rect x="40.14" y="243.38" width="1.1" height="1.1" fill="#0f1c0f"/><rect x="45.68" y="243.38" width="1.1" height="1.1" fill="#0f1c0f"/><rect x="53.43" y="243.38" width="1.1" height="1.1" fill="#0f1c0f"/><rect x="61.18" y="243.38" width="1.1" height="1.1" fill="#0f1c0f"/><rect x="66.71" y="243.38" width="1.1" height="1.1" fill="#0f1c0f"/><rect x="72.25" y="243.38" width="1.1" height="1.1" fill="#0f1c0f"/><rect x="80.00" y="243.38" width="1.1" height="1.1" fill="#0f1c0f"/><rect x="85.53" y="243.38" width="1.1" height="1.1" fill="#0f1c0f"/><rect x="91.07" y="243.38" width="1.1" height="1.1" fill="#0f1c0f"/><rect x="98.81" y="243.38" width="1.1" height="1.1" fill="#0f1c0f"/><rect x="104.35" y="243.38" width="1.1" height="1.1" fill="#0f1c0f"/><rect x="109.88" y="243.38" width="1.1" height="1.1" fill="#0f1c0f"/><rect x="117.63" y="243.38" width="1.1" height="1.1" fill="#0f1c0f"/><rect x="123.17" y="243.38" width="1.1" height="1.1" fill="#0f1c0f"/><rect x="128.70" y="243.38" width="1.1" height="1.1" fill="#0f1c0f"/><rect x="177.98" y="243.38" width="1.1" height="1.1" fill="#0f1c0f"/><rect x="183.51" y="243.38" width="1.1" height="1.1" fill="#0f1c0f"/><rect x="189.05" y="243.38" width="1.1" height="1.1" fill="#0f1c0f"/><rect x="196.80" y="243.38" width="1.1" height="1.1" fill="#0f1c0f"/><rect x="202.33" y="243.38" width="1.1" height="1.1" fill="#0f1c0f"/><rect x="207.87" y="243.38" width="1.1" height="1.1" fill="#0f1c0f"/><rect x="215.61" y="243.38" width="1.1" height="1.1" fill="#0f1c0f"/><rect x="221.15" y="243.38" width="1.1" height="1.1" fill="#0f1c0f"/><rect x="226.68" y="243.38" width="1.1" height="1.1" fill="#0f1c0f"/><rect x="234.43" y="243.38" width="1.1" height="1.1" fill="#0f1c0f"/><rect x="239.97" y="243.38" width="1.1" height="1.1" fill="#0f1c0f"/><rect x="245.50" y="243.38" width="1.1" height="1.1" fill="#0f1c0f"/><rect x="254.92" y="243.38" width="1.1" height="1.1" fill="#0f1c0f"/><rect x="260.46" y="243.38" width="1.1" height="1.1" fill="#0f1c0f"/><rect x="265.99" y="243.38" width="1.1" height="1.1" fill="#0f1c0f"/><rect x="273.74" y="243.38" width="1.1" height="1.1" fill="#0f1c0f"/><rect x="279.28" y="243.38" width="1.1" height="1.1" fill="#0f1c0f"/><rect x="287.03" y="243.38" width="1.1" height="1.1" fill="#0f1c0f"/><rect x="294.78" y="243.38" width="1.1" height="1.1" fill="#0f1c0f"/><rect x="300.31" y="243.38" width="1.1" height="1.1" fill="#0f1c0f"/><rect x="305.85" y="243.38" width="1.1" height="1.1" fill="#0f1c0f"/><rect x="314.72" y="243.38" width="1.1" height="1.1" fill="#0f1c0f"/><rect x="320.26" y="243.38" width="1.1" height="1.1" fill="#0f1c0f"/><rect x="325.79" y="243.38" width="1.1" height="1.1" fill="#0f1c0f"/><rect x="333.54" y="243.38" width="1.1" height="1.1" fill="#0f1c0f"/><rect x="339.08" y="243.38" width="1.1" height="1.1" fill="#0f1c0f"/><rect x="346.83" y="243.38" width="1.1" height="1.1" fill="#0f1c0f"/><rect x="354.58" y="243.38" width="1.1" height="1.1" fill="#0f1c0f"/><rect x="360.11" y="243.38" width="1.1" height="1.1" fill="#0f1c0f"/><rect x="365.65" y="243.38" width="1.1" height="1.1" fill="#0f1c0f"/><rect x="406.53" y="243.38" width="1.1" height="1.1" fill="#0f1c0f"/><text class="rn" transform="scale(0.75 1)" x="10.13 16.00" y="253.65" fill="#00ae00" stroke="#00ae00">3B</text><rect x="21.32" y="250.05" width="1.1" height="1.1" fill="#0f1c0f"/><rect x="26.86" y="250.05" width="1.1" height="1.1" fill="#0f1c0f"/><rect x="32.39" y="250.05" width="1.1" height="1.1" fill="#0f1c0f"/><rect x="40.14" y="250.05" width="1.1" height="1.1" fill="#0f1c0f"/><rect x="45.68" y="250.05" width="1.1" height="1.1" fill="#0f1c0f"/><rect x="53.43" y="250.05" width="1.1" height="1.1" fill="#0f1c0f"/><rect x="61.18" y="250.05" width="1.1" height="1.1" fill="#0f1c0f"/><rect x="66.71" y="250.05" width="1.1" height="1.1" fill="#0f1c0f"/><rect x="72.25" y="250.05" width="1.1" height="1.1" fill="#0f1c0f"/><rect x="80.00" y="250.05" width="1.1" height="1.1" fill="#0f1c0f"/><rect x="85.53" y="250.05" width="1.1" height="1.1" fill="#0f1c0f"/><rect x="91.07" y="250.05" width="1.1" height="1.1" fill="#0f1c0f"/><rect x="98.81" y="250.05" width="1.1" height="1.1" fill="#0f1c0f"/><rect x="104.35" y="250.05" width="1.1" height="1.1" fill="#0f1c0f"/><rect x="109.88" y="250.05" width="1.1" height="1.1" fill="#0f1c0f"/><rect x="117.63" y="250.05" width="1.1" height="1.1" fill="#0f1c0f"/><rect x="123.17" y="250.05" width="1.1" height="1.1" fill="#0f1c0f"/><rect x="128.70" y="250.05" width="1.1" height="1.1" fill="#0f1c0f"/><rect x="138.12" y="250.05" width="1.1" height="1.1" fill="#0f1c0f"/><rect x="143.66" y="250.05" width="1.1" height="1.1" fill="#0f1c0f"/><rect x="149.19" y="250.05" width="1.1" height="1.1" fill="#0f1c0f"/><rect x="156.94" y="250.05" width="1.1" height="1.1" fill="#0f1c0f"/><rect x="162.48" y="250.05" width="1.1" height="1.1" fill="#0f1c0f"/><rect x="196.80" y="250.05" width="1.1" height="1.1" fill="#0f1c0f"/><rect x="202.33" y="250.05" width="1.1" height="1.1" fill="#0f1c0f"/><rect x="207.87" y="250.05" width="1.1" height="1.1" fill="#0f1c0f"/><rect x="215.61" y="250.05" width="1.1" height="1.1" fill="#0f1c0f"/><rect x="221.15" y="250.05" width="1.1" height="1.1" fill="#0f1c0f"/><rect x="226.68" y="250.05" width="1.1" height="1.1" fill="#0f1c0f"/><rect x="234.43" y="250.05" width="1.1" height="1.1" fill="#0f1c0f"/><rect x="239.97" y="250.05" width="1.1" height="1.1" fill="#0f1c0f"/><rect x="245.50" y="250.05" width="1.1" height="1.1" fill="#0f1c0f"/><rect x="257.14" y="249.65" width="10.63" height="1.8" fill="#00cd00"/><rect x="273.74" y="250.05" width="1.1" height="1.1" fill="#0f1c0f"/><rect x="279.28" y="250.05" width="1.1" height="1.1" fill="#0f1c0f"/><rect x="287.03" y="250.05" width="1.1" height="1.1" fill="#0f1c0f"/><rect x="374.42" y="250.05" width="1.1" height="1.1" fill="#0f1c0f"/><rect x="379.96" y="250.05" width="1.1" height="1.1" fill="#0f1c0f"/><rect x="385.49" y="250.05" width="1.1" height="1.1" fill="#0f1c0f"/><rect x="393.24" y="250.05" width="1.1" height="1.1" fill="#0f1c0f"/><rect x="398.78" y="250.05" width="1.1" height="1.1" fill="#0f1c0f"/><rect x="406.53" y="250.05" width="1.1" height="1.1" fill="#0f1c0f"/><rect x="414.28" y="250.05" width="1.1" height="1.1" fill="#0f1c0f"/><rect x="419.81" y="250.05" width="1.1" height="1.1" fill="#0f1c0f"/><rect x="425.35" y="250.05" width="1.1" height="1.1" fill="#0f1c0f"/><text class="rn" transform="scale(0.75 1)" x="10.13 16.00" y="260.32" fill="#c3c300" stroke="#c3c300">3C</text><rect x="21.32" y="256.72" width="1.1" height="1.1" fill="#323214"/><rect x="26.86" y="256.72" width="1.1" height="1.1" fill="#323214"/><rect x="32.39" y="256.72" width="1.1" height="1.1" fill="#323214"/><rect x="40.14" y="256.72" width="1.1" height="1.1" fill="#323214"/><rect x="45.68" y="256.72" width="1.1" height="1.1" fill="#323214"/><rect x="53.43" y="256.72" width="1.1" height="1.1" fill="#323214"/><rect x="61.18" y="256.72" width="1.1" height="1.1" fill="#323214"/><rect x="66.71" y="256.72" width="1.1" height="1.1" fill="#323214"/><rect x="72.25" y="256.72" width="1.1" height="1.1" fill="#323214"/><rect x="80.00" y="256.72" width="1.1" height="1.1" fill="#323214"/><rect x="85.53" y="256.72" width="1.1" height="1.1" fill="#323214"/><rect x="91.07" y="256.72" width="1.1" height="1.1" fill="#323214"/><rect x="98.81" y="256.72" width="1.1" height="1.1" fill="#323214"/><rect x="104.35" y="256.72" width="1.1" height="1.1" fill="#323214"/><rect x="109.88" y="256.72" width="1.1" height="1.1" fill="#323214"/><rect x="117.63" y="256.72" width="1.1" height="1.1" fill="#323214"/><rect x="123.17" y="256.72" width="1.1" height="1.1" fill="#323214"/><rect x="128.70" y="256.72" width="1.1" height="1.1" fill="#323214"/><rect x="177.98" y="256.72" width="1.1" height="1.1" fill="#323214"/><rect x="183.51" y="256.72" width="1.1" height="1.1" fill="#323214"/><rect x="189.05" y="256.72" width="1.1" height="1.1" fill="#323214"/><rect x="196.80" y="256.72" width="1.1" height="1.1" fill="#323214"/><rect x="202.33" y="256.72" width="1.1" height="1.1" fill="#323214"/><rect x="207.87" y="256.72" width="1.1" height="1.1" fill="#323214"/><rect x="215.61" y="256.72" width="1.1" height="1.1" fill="#323214"/><rect x="221.15" y="256.72" width="1.1" height="1.1" fill="#323214"/><rect x="226.68" y="256.72" width="1.1" height="1.1" fill="#323214"/><rect x="234.43" y="256.72" width="1.1" height="1.1" fill="#323214"/><rect x="239.97" y="256.72" width="1.1" height="1.1" fill="#323214"/><rect x="245.50" y="256.72" width="1.1" height="1.1" fill="#323214"/><rect x="287.03" y="256.72" width="1.1" height="1.1" fill="#323214"/><rect x="294.78" y="256.72" width="1.1" height="1.1" fill="#323214"/><rect x="300.31" y="256.72" width="1.1" height="1.1" fill="#323214"/><rect x="305.85" y="256.72" width="1.1" height="1.1" fill="#323214"/><rect x="406.53" y="256.72" width="1.1" height="1.1" fill="#323214"/><text class="rn" transform="scale(0.75 1)" x="10.13 16.00" y="267.00" fill="#00ae00" stroke="#00ae00">3D</text><rect x="21.32" y="263.40" width="1.1" height="1.1" fill="#0f1c0f"/><rect x="26.86" y="263.40" width="1.1" height="1.1" fill="#0f1c0f"/><rect x="32.39" y="263.40" width="1.1" height="1.1" fill="#0f1c0f"/><rect x="40.14" y="263.40" width="1.1" height="1.1" fill="#0f1c0f"/><rect x="45.68" y="263.40" width="1.1" height="1.1" fill="#0f1c0f"/><rect x="53.43" y="263.40" width="1.1" height="1.1" fill="#0f1c0f"/><rect x="61.18" y="263.40" width="1.1" height="1.1" fill="#0f1c0f"/><rect x="66.71" y="263.40" width="1.1" height="1.1" fill="#0f1c0f"/><rect x="72.25" y="263.40" width="1.1" height="1.1" fill="#0f1c0f"/><rect x="80.00" y="263.40" width="1.1" height="1.1" fill="#0f1c0f"/><rect x="85.53" y="263.40" width="1.1" height="1.1" fill="#0f1c0f"/><rect x="91.07" y="263.40" width="1.1" height="1.1" fill="#0f1c0f"/><rect x="98.81" y="263.40" width="1.1" height="1.1" fill="#0f1c0f"/><rect x="104.35" y="263.40" width="1.1" height="1.1" fill="#0f1c0f"/><rect x="109.88" y="263.40" width="1.1" height="1.1" fill="#0f1c0f"/><rect x="117.63" y="263.40" width="1.1" height="1.1" fill="#0f1c0f"/><rect x="123.17" y="263.40" width="1.1" height="1.1" fill="#0f1c0f"/><rect x="128.70" y="263.40" width="1.1" height="1.1" fill="#0f1c0f"/><rect x="138.12" y="263.40" width="1.1" height="1.1" fill="#0f1c0f"/><rect x="143.66" y="263.40" width="1.1" height="1.1" fill="#0f1c0f"/><rect x="149.19" y="263.40" width="1.1" height="1.1" fill="#0f1c0f"/><rect x="156.94" y="263.40" width="1.1" height="1.1" fill="#0f1c0f"/><rect x="162.48" y="263.40" width="1.1" height="1.1" fill="#0f1c0f"/><rect x="170.23" y="263.40" width="1.1" height="1.1" fill="#0f1c0f"/><rect x="196.80" y="263.40" width="1.1" height="1.1" fill="#0f1c0f"/><rect x="202.33" y="263.40" width="1.1" height="1.1" fill="#0f1c0f"/><rect x="207.87" y="263.40" width="1.1" height="1.1" fill="#0f1c0f"/><rect x="215.61" y="263.40" width="1.1" height="1.1" fill="#0f1c0f"/><rect x="221.15" y="263.40" width="1.1" height="1.1" fill="#0f1c0f"/><rect x="226.68" y="263.40" width="1.1" height="1.1" fill="#0f1c0f"/><rect x="234.43" y="263.40" width="1.1" height="1.1" fill="#0f1c0f"/><rect x="239.97" y="263.40" width="1.1" height="1.1" fill="#0f1c0f"/><rect x="245.50" y="263.40" width="1.1" height="1.1" fill="#0f1c0f"/><rect x="254.92" y="263.40" width="1.1" height="1.1" fill="#0f1c0f"/><rect x="260.46" y="263.40" width="1.1" height="1.1" fill="#0f1c0f"/><rect x="265.99" y="263.40" width="1.1" height="1.1" fill="#0f1c0f"/><rect x="273.74" y="263.40" width="1.1" height="1.1" fill="#0f1c0f"/><rect x="279.28" y="263.40" width="1.1" height="1.1" fill="#0f1c0f"/><rect x="287.03" y="263.40" width="1.1" height="1.1" fill="#0f1c0f"/><rect x="294.78" y="263.40" width="1.1" height="1.1" fill="#0f1c0f"/><rect x="300.31" y="263.40" width="1.1" height="1.1" fill="#0f1c0f"/><rect x="305.85" y="263.40" width="1.1" height="1.1" fill="#0f1c0f"/><rect x="314.72" y="263.40" width="1.1" height="1.1" fill="#0f1c0f"/><rect x="320.26" y="263.40" width="1.1" height="1.1" fill="#0f1c0f"/><rect x="325.79" y="263.40" width="1.1" height="1.1" fill="#0f1c0f"/><rect x="333.54" y="263.40" width="1.1" height="1.1" fill="#0f1c0f"/><rect x="339.08" y="263.40" width="1.1" height="1.1" fill="#0f1c0f"/><rect x="346.83" y="263.40" width="1.1" height="1.1" fill="#0f1c0f"/><rect x="354.58" y="263.40" width="1.1" height="1.1" fill="#0f1c0f"/><rect x="360.11" y="263.40" width="1.1" height="1.1" fill="#0f1c0f"/><rect x="365.65" y="263.40" width="1.1" height="1.1" fill="#0f1c0f"/><rect x="374.42" y="263.40" width="1.1" height="1.1" fill="#0f1c0f"/><rect x="379.96" y="263.40" width="1.1" height="1.1" fill="#0f1c0f"/><rect x="385.49" y="263.40" width="1.1" height="1.1" fill="#0f1c0f"/><rect x="393.24" y="263.40" width="1.1" height="1.1" fill="#0f1c0f"/><rect x="398.78" y="263.40" width="1.1" height="1.1" fill="#0f1c0f"/><rect x="406.53" y="263.40" width="1.1" height="1.1" fill="#0f1c0f"/><rect x="414.28" y="263.40" width="1.1" height="1.1" fill="#0f1c0f"/><rect x="419.81" y="263.40" width="1.1" height="1.1" fill="#0f1c0f"/><rect x="425.35" y="263.40" width="1.1" height="1.1" fill="#0f1c0f"/><text class="rn" transform="scale(0.75 1)" x="10.13 16.00" y="273.67" fill="#00ae00" stroke="#00ae00">3E</text><rect x="21.32" y="270.07" width="1.1" height="1.1" fill="#0f1c0f"/><rect x="26.86" y="270.07" width="1.1" height="1.1" fill="#0f1c0f"/><rect x="32.39" y="270.07" width="1.1" height="1.1" fill="#0f1c0f"/><rect x="40.14" y="270.07" width="1.1" height="1.1" fill="#0f1c0f"/><rect x="45.68" y="270.07" width="1.1" height="1.1" fill="#0f1c0f"/><rect x="53.43" y="270.07" width="1.1" height="1.1" fill="#0f1c0f"/><rect x="61.18" y="270.07" width="1.1" height="1.1" fill="#0f1c0f"/><rect x="66.71" y="270.07" width="1.1" height="1.1" fill="#0f1c0f"/><rect x="72.25" y="270.07" width="1.1" height="1.1" fill="#0f1c0f"/><rect x="80.00" y="270.07" width="1.1" height="1.1" fill="#0f1c0f"/><rect x="85.53" y="270.07" width="1.1" height="1.1" fill="#0f1c0f"/><rect x="91.07" y="270.07" width="1.1" height="1.1" fill="#0f1c0f"/><rect x="98.81" y="270.07" width="1.1" height="1.1" fill="#0f1c0f"/><rect x="104.35" y="270.07" width="1.1" height="1.1" fill="#0f1c0f"/><rect x="109.88" y="270.07" width="1.1" height="1.1" fill="#0f1c0f"/><rect x="117.63" y="270.07" width="1.1" height="1.1" fill="#0f1c0f"/><rect x="123.17" y="270.07" width="1.1" height="1.1" fill="#0f1c0f"/><rect x="128.70" y="270.07" width="1.1" height="1.1" fill="#0f1c0f"/><rect x="138.12" y="270.07" width="1.1" height="1.1" fill="#0f1c0f"/><rect x="143.66" y="270.07" width="1.1" height="1.1" fill="#0f1c0f"/><rect x="149.19" y="270.07" width="1.1" height="1.1" fill="#0f1c0f"/><rect x="156.94" y="270.07" width="1.1" height="1.1" fill="#0f1c0f"/><rect x="162.48" y="270.07" width="1.1" height="1.1" fill="#0f1c0f"/><rect x="170.23" y="270.07" width="1.1" height="1.1" fill="#0f1c0f"/><rect x="177.98" y="270.07" width="1.1" height="1.1" fill="#0f1c0f"/><rect x="183.51" y="270.07" width="1.1" height="1.1" fill="#0f1c0f"/><rect x="189.05" y="270.07" width="1.1" height="1.1" fill="#0f1c0f"/><rect x="196.80" y="270.07" width="1.1" height="1.1" fill="#0f1c0f"/><rect x="202.33" y="270.07" width="1.1" height="1.1" fill="#0f1c0f"/><rect x="207.87" y="270.07" width="1.1" height="1.1" fill="#0f1c0f"/><rect x="215.61" y="270.07" width="1.1" height="1.1" fill="#0f1c0f"/><rect x="221.15" y="270.07" width="1.1" height="1.1" fill="#0f1c0f"/><rect x="226.68" y="270.07" width="1.1" height="1.1" fill="#0f1c0f"/><rect x="234.43" y="270.07" width="1.1" height="1.1" fill="#0f1c0f"/><rect x="239.97" y="270.07" width="1.1" height="1.1" fill="#0f1c0f"/><rect x="245.50" y="270.07" width="1.1" height="1.1" fill="#0f1c0f"/><rect x="254.92" y="270.07" width="1.1" height="1.1" fill="#0f1c0f"/><rect x="260.46" y="270.07" width="1.1" height="1.1" fill="#0f1c0f"/><rect x="265.99" y="270.07" width="1.1" height="1.1" fill="#0f1c0f"/><rect x="273.74" y="270.07" width="1.1" height="1.1" fill="#0f1c0f"/><rect x="279.28" y="270.07" width="1.1" height="1.1" fill="#0f1c0f"/><rect x="287.03" y="270.07" width="1.1" height="1.1" fill="#0f1c0f"/><rect x="294.78" y="270.07" width="1.1" height="1.1" fill="#0f1c0f"/><rect x="300.31" y="270.07" width="1.1" height="1.1" fill="#0f1c0f"/><rect x="305.85" y="270.07" width="1.1" height="1.1" fill="#0f1c0f"/><rect x="314.72" y="270.07" width="1.1" height="1.1" fill="#0f1c0f"/><rect x="320.26" y="270.07" width="1.1" height="1.1" fill="#0f1c0f"/><rect x="325.79" y="270.07" width="1.1" height="1.1" fill="#0f1c0f"/><rect x="333.54" y="270.07" width="1.1" height="1.1" fill="#0f1c0f"/><rect x="339.08" y="270.07" width="1.1" height="1.1" fill="#0f1c0f"/><rect x="346.83" y="270.07" width="1.1" height="1.1" fill="#0f1c0f"/><rect x="354.58" y="270.07" width="1.1" height="1.1" fill="#0f1c0f"/><rect x="360.11" y="270.07" width="1.1" height="1.1" fill="#0f1c0f"/><rect x="365.65" y="270.07" width="1.1" height="1.1" fill="#0f1c0f"/><rect x="374.42" y="270.07" width="1.1" height="1.1" fill="#0f1c0f"/><rect x="379.96" y="270.07" width="1.1" height="1.1" fill="#0f1c0f"/><rect x="385.49" y="270.07" width="1.1" height="1.1" fill="#0f1c0f"/><rect x="393.24" y="270.07" width="1.1" height="1.1" fill="#0f1c0f"/><rect x="398.78" y="270.07" width="1.1" height="1.1" fill="#0f1c0f"/><rect x="406.53" y="270.07" width="1.1" height="1.1" fill="#0f1c0f"/><rect x="414.28" y="270.07" width="1.1" height="1.1" fill="#0f1c0f"/><rect x="419.81" y="270.07" width="1.1" height="1.1" fill="#0f1c0f"/><rect x="425.35" y="270.07" width="1.1" height="1.1" fill="#0f1c0f"/><text class="rn" transform="scale(0.75 1)" x="10.13 16.00" y="280.34" fill="#00ae00" stroke="#00ae00">3F</text><rect x="21.32" y="276.74" width="1.1" height="1.1" fill="#0f1c0f"/><rect x="26.86" y="276.74" width="1.1" height="1.1" fill="#0f1c0f"/><rect x="32.39" y="276.74" width="1.1" height="1.1" fill="#0f1c0f"/><rect x="40.14" y="276.74" width="1.1" height="1.1" fill="#0f1c0f"/><rect x="45.68" y="276.74" width="1.1" height="1.1" fill="#0f1c0f"/><rect x="53.43" y="276.74" width="1.1" height="1.1" fill="#0f1c0f"/><rect x="61.18" y="276.74" width="1.1" height="1.1" fill="#0f1c0f"/><rect x="66.71" y="276.74" width="1.1" height="1.1" fill="#0f1c0f"/><rect x="72.25" y="276.74" width="1.1" height="1.1" fill="#0f1c0f"/><rect x="80.00" y="276.74" width="1.1" height="1.1" fill="#0f1c0f"/><rect x="85.53" y="276.74" width="1.1" height="1.1" fill="#0f1c0f"/><rect x="91.07" y="276.74" width="1.1" height="1.1" fill="#0f1c0f"/><rect x="98.81" y="276.74" width="1.1" height="1.1" fill="#0f1c0f"/><rect x="104.35" y="276.74" width="1.1" height="1.1" fill="#0f1c0f"/><rect x="109.88" y="276.74" width="1.1" height="1.1" fill="#0f1c0f"/><rect x="117.63" y="276.74" width="1.1" height="1.1" fill="#0f1c0f"/><rect x="123.17" y="276.74" width="1.1" height="1.1" fill="#0f1c0f"/><rect x="128.70" y="276.74" width="1.1" height="1.1" fill="#0f1c0f"/><rect x="138.12" y="276.74" width="1.1" height="1.1" fill="#0f1c0f"/><rect x="143.66" y="276.74" width="1.1" height="1.1" fill="#0f1c0f"/><rect x="149.19" y="276.74" width="1.1" height="1.1" fill="#0f1c0f"/><rect x="156.94" y="276.74" width="1.1" height="1.1" fill="#0f1c0f"/><rect x="162.48" y="276.74" width="1.1" height="1.1" fill="#0f1c0f"/><rect x="170.23" y="276.74" width="1.1" height="1.1" fill="#0f1c0f"/><rect x="177.98" y="276.74" width="1.1" height="1.1" fill="#0f1c0f"/><rect x="183.51" y="276.74" width="1.1" height="1.1" fill="#0f1c0f"/><rect x="189.05" y="276.74" width="1.1" height="1.1" fill="#0f1c0f"/><rect x="196.80" y="276.74" width="1.1" height="1.1" fill="#0f1c0f"/><rect x="202.33" y="276.74" width="1.1" height="1.1" fill="#0f1c0f"/><rect x="207.87" y="276.74" width="1.1" height="1.1" fill="#0f1c0f"/><rect x="215.61" y="276.74" width="1.1" height="1.1" fill="#0f1c0f"/><rect x="221.15" y="276.74" width="1.1" height="1.1" fill="#0f1c0f"/><rect x="226.68" y="276.74" width="1.1" height="1.1" fill="#0f1c0f"/><rect x="234.43" y="276.74" width="1.1" height="1.1" fill="#0f1c0f"/><rect x="239.97" y="276.74" width="1.1" height="1.1" fill="#0f1c0f"/><rect x="245.50" y="276.74" width="1.1" height="1.1" fill="#0f1c0f"/><rect x="257.14" y="276.34" width="10.63" height="1.8" fill="#00cd00"/><rect x="273.74" y="276.74" width="1.1" height="1.1" fill="#0f1c0f"/><rect x="279.28" y="276.74" width="1.1" height="1.1" fill="#0f1c0f"/><rect x="287.03" y="276.74" width="1.1" height="1.1" fill="#0f1c0f"/><rect x="314.72" y="276.74" width="1.1" height="1.1" fill="#0f1c0f"/><rect x="320.26" y="276.74" width="1.1" height="1.1" fill="#0f1c0f"/><rect x="325.79" y="276.74" width="1.1" height="1.1" fill="#0f1c0f"/><rect x="333.54" y="276.74" width="1.1" height="1.1" fill="#0f1c0f"/><rect x="339.08" y="276.74" width="1.1" height="1.1" fill="#0f1c0f"/><rect x="346.83" y="276.74" width="1.1" height="1.1" fill="#0f1c0f"/><rect x="354.58" y="276.74" width="1.1" height="1.1" fill="#0f1c0f"/><rect x="360.11" y="276.74" width="1.1" height="1.1" fill="#0f1c0f"/><rect x="365.65" y="276.74" width="1.1" height="1.1" fill="#0f1c0f"/><rect x="374.42" y="276.74" width="1.1" height="1.1" fill="#0f1c0f"/><rect x="379.96" y="276.74" width="1.1" height="1.1" fill="#0f1c0f"/><rect x="385.49" y="276.74" width="1.1" height="1.1" fill="#0f1c0f"/><rect x="393.24" y="276.74" width="1.1" height="1.1" fill="#0f1c0f"/><rect x="398.78" y="276.74" width="1.1" height="1.1" fill="#0f1c0f"/><rect x="406.53" y="276.74" width="1.1" height="1.1" fill="#0f1c0f"/><rect x="414.28" y="276.74" width="1.1" height="1.1" fill="#0f1c0f"/><rect x="419.81" y="276.74" width="1.1" height="1.1" fill="#0f1c0f"/><rect x="425.35" y="276.74" width="1.1" height="1.1" fill="#0f1c0f"/><text class="rn" transform="scale(0.75 1)" x="10.13 16.00" y="287.02" fill="#cccc6e" stroke="#cccc6e">00</text><rect x="98.81" y="283.42" width="1.1" height="1.1" fill="#24240e"/><rect x="104.35" y="283.42" width="1.1" height="1.1" fill="#24240e"/><rect x="109.88" y="283.42" width="1.1" height="1.1" fill="#24240e"/><rect x="117.63" y="283.42" width="1.1" height="1.1" fill="#24240e"/><rect x="123.17" y="283.42" width="1.1" height="1.1" fill="#24240e"/><rect x="128.70" y="283.42" width="1.1" height="1.1" fill="#24240e"/><rect x="287.03" y="283.42" width="1.1" height="1.1" fill="#24240e"/><rect x="294.78" y="283.42" width="1.1" height="1.1" fill="#24240e"/><rect x="300.31" y="283.42" width="1.1" height="1.1" fill="#24240e"/><rect x="305.85" y="283.42" width="1.1" height="1.1" fill="#24240e"/><rect x="406.53" y="283.42" width="1.1" height="1.1" fill="#24240e"/><text class="rn" transform="scale(0.75 1)" x="10.13 16.00" y="293.69" fill="#00ae00" stroke="#00ae00">01</text><rect x="21.32" y="290.09" width="1.1" height="1.1" fill="#070e07"/><rect x="26.86" y="290.09" width="1.1" height="1.1" fill="#070e07"/><rect x="32.39" y="290.09" width="1.1" height="1.1" fill="#070e07"/><rect x="40.14" y="290.09" width="1.1" height="1.1" fill="#070e07"/><rect x="45.68" y="290.09" width="1.1" height="1.1" fill="#070e07"/><rect x="53.43" y="290.09" width="1.1" height="1.1" fill="#070e07"/><rect x="61.18" y="290.09" width="1.1" height="1.1" fill="#070e07"/><rect x="66.71" y="290.09" width="1.1" height="1.1" fill="#070e07"/><rect x="72.25" y="290.09" width="1.1" height="1.1" fill="#070e07"/><rect x="80.00" y="290.09" width="1.1" height="1.1" fill="#070e07"/><rect x="85.53" y="290.09" width="1.1" height="1.1" fill="#070e07"/><rect x="91.07" y="290.09" width="1.1" height="1.1" fill="#070e07"/><rect x="98.81" y="290.09" width="1.1" height="1.1" fill="#070e07"/><rect x="104.35" y="290.09" width="1.1" height="1.1" fill="#070e07"/><rect x="109.88" y="290.09" width="1.1" height="1.1" fill="#070e07"/><rect x="117.63" y="290.09" width="1.1" height="1.1" fill="#070e07"/><rect x="123.17" y="290.09" width="1.1" height="1.1" fill="#070e07"/><rect x="128.70" y="290.09" width="1.1" height="1.1" fill="#070e07"/><rect x="138.12" y="290.09" width="1.1" height="1.1" fill="#070e07"/><rect x="143.66" y="290.09" width="1.1" height="1.1" fill="#070e07"/><rect x="149.19" y="290.09" width="1.1" height="1.1" fill="#070e07"/><rect x="156.94" y="290.09" width="1.1" height="1.1" fill="#070e07"/><rect x="162.48" y="290.09" width="1.1" height="1.1" fill="#070e07"/><rect x="196.80" y="290.09" width="1.1" height="1.1" fill="#070e07"/><rect x="202.33" y="290.09" width="1.1" height="1.1" fill="#070e07"/><rect x="207.87" y="290.09" width="1.1" height="1.1" fill="#070e07"/><rect x="215.61" y="290.09" width="1.1" height="1.1" fill="#070e07"/><rect x="221.15" y="290.09" width="1.1" height="1.1" fill="#070e07"/><rect x="226.68" y="290.09" width="1.1" height="1.1" fill="#070e07"/><rect x="234.43" y="290.09" width="1.1" height="1.1" fill="#070e07"/><rect x="239.97" y="290.09" width="1.1" height="1.1" fill="#070e07"/><rect x="245.50" y="290.09" width="1.1" height="1.1" fill="#070e07"/><rect x="257.14" y="289.69" width="10.63" height="1.8" fill="#004a00"/><rect x="273.74" y="290.09" width="1.1" height="1.1" fill="#070e07"/><rect x="279.28" y="290.09" width="1.1" height="1.1" fill="#070e07"/><rect x="287.03" y="290.09" width="1.1" height="1.1" fill="#070e07"/><rect x="314.72" y="290.09" width="1.1" height="1.1" fill="#070e07"/><rect x="320.26" y="290.09" width="1.1" height="1.1" fill="#070e07"/><rect x="325.79" y="290.09" width="1.1" height="1.1" fill="#070e07"/><rect x="333.54" y="290.09" width="1.1" height="1.1" fill="#070e07"/><rect x="339.08" y="290.09" width="1.1" height="1.1" fill="#070e07"/><rect x="346.83" y="290.09" width="1.1" height="1.1" fill="#070e07"/><rect x="354.58" y="290.09" width="1.1" height="1.1" fill="#070e07"/><rect x="360.11" y="290.09" width="1.1" height="1.1" fill="#070e07"/><rect x="365.65" y="290.09" width="1.1" height="1.1" fill="#070e07"/><rect x="374.42" y="290.09" width="1.1" height="1.1" fill="#070e07"/><rect x="379.96" y="290.09" width="1.1" height="1.1" fill="#070e07"/><rect x="385.49" y="290.09" width="1.1" height="1.1" fill="#070e07"/><rect x="393.24" y="290.09" width="1.1" height="1.1" fill="#070e07"/><rect x="398.78" y="290.09" width="1.1" height="1.1" fill="#070e07"/><rect x="406.53" y="290.09" width="1.1" height="1.1" fill="#070e07"/><rect x="414.28" y="290.09" width="1.1" height="1.1" fill="#070e07"/><rect x="419.81" y="290.09" width="1.1" height="1.1" fill="#070e07"/><rect x="425.35" y="290.09" width="1.1" height="1.1" fill="#070e07"/><text class="rn" transform="scale(0.75 1)" x="10.13 16.00" y="300.36" fill="#00ae00" stroke="#00ae00">02</text><rect x="21.32" y="296.76" width="1.1" height="1.1" fill="#070e07"/><rect x="26.86" y="296.76" width="1.1" height="1.1" fill="#070e07"/><rect x="32.39" y="296.76" width="1.1" height="1.1" fill="#070e07"/><rect x="40.14" y="296.76" width="1.1" height="1.1" fill="#070e07"/><rect x="45.68" y="296.76" width="1.1" height="1.1" fill="#070e07"/><rect x="53.43" y="296.76" width="1.1" height="1.1" fill="#070e07"/><rect x="98.81" y="296.76" width="1.1" height="1.1" fill="#070e07"/><rect x="104.35" y="296.76" width="1.1" height="1.1" fill="#070e07"/><rect x="109.88" y="296.76" width="1.1" height="1.1" fill="#070e07"/><rect x="117.63" y="296.76" width="1.1" height="1.1" fill="#070e07"/><rect x="123.17" y="296.76" width="1.1" height="1.1" fill="#070e07"/><rect x="128.70" y="296.76" width="1.1" height="1.1" fill="#070e07"/><rect x="177.98" y="296.76" width="1.1" height="1.1" fill="#070e07"/><rect x="183.51" y="296.76" width="1.1" height="1.1" fill="#070e07"/><rect x="189.05" y="296.76" width="1.1" height="1.1" fill="#070e07"/><rect x="196.80" y="296.76" width="1.1" height="1.1" fill="#070e07"/><rect x="202.33" y="296.76" width="1.1" height="1.1" fill="#070e07"/><rect x="207.87" y="296.76" width="1.1" height="1.1" fill="#070e07"/><rect x="215.61" y="296.76" width="1.1" height="1.1" fill="#070e07"/><rect x="221.15" y="296.76" width="1.1" height="1.1" fill="#070e07"/><rect x="226.68" y="296.76" width="1.1" height="1.1" fill="#070e07"/><rect x="234.43" y="296.76" width="1.1" height="1.1" fill="#070e07"/><rect x="239.97" y="296.76" width="1.1" height="1.1" fill="#070e07"/><rect x="245.50" y="296.76" width="1.1" height="1.1" fill="#070e07"/><rect x="287.03" y="296.76" width="1.1" height="1.1" fill="#070e07"/><rect x="294.78" y="296.76" width="1.1" height="1.1" fill="#070e07"/><rect x="300.31" y="296.76" width="1.1" height="1.1" fill="#070e07"/><rect x="305.85" y="296.76" width="1.1" height="1.1" fill="#070e07"/><rect x="314.72" y="296.76" width="1.1" height="1.1" fill="#070e07"/><rect x="320.26" y="296.76" width="1.1" height="1.1" fill="#070e07"/><rect x="325.79" y="296.76" width="1.1" height="1.1" fill="#070e07"/><rect x="333.54" y="296.76" width="1.1" height="1.1" fill="#070e07"/><rect x="339.08" y="296.76" width="1.1" height="1.1" fill="#070e07"/><rect x="346.83" y="296.76" width="1.1" height="1.1" fill="#070e07"/><rect x="354.58" y="296.76" width="1.1" height="1.1" fill="#070e07"/><rect x="360.11" y="296.76" width="1.1" height="1.1" fill="#070e07"/><rect x="365.65" y="296.76" width="1.1" height="1.1" fill="#070e07"/><rect x="374.42" y="296.76" width="1.1" height="1.1" fill="#070e07"/><rect x="379.96" y="296.76" width="1.1" height="1.1" fill="#070e07"/><rect x="385.49" y="296.76" width="1.1" height="1.1" fill="#070e07"/><rect x="393.24" y="296.76" width="1.1" height="1.1" fill="#070e07"/><rect x="398.78" y="296.76" width="1.1" height="1.1" fill="#070e07"/><rect x="406.53" y="296.76" width="1.1" height="1.1" fill="#070e07"/><rect x="414.28" y="296.76" width="1.1" height="1.1" fill="#070e07"/><rect x="419.81" y="296.76" width="1.1" height="1.1" fill="#070e07"/><rect x="425.35" y="296.76" width="1.1" height="1.1" fill="#070e07"/><text class="rn" transform="scale(0.75 1)" x="10.13 16.00" y="307.04" fill="#00ae00" stroke="#00ae00">03</text><rect x="21.32" y="303.44" width="1.1" height="1.1" fill="#070e07"/><rect x="26.86" y="303.44" width="1.1" height="1.1" fill="#070e07"/><rect x="32.39" y="303.44" width="1.1" height="1.1" fill="#070e07"/><rect x="40.14" y="303.44" width="1.1" height="1.1" fill="#070e07"/><rect x="45.68" y="303.44" width="1.1" height="1.1" fill="#070e07"/><rect x="53.43" y="303.44" width="1.1" height="1.1" fill="#070e07"/><rect x="61.18" y="303.44" width="1.1" height="1.1" fill="#070e07"/><rect x="66.71" y="303.44" width="1.1" height="1.1" fill="#070e07"/><rect x="72.25" y="303.44" width="1.1" height="1.1" fill="#070e07"/><rect x="80.00" y="303.44" width="1.1" height="1.1" fill="#070e07"/><rect x="85.53" y="303.44" width="1.1" height="1.1" fill="#070e07"/><rect x="91.07" y="303.44" width="1.1" height="1.1" fill="#070e07"/><rect x="98.81" y="303.44" width="1.1" height="1.1" fill="#070e07"/><rect x="104.35" y="303.44" width="1.1" height="1.1" fill="#070e07"/><rect x="109.88" y="303.44" width="1.1" height="1.1" fill="#070e07"/><rect x="117.63" y="303.44" width="1.1" height="1.1" fill="#070e07"/><rect x="123.17" y="303.44" width="1.1" height="1.1" fill="#070e07"/><rect x="128.70" y="303.44" width="1.1" height="1.1" fill="#070e07"/><rect x="138.12" y="303.44" width="1.1" height="1.1" fill="#070e07"/><rect x="143.66" y="303.44" width="1.1" height="1.1" fill="#070e07"/><rect x="149.19" y="303.44" width="1.1" height="1.1" fill="#070e07"/><rect x="156.94" y="303.44" width="1.1" height="1.1" fill="#070e07"/><rect x="162.48" y="303.44" width="1.1" height="1.1" fill="#070e07"/><rect x="196.80" y="303.44" width="1.1" height="1.1" fill="#070e07"/><rect x="202.33" y="303.44" width="1.1" height="1.1" fill="#070e07"/><rect x="207.87" y="303.44" width="1.1" height="1.1" fill="#070e07"/><rect x="215.61" y="303.44" width="1.1" height="1.1" fill="#070e07"/><rect x="221.15" y="303.44" width="1.1" height="1.1" fill="#070e07"/><rect x="226.68" y="303.44" width="1.1" height="1.1" fill="#070e07"/><rect x="234.43" y="303.44" width="1.1" height="1.1" fill="#070e07"/><rect x="239.97" y="303.44" width="1.1" height="1.1" fill="#070e07"/><rect x="245.50" y="303.44" width="1.1" height="1.1" fill="#070e07"/><rect x="257.14" y="303.03" width="10.63" height="1.8" fill="#004a00"/><rect x="273.74" y="303.44" width="1.1" height="1.1" fill="#070e07"/><rect x="279.28" y="303.44" width="1.1" height="1.1" fill="#070e07"/><rect x="287.03" y="303.44" width="1.1" height="1.1" fill="#070e07"/><rect x="314.72" y="303.44" width="1.1" height="1.1" fill="#070e07"/><rect x="320.26" y="303.44" width="1.1" height="1.1" fill="#070e07"/><rect x="325.79" y="303.44" width="1.1" height="1.1" fill="#070e07"/><rect x="333.54" y="303.44" width="1.1" height="1.1" fill="#070e07"/><rect x="339.08" y="303.44" width="1.1" height="1.1" fill="#070e07"/><rect x="346.83" y="303.44" width="1.1" height="1.1" fill="#070e07"/><rect x="354.58" y="303.44" width="1.1" height="1.1" fill="#070e07"/><rect x="360.11" y="303.44" width="1.1" height="1.1" fill="#070e07"/><rect x="365.65" y="303.44" width="1.1" height="1.1" fill="#070e07"/><rect x="374.42" y="303.44" width="1.1" height="1.1" fill="#070e07"/><rect x="379.96" y="303.44" width="1.1" height="1.1" fill="#070e07"/><rect x="385.49" y="303.44" width="1.1" height="1.1" fill="#070e07"/><rect x="393.24" y="303.44" width="1.1" height="1.1" fill="#070e07"/><rect x="398.78" y="303.44" width="1.1" height="1.1" fill="#070e07"/><rect x="406.53" y="303.44" width="1.1" height="1.1" fill="#070e07"/><rect x="414.28" y="303.44" width="1.1" height="1.1" fill="#070e07"/><rect x="419.81" y="303.44" width="1.1" height="1.1" fill="#070e07"/><rect x="425.35" y="303.44" width="1.1" height="1.1" fill="#070e07"/><text class="rn" transform="scale(0.75 1)" x="10.13 16.00" y="313.71" fill="#aeae00" stroke="#aeae00">04</text><rect x="21.32" y="310.11" width="1.1" height="1.1" fill="#19190a"/><rect x="26.86" y="310.11" width="1.1" height="1.1" fill="#19190a"/><rect x="32.39" y="310.11" width="1.1" height="1.1" fill="#19190a"/><rect x="40.14" y="310.11" width="1.1" height="1.1" fill="#19190a"/><rect x="45.68" y="310.11" width="1.1" height="1.1" fill="#19190a"/><rect x="53.43" y="310.11" width="1.1" height="1.1" fill="#19190a"/><rect x="61.18" y="310.11" width="1.1" height="1.1" fill="#19190a"/><rect x="66.71" y="310.11" width="1.1" height="1.1" fill="#19190a"/><rect x="72.25" y="310.11" width="1.1" height="1.1" fill="#19190a"/><rect x="80.00" y="310.11" width="1.1" height="1.1" fill="#19190a"/><rect x="85.53" y="310.11" width="1.1" height="1.1" fill="#19190a"/><rect x="91.07" y="310.11" width="1.1" height="1.1" fill="#19190a"/><rect x="98.81" y="310.11" width="1.1" height="1.1" fill="#19190a"/><rect x="104.35" y="310.11" width="1.1" height="1.1" fill="#19190a"/><rect x="109.88" y="310.11" width="1.1" height="1.1" fill="#19190a"/><rect x="117.63" y="310.11" width="1.1" height="1.1" fill="#19190a"/><rect x="123.17" y="310.11" width="1.1" height="1.1" fill="#19190a"/><rect x="128.70" y="310.11" width="1.1" height="1.1" fill="#19190a"/><rect x="177.98" y="310.11" width="1.1" height="1.1" fill="#19190a"/><rect x="183.51" y="310.11" width="1.1" height="1.1" fill="#19190a"/><rect x="189.05" y="310.11" width="1.1" height="1.1" fill="#19190a"/><rect x="196.80" y="310.11" width="1.1" height="1.1" fill="#19190a"/><rect x="202.33" y="310.11" width="1.1" height="1.1" fill="#19190a"/><rect x="207.87" y="310.11" width="1.1" height="1.1" fill="#19190a"/><rect x="215.61" y="310.11" width="1.1" height="1.1" fill="#19190a"/><rect x="221.15" y="310.11" width="1.1" height="1.1" fill="#19190a"/><rect x="226.68" y="310.11" width="1.1" height="1.1" fill="#19190a"/><rect x="234.43" y="310.11" width="1.1" height="1.1" fill="#19190a"/><rect x="239.97" y="310.11" width="1.1" height="1.1" fill="#19190a"/><rect x="245.50" y="310.11" width="1.1" height="1.1" fill="#19190a"/><rect x="287.03" y="310.11" width="1.1" height="1.1" fill="#19190a"/><rect x="294.78" y="310.11" width="1.1" height="1.1" fill="#19190a"/><rect x="300.31" y="310.11" width="1.1" height="1.1" fill="#19190a"/><rect x="305.85" y="310.11" width="1.1" height="1.1" fill="#19190a"/><rect x="314.72" y="310.11" width="1.1" height="1.1" fill="#19190a"/><rect x="320.26" y="310.11" width="1.1" height="1.1" fill="#19190a"/><rect x="325.79" y="310.11" width="1.1" height="1.1" fill="#19190a"/><rect x="333.54" y="310.11" width="1.1" height="1.1" fill="#19190a"/><rect x="339.08" y="310.11" width="1.1" height="1.1" fill="#19190a"/><rect x="346.83" y="310.11" width="1.1" height="1.1" fill="#19190a"/><rect x="354.58" y="310.11" width="1.1" height="1.1" fill="#19190a"/><rect x="360.11" y="310.11" width="1.1" height="1.1" fill="#19190a"/><rect x="365.65" y="310.11" width="1.1" height="1.1" fill="#19190a"/><rect x="374.42" y="310.11" width="1.1" height="1.1" fill="#19190a"/><rect x="379.96" y="310.11" width="1.1" height="1.1" fill="#19190a"/><rect x="385.49" y="310.11" width="1.1" height="1.1" fill="#19190a"/><rect x="393.24" y="310.11" width="1.1" height="1.1" fill="#19190a"/><rect x="398.78" y="310.11" width="1.1" height="1.1" fill="#19190a"/><rect x="406.53" y="310.11" width="1.1" height="1.1" fill="#19190a"/><rect x="414.28" y="310.11" width="1.1" height="1.1" fill="#19190a"/><rect x="419.81" y="310.11" width="1.1" height="1.1" fill="#19190a"/><rect x="425.35" y="310.11" width="1.1" height="1.1" fill="#19190a"/><text class="rn" transform="scale(0.75 1)" x="10.13 16.00" y="320.38" fill="#00ae00" stroke="#00ae00">05</text><rect x="21.32" y="316.78" width="1.1" height="1.1" fill="#070e07"/><rect x="26.86" y="316.78" width="1.1" height="1.1" fill="#070e07"/><rect x="32.39" y="316.78" width="1.1" height="1.1" fill="#070e07"/><rect x="40.14" y="316.78" width="1.1" height="1.1" fill="#070e07"/><rect x="45.68" y="316.78" width="1.1" height="1.1" fill="#070e07"/><rect x="53.43" y="316.78" width="1.1" height="1.1" fill="#070e07"/><rect x="61.18" y="316.78" width="1.1" height="1.1" fill="#070e07"/><rect x="66.71" y="316.78" width="1.1" height="1.1" fill="#070e07"/><rect x="72.25" y="316.78" width="1.1" height="1.1" fill="#070e07"/><rect x="80.00" y="316.78" width="1.1" height="1.1" fill="#070e07"/><rect x="85.53" y="316.78" width="1.1" height="1.1" fill="#070e07"/><rect x="91.07" y="316.78" width="1.1" height="1.1" fill="#070e07"/><rect x="98.81" y="316.78" width="1.1" height="1.1" fill="#070e07"/><rect x="104.35" y="316.78" width="1.1" height="1.1" fill="#070e07"/><rect x="109.88" y="316.78" width="1.1" height="1.1" fill="#070e07"/><rect x="117.63" y="316.78" width="1.1" height="1.1" fill="#070e07"/><rect x="123.17" y="316.78" width="1.1" height="1.1" fill="#070e07"/><rect x="128.70" y="316.78" width="1.1" height="1.1" fill="#070e07"/><rect x="138.12" y="316.78" width="1.1" height="1.1" fill="#070e07"/><rect x="143.66" y="316.78" width="1.1" height="1.1" fill="#070e07"/><rect x="149.19" y="316.78" width="1.1" height="1.1" fill="#070e07"/><rect x="156.94" y="316.78" width="1.1" height="1.1" fill="#070e07"/><rect x="162.48" y="316.78" width="1.1" height="1.1" fill="#070e07"/><rect x="196.80" y="316.78" width="1.1" height="1.1" fill="#070e07"/><rect x="202.33" y="316.78" width="1.1" height="1.1" fill="#070e07"/><rect x="207.87" y="316.78" width="1.1" height="1.1" fill="#070e07"/><rect x="215.61" y="316.78" width="1.1" height="1.1" fill="#070e07"/><rect x="221.15" y="316.78" width="1.1" height="1.1" fill="#070e07"/><rect x="226.68" y="316.78" width="1.1" height="1.1" fill="#070e07"/><rect x="234.43" y="316.78" width="1.1" height="1.1" fill="#070e07"/><rect x="239.97" y="316.78" width="1.1" height="1.1" fill="#070e07"/><rect x="245.50" y="316.78" width="1.1" height="1.1" fill="#070e07"/><rect x="257.14" y="316.38" width="10.63" height="1.8" fill="#004a00"/><rect x="273.74" y="316.78" width="1.1" height="1.1" fill="#070e07"/><rect x="279.28" y="316.78" width="1.1" height="1.1" fill="#070e07"/><rect x="287.03" y="316.78" width="1.1" height="1.1" fill="#070e07"/><rect x="314.72" y="316.78" width="1.1" height="1.1" fill="#070e07"/><rect x="320.26" y="316.78" width="1.1" height="1.1" fill="#070e07"/><rect x="325.79" y="316.78" width="1.1" height="1.1" fill="#070e07"/><rect x="333.54" y="316.78" width="1.1" height="1.1" fill="#070e07"/><rect x="339.08" y="316.78" width="1.1" height="1.1" fill="#070e07"/><rect x="346.83" y="316.78" width="1.1" height="1.1" fill="#070e07"/><rect x="354.58" y="316.78" width="1.1" height="1.1" fill="#070e07"/><rect x="360.11" y="316.78" width="1.1" height="1.1" fill="#070e07"/><rect x="365.65" y="316.78" width="1.1" height="1.1" fill="#070e07"/><rect x="374.42" y="316.78" width="1.1" height="1.1" fill="#070e07"/><rect x="379.96" y="316.78" width="1.1" height="1.1" fill="#070e07"/><rect x="385.49" y="316.78" width="1.1" height="1.1" fill="#070e07"/><rect x="393.24" y="316.78" width="1.1" height="1.1" fill="#070e07"/><rect x="398.78" y="316.78" width="1.1" height="1.1" fill="#070e07"/><rect x="406.53" y="316.78" width="1.1" height="1.1" fill="#070e07"/><rect x="414.28" y="316.78" width="1.1" height="1.1" fill="#070e07"/><rect x="419.81" y="316.78" width="1.1" height="1.1" fill="#070e07"/><rect x="425.35" y="316.78" width="1.1" height="1.1" fill="#070e07"/><text class="rn" transform="scale(0.75 1)" x="10.13 16.00" y="327.05" fill="#00ae00" stroke="#00ae00">06</text><rect x="138.12" y="323.45" width="1.1" height="1.1" fill="#070e07"/><rect x="143.66" y="323.45" width="1.1" height="1.1" fill="#070e07"/><rect x="149.19" y="323.45" width="1.1" height="1.1" fill="#070e07"/><rect x="156.94" y="323.45" width="1.1" height="1.1" fill="#070e07"/><rect x="162.48" y="323.45" width="1.1" height="1.1" fill="#070e07"/><rect x="170.23" y="323.45" width="1.1" height="1.1" fill="#070e07"/><rect x="177.98" y="323.45" width="1.1" height="1.1" fill="#070e07"/><rect x="183.51" y="323.45" width="1.1" height="1.1" fill="#070e07"/><rect x="189.05" y="323.45" width="1.1" height="1.1" fill="#070e07"/><rect x="196.80" y="323.45" width="1.1" height="1.1" fill="#070e07"/><rect x="202.33" y="323.45" width="1.1" height="1.1" fill="#070e07"/><rect x="207.87" y="323.45" width="1.1" height="1.1" fill="#070e07"/><rect x="215.61" y="323.45" width="1.1" height="1.1" fill="#070e07"/><rect x="221.15" y="323.45" width="1.1" height="1.1" fill="#070e07"/><rect x="226.68" y="323.45" width="1.1" height="1.1" fill="#070e07"/><rect x="234.43" y="323.45" width="1.1" height="1.1" fill="#070e07"/><rect x="239.97" y="323.45" width="1.1" height="1.1" fill="#070e07"/><rect x="245.50" y="323.45" width="1.1" height="1.1" fill="#070e07"/><rect x="254.92" y="323.45" width="1.1" height="1.1" fill="#070e07"/><rect x="260.46" y="323.45" width="1.1" height="1.1" fill="#070e07"/><rect x="265.99" y="323.45" width="1.1" height="1.1" fill="#070e07"/><rect x="273.74" y="323.45" width="1.1" height="1.1" fill="#070e07"/><rect x="279.28" y="323.45" width="1.1" height="1.1" fill="#070e07"/><rect x="287.03" y="323.45" width="1.1" height="1.1" fill="#070e07"/><rect x="294.78" y="323.45" width="1.1" height="1.1" fill="#070e07"/><rect x="300.31" y="323.45" width="1.1" height="1.1" fill="#070e07"/><rect x="305.85" y="323.45" width="1.1" height="1.1" fill="#070e07"/><rect x="354.58" y="323.45" width="1.1" height="1.1" fill="#070e07"/><rect x="360.11" y="323.45" width="1.1" height="1.1" fill="#070e07"/><rect x="365.65" y="323.45" width="1.1" height="1.1" fill="#070e07"/><rect x="374.42" y="323.45" width="1.1" height="1.1" fill="#070e07"/><rect x="379.96" y="323.45" width="1.1" height="1.1" fill="#070e07"/><rect x="385.49" y="323.45" width="1.1" height="1.1" fill="#070e07"/><rect x="393.24" y="323.45" width="1.1" height="1.1" fill="#070e07"/><rect x="398.78" y="323.45" width="1.1" height="1.1" fill="#070e07"/><rect x="406.53" y="323.45" width="1.1" height="1.1" fill="#070e07"/><rect x="414.28" y="323.45" width="1.1" height="1.1" fill="#070e07"/><rect x="419.81" y="323.45" width="1.1" height="1.1" fill="#070e07"/><rect x="425.35" y="323.45" width="1.1" height="1.1" fill="#070e07"/><text class="rn" transform="scale(0.75 1)" x="10.13 16.00" y="333.73" fill="#00ae00" stroke="#00ae00">07</text><rect x="21.32" y="330.13" width="1.1" height="1.1" fill="#070e07"/><rect x="26.86" y="330.13" width="1.1" height="1.1" fill="#070e07"/><rect x="32.39" y="330.13" width="1.1" height="1.1" fill="#070e07"/><rect x="40.14" y="330.13" width="1.1" height="1.1" fill="#070e07"/><rect x="45.68" y="330.13" width="1.1" height="1.1" fill="#070e07"/><rect x="53.43" y="330.13" width="1.1" height="1.1" fill="#070e07"/><rect x="61.18" y="330.13" width="1.1" height="1.1" fill="#070e07"/><rect x="66.71" y="330.13" width="1.1" height="1.1" fill="#070e07"/><rect x="72.25" y="330.13" width="1.1" height="1.1" fill="#070e07"/><rect x="80.00" y="330.13" width="1.1" height="1.1" fill="#070e07"/><rect x="85.53" y="330.13" width="1.1" height="1.1" fill="#070e07"/><rect x="91.07" y="330.13" width="1.1" height="1.1" fill="#070e07"/><rect x="98.81" y="330.13" width="1.1" height="1.1" fill="#070e07"/><rect x="104.35" y="330.13" width="1.1" height="1.1" fill="#070e07"/><rect x="109.88" y="330.13" width="1.1" height="1.1" fill="#070e07"/><rect x="117.63" y="330.13" width="1.1" height="1.1" fill="#070e07"/><rect x="123.17" y="330.13" width="1.1" height="1.1" fill="#070e07"/><rect x="128.70" y="330.13" width="1.1" height="1.1" fill="#070e07"/><rect x="138.12" y="330.13" width="1.1" height="1.1" fill="#070e07"/><rect x="143.66" y="330.13" width="1.1" height="1.1" fill="#070e07"/><rect x="149.19" y="330.13" width="1.1" height="1.1" fill="#070e07"/><rect x="156.94" y="330.13" width="1.1" height="1.1" fill="#070e07"/><rect x="162.48" y="330.13" width="1.1" height="1.1" fill="#070e07"/><rect x="170.23" y="330.13" width="1.1" height="1.1" fill="#070e07"/><rect x="177.98" y="330.13" width="1.1" height="1.1" fill="#070e07"/><rect x="183.51" y="330.13" width="1.1" height="1.1" fill="#070e07"/><rect x="189.05" y="330.13" width="1.1" height="1.1" fill="#070e07"/><rect x="196.80" y="330.13" width="1.1" height="1.1" fill="#070e07"/><rect x="202.33" y="330.13" width="1.1" height="1.1" fill="#070e07"/><rect x="207.87" y="330.13" width="1.1" height="1.1" fill="#070e07"/><rect x="215.61" y="330.13" width="1.1" height="1.1" fill="#070e07"/><rect x="221.15" y="330.13" width="1.1" height="1.1" fill="#070e07"/><rect x="226.68" y="330.13" width="1.1" height="1.1" fill="#070e07"/><rect x="234.43" y="330.13" width="1.1" height="1.1" fill="#070e07"/><rect x="239.97" y="330.13" width="1.1" height="1.1" fill="#070e07"/><rect x="245.50" y="330.13" width="1.1" height="1.1" fill="#070e07"/><rect x="254.92" y="330.13" width="1.1" height="1.1" fill="#070e07"/><rect x="260.46" y="330.13" width="1.1" height="1.1" fill="#070e07"/><rect x="265.99" y="330.13" width="1.1" height="1.1" fill="#070e07"/><rect x="273.74" y="330.13" width="1.1" height="1.1" fill="#070e07"/><rect x="279.28" y="330.13" width="1.1" height="1.1" fill="#070e07"/><rect x="287.03" y="330.13" width="1.1" height="1.1" fill="#070e07"/><rect x="294.78" y="330.13" width="1.1" height="1.1" fill="#070e07"/><rect x="300.31" y="330.13" width="1.1" height="1.1" fill="#070e07"/><rect x="305.85" y="330.13" width="1.1" height="1.1" fill="#070e07"/><rect x="314.72" y="330.13" width="1.1" height="1.1" fill="#070e07"/><rect x="320.26" y="330.13" width="1.1" height="1.1" fill="#070e07"/><rect x="325.79" y="330.13" width="1.1" height="1.1" fill="#070e07"/><rect x="333.54" y="330.13" width="1.1" height="1.1" fill="#070e07"/><rect x="339.08" y="330.13" width="1.1" height="1.1" fill="#070e07"/><rect x="346.83" y="330.13" width="1.1" height="1.1" fill="#070e07"/><rect x="354.58" y="330.13" width="1.1" height="1.1" fill="#070e07"/><rect x="360.11" y="330.13" width="1.1" height="1.1" fill="#070e07"/><rect x="365.65" y="330.13" width="1.1" height="1.1" fill="#070e07"/><rect x="374.42" y="330.13" width="1.1" height="1.1" fill="#070e07"/><rect x="379.96" y="330.13" width="1.1" height="1.1" fill="#070e07"/><rect x="385.49" y="330.13" width="1.1" height="1.1" fill="#070e07"/><rect x="393.24" y="330.13" width="1.1" height="1.1" fill="#070e07"/><rect x="398.78" y="330.13" width="1.1" height="1.1" fill="#070e07"/><rect x="406.53" y="330.13" width="1.1" height="1.1" fill="#070e07"/><rect x="414.28" y="330.13" width="1.1" height="1.1" fill="#070e07"/><rect x="419.81" y="330.13" width="1.1" height="1.1" fill="#070e07"/><rect x="425.35" y="330.13" width="1.1" height="1.1" fill="#070e07"/><text x="61.73" y="6.15" fill="#d06a6a" stroke="#d06a6a">A</text><text x="67.26 72.80" y="6.15" fill="#00cd00" stroke="#00cd00">02</text><text x="80.55" y="6.15" fill="#d06a6a" stroke="#d06a6a">4</text><text x="86.08 91.62" y="6.15" fill="#00cd00" stroke="#00cd00">72</text><text x="170.78" y="12.82" fill="#6a6ad4" stroke="#6a6ad4">2</text><text x="178.53" y="12.82" fill="#d06a6a" stroke="#d06a6a">G</text><text x="184.06 189.60" y="12.82" fill="#00cd00" stroke="#00cd00">02</text><text x="295.33" y="12.82" fill="#d06a6a" stroke="#d06a6a">G</text><text x="300.86 306.40" y="12.82" fill="#00cd00" stroke="#00cd00">02</text><text x="138.67 144.21 149.74" y="19.50" fill="#cdcd00" stroke="#cdcd00">F#3</text><text x="157.49 163.03" y="19.50" fill="#80c880" stroke="#80c880">00</text><text x="170.78" y="19.50" fill="#6a6ad4" stroke="#6a6ad4">8</text><text x="178.53" y="19.50" fill="#d06a6a" stroke="#d06a6a">4</text><text x="184.06 189.60" y="19.50" fill="#cdcd00" stroke="#cdcd00">00</text><text x="255.47 261.01 266.54" y="19.50" fill="#cdcd00" stroke="#cdcd00">D-3</text><text x="274.29 279.83" y="19.50" fill="#80c880" stroke="#80c880">00</text><text x="315.27 320.81 326.34" y="19.50" fill="#cdcd00" stroke="#cdcd00">7-#</text><text x="334.09 339.63" y="19.50" fill="#80c880" stroke="#80c880">00</text><text x="347.38" y="19.50" fill="#6a6ad4" stroke="#6a6ad4">A</text><text x="355.13" y="19.50" fill="#d06a6a" stroke="#d06a6a">A</text><text x="360.66 366.20" y="19.50" fill="#cdcd00" stroke="#cdcd00">07</text><text x="374.97 380.51 386.04" y="19.50" fill="#cdcd00" stroke="#cdcd00">C#3</text><text x="393.79 399.33" y="19.50" fill="#80c880" stroke="#80c880">01</text><text x="414.83" y="19.50" fill="#d06a6a" stroke="#d06a6a">Z</text><text x="420.36 425.90" y="19.50" fill="#cdcd00" stroke="#cdcd00">00</text><text x="170.78" y="26.17" fill="#6a6ad4" stroke="#6a6ad4">2</text><text x="178.53" y="26.17" fill="#d06a6a" stroke="#d06a6a">G</text><text x="184.06 189.60" y="26.17" fill="#00cd00" stroke="#00cd00">02</text><text x="295.33" y="26.17" fill="#d06a6a" stroke="#d06a6a">G</text><text x="300.86 306.40" y="26.17" fill="#00cd00" stroke="#00cd00">02</text><text x="21.87 27.41 32.94" y="32.84" fill="#00cd00" stroke="#00cd00">E-5</text><text x="40.69 46.23" y="32.84" fill="#80c880" stroke="#80c880">02</text><text x="53.98" y="32.84" fill="#6a6ad4" stroke="#6a6ad4">A</text><text x="61.73" y="32.84" fill="#d06a6a" stroke="#d06a6a">A</text><text x="67.26 72.80" y="32.84" fill="#00cd00" stroke="#00cd00">00</text><text x="80.55" y="32.84" fill="#d06a6a" stroke="#d06a6a">4</text><text x="86.08 91.62" y="32.84" fill="#00cd00" stroke="#00cd00">00</text><text x="138.67 144.21 149.74" y="32.84" fill="#00cd00" stroke="#00cd00">E-3</text><text x="157.49 163.03" y="32.84" fill="#80c880" stroke="#80c880">00</text><text x="170.78" y="32.84" fill="#6a6ad4" stroke="#6a6ad4">8</text><text x="255.47 261.01 266.54" y="32.84" fill="#00cd00" stroke="#00cd00">D-4</text><text x="274.29 279.83" y="32.84" fill="#80c880" stroke="#80c880">00</text><text x="170.78" y="39.52" fill="#6a6ad4" stroke="#6a6ad4">2</text><text x="178.53" y="39.52" fill="#d06a6a" stroke="#d06a6a">G</text><text x="184.06 189.60" y="39.52" fill="#00cd00" stroke="#00cd00">02</text><text x="21.87 27.41 32.94" y="46.19" fill="#cdcd00" stroke="#cdcd00">D-5</text><text x="40.69 46.23" y="46.19" fill="#80c880" stroke="#80c880">02</text><text x="138.67 144.21 149.74" y="46.19" fill="#cdcd00" stroke="#cdcd00">D-3</text><text x="157.49 163.03" y="46.19" fill="#80c880" stroke="#80c880">00</text><text x="170.78" y="46.19" fill="#6a6ad4" stroke="#6a6ad4">8</text><text x="315.27 320.81 326.34" y="46.19" fill="#cdcd00" stroke="#cdcd00">D-#</text><text x="334.09 339.63" y="46.19" fill="#80c880" stroke="#80c880">00</text><text x="347.38" y="46.19" fill="#6a6ad4" stroke="#6a6ad4">8</text><text x="374.97 380.51 386.04" y="46.19" fill="#cdcd00" stroke="#cdcd00">C-3</text><text x="393.79 399.33" y="46.19" fill="#80c880" stroke="#80c880">01</text><text x="414.83" y="46.19" fill="#d06a6a" stroke="#d06a6a">Z</text><text x="420.36 425.90" y="46.19" fill="#cdcd00" stroke="#cdcd00">00</text><text x="170.78" y="52.86" fill="#6a6ad4" stroke="#6a6ad4">2</text><text x="178.53" y="52.86" fill="#d06a6a" stroke="#d06a6a">G</text><text x="184.06 189.60" y="52.86" fill="#00cd00" stroke="#00cd00">02</text><text x="21.87 27.41 32.94" y="59.53" fill="#00cd00" stroke="#00cd00">B-4</text><text x="40.69 46.23" y="59.53" fill="#80c880" stroke="#80c880">02</text><text x="138.67 144.21 149.74" y="59.53" fill="#00cd00" stroke="#00cd00">G-2</text><text x="157.49 163.03" y="59.53" fill="#80c880" stroke="#80c880">00</text><text x="170.78" y="59.53" fill="#6a6ad4" stroke="#6a6ad4">8</text><text x="255.47 261.01 266.54" y="59.53" fill="#00cd00" stroke="#00cd00">D-3</text><text x="274.29 279.83" y="59.53" fill="#80c880" stroke="#80c880">00</text><text x="170.78" y="66.21" fill="#6a6ad4" stroke="#6a6ad4">2</text><text x="178.53" y="66.21" fill="#d06a6a" stroke="#d06a6a">G</text><text x="184.06 189.60" y="66.21" fill="#00cd00" stroke="#00cd00">02</text><text x="295.33" y="66.21" fill="#d06a6a" stroke="#d06a6a">G</text><text x="300.86 306.40" y="66.21" fill="#00cd00" stroke="#00cd00">02</text><text x="21.87 27.41 32.94" y="72.88" fill="#f0f082" stroke="#f0f082">F#5</text><text x="40.69 46.23" y="72.88" fill="#80c880" stroke="#80c880">02</text><text x="138.67 144.21 149.74" y="72.88" fill="#f0f082" stroke="#f0f082">F#2</text><text x="157.49 163.03" y="72.88" fill="#80c880" stroke="#80c880">00</text><text x="170.78" y="72.88" fill="#6a6ad4" stroke="#6a6ad4">8</text><text x="255.47 261.01 266.54" y="72.88" fill="#f0f082" stroke="#f0f082">E-3</text><text x="274.29 279.83" y="72.88" fill="#80c880" stroke="#80c880">00</text><text x="315.27 320.81 326.34" y="72.88" fill="#f0f082" stroke="#f0f082">D-#</text><text x="334.09 339.63" y="72.88" fill="#80c880" stroke="#80c880">00</text><text x="347.38" y="72.88" fill="#6a6ad4" stroke="#6a6ad4">8</text><text x="355.13" y="72.88" fill="#d06a6a" stroke="#d06a6a">A</text><text x="360.66 366.20" y="72.88" fill="#f0f082" stroke="#f0f082">0A</text><text x="374.97 380.51 386.04" y="72.88" fill="#f0f082" stroke="#f0f082">C-3</text><text x="393.79 399.33" y="72.88" fill="#80c880" stroke="#80c880">01</text><text x="414.83" y="72.88" fill="#d06a6a" stroke="#d06a6a">Z</text><text x="420.36 425.90" y="72.88" fill="#f0f082" stroke="#f0f082">00</text><text x="170.78" y="79.55" fill="#6a6ad4" stroke="#6a6ad4">2</text><text x="178.53" y="79.55" fill="#d06a6a" stroke="#d06a6a">G</text><text x="184.06 189.60" y="79.55" fill="#00cd00" stroke="#00cd00">02</text><text x="295.33" y="79.55" fill="#d06a6a" stroke="#d06a6a">G</text><text x="300.86 306.40" y="79.55" fill="#00cd00" stroke="#00cd00">02</text><text x="21.87 27.41 32.94" y="86.23" fill="#00cd00" stroke="#00cd00">F#5</text><text x="40.69 46.23" y="86.23" fill="#80c880" stroke="#80c880">02</text><text x="138.67 144.21 149.74" y="86.23" fill="#00cd00" stroke="#00cd00">A#2</text><text x="157.49 163.03" y="86.23" fill="#80c880" stroke="#80c880">00</text><text x="170.78" y="86.23" fill="#6a6ad4" stroke="#6a6ad4">8</text><text x="255.47 261.01 266.54" y="86.23" fill="#00cd00" stroke="#00cd00">E-3</text><text x="274.29 279.83" y="86.23" fill="#80c880" stroke="#80c880">00</text><text x="170.78" y="92.90" fill="#6a6ad4" stroke="#6a6ad4">2</text><text x="178.53" y="92.90" fill="#d06a6a" stroke="#d06a6a">G</text><text x="184.06 189.60" y="92.90" fill="#00cd00" stroke="#00cd00">02</text><text x="295.33" y="92.90" fill="#d06a6a" stroke="#d06a6a">G</text><text x="300.86 306.40" y="92.90" fill="#00cd00" stroke="#00cd00">02</text><text x="21.87 27.41 32.94" y="99.57" fill="#cdcd00" stroke="#cdcd00">B-3</text><text x="40.69 46.23" y="99.57" fill="#80c880" stroke="#80c880">00</text><text x="53.98" y="99.57" fill="#6a6ad4" stroke="#6a6ad4">4</text><text x="61.73" y="99.57" fill="#d06a6a" stroke="#d06a6a">V</text><text x="67.26 72.80" y="99.57" fill="#cdcd00" stroke="#cdcd00">00</text><text x="138.67 144.21 149.74" y="99.57" fill="#cdcd00" stroke="#cdcd00">C#3</text><text x="157.49 163.03" y="99.57" fill="#80c880" stroke="#80c880">00</text><text x="170.78" y="99.57" fill="#6a6ad4" stroke="#6a6ad4">8</text><text x="255.47 261.01 266.54" y="99.57" fill="#cdcd00" stroke="#cdcd00">E-3</text><text x="274.29 279.83" y="99.57" fill="#80c880" stroke="#80c880">00</text><text x="170.78" y="106.24" fill="#6a6ad4" stroke="#6a6ad4">2</text><text x="178.53" y="106.24" fill="#d06a6a" stroke="#d06a6a">G</text><text x="184.06 189.60" y="106.24" fill="#00cd00" stroke="#00cd00">02</text><text x="295.33" y="106.24" fill="#d06a6a" stroke="#d06a6a">G</text><text x="300.86 306.40" y="106.24" fill="#00cd00" stroke="#00cd00">02</text><text x="21.87 27.41 32.94" y="112.92" fill="#00cd00" stroke="#00cd00">E-5</text><text x="40.69 46.23" y="112.92" fill="#80c880" stroke="#80c880">02</text><text x="53.98" y="112.92" fill="#6a6ad4" stroke="#6a6ad4">A</text><text x="315.27 320.81 326.34" y="112.92" fill="#00cd00" stroke="#00cd00">D-#</text><text x="334.09 339.63" y="112.92" fill="#80c880" stroke="#80c880">00</text><text x="347.38" y="112.92" fill="#6a6ad4" stroke="#6a6ad4">8</text><text x="53.98" y="126.26" fill="#6a6ad4" stroke="#6a6ad4">4</text><text x="138.67 144.21 149.74" y="126.26" fill="#cdcd00" stroke="#cdcd00">F-3</text><text x="157.49 163.03" y="126.26" fill="#80c880" stroke="#80c880">00</text><text x="170.78" y="126.26" fill="#6a6ad4" stroke="#6a6ad4">8</text><text x="178.53" y="126.26" fill="#d06a6a" stroke="#d06a6a">Q</text><text x="184.06 189.60" y="126.26" fill="#cdcd00" stroke="#cdcd00">11</text><text x="255.47 261.01 266.54" y="126.26" fill="#cdcd00" stroke="#cdcd00">E-3</text><text x="274.29 279.83" y="126.26" fill="#80c880" stroke="#80c880">00</text><text x="315.27 320.81 326.34" y="126.26" fill="#cdcd00" stroke="#cdcd00">7-#</text><text x="334.09 339.63" y="126.26" fill="#80c880" stroke="#80c880">00</text><text x="347.38" y="126.26" fill="#6a6ad4" stroke="#6a6ad4">A</text><text x="355.13" y="126.26" fill="#d06a6a" stroke="#d06a6a">A</text><text x="360.66 366.20" y="126.26" fill="#cdcd00" stroke="#cdcd00">07</text><text x="374.97 380.51 386.04" y="126.26" fill="#cdcd00" stroke="#cdcd00">C#3</text><text x="393.79 399.33" y="126.26" fill="#80c880" stroke="#80c880">01</text><text x="414.83" y="126.26" fill="#d06a6a" stroke="#d06a6a">Z</text><text x="420.36 425.90" y="126.26" fill="#cdcd00" stroke="#cdcd00">00</text><text x="178.53" y="132.94" fill="#d06a6a" stroke="#d06a6a">4</text><text x="184.06 189.60" y="132.94" fill="#00cd00" stroke="#00cd00">62</text><text x="21.87 27.41 32.94" y="139.61" fill="#00cd00" stroke="#00cd00">D-5</text><text x="40.69 46.23" y="139.61" fill="#80c880" stroke="#80c880">02</text><text x="53.98" y="139.61" fill="#6a6ad4" stroke="#6a6ad4">A</text><text x="295.33" y="146.28" fill="#d06a6a" stroke="#d06a6a">G</text><text x="300.86 306.40" y="146.28" fill="#00cd00" stroke="#00cd00">02</text><text x="21.87 27.41 32.94" y="152.96" fill="#cdcd00" stroke="#cdcd00">E-5</text><text x="40.69 46.23" y="152.96" fill="#80c880" stroke="#80c880">02</text><text x="138.67 144.21 149.74" y="152.96" fill="#cdcd00" stroke="#cdcd00">F#2</text><text x="157.49 163.03" y="152.96" fill="#80c880" stroke="#80c880">00</text><text x="170.78" y="152.96" fill="#6a6ad4" stroke="#6a6ad4">8</text><text x="178.53" y="152.96" fill="#d06a6a" stroke="#d06a6a">4</text><text x="184.06 189.60" y="152.96" fill="#cdcd00" stroke="#cdcd00">00</text><text x="255.47 261.01 266.54" y="152.96" fill="#cdcd00" stroke="#cdcd00">C#3</text><text x="274.29 279.83" y="152.96" fill="#80c880" stroke="#80c880">00</text><text x="315.27 320.81 326.34" y="152.96" fill="#cdcd00" stroke="#cdcd00">D-#</text><text x="334.09 339.63" y="152.96" fill="#80c880" stroke="#80c880">00</text><text x="347.38" y="152.96" fill="#6a6ad4" stroke="#6a6ad4">8</text><text x="355.13" y="152.96" fill="#d06a6a" stroke="#d06a6a">A</text><text x="360.66 366.20" y="152.96" fill="#cdcd00" stroke="#cdcd00">0A</text><text x="374.97 380.51 386.04" y="152.96" fill="#cdcd00" stroke="#cdcd00">C-3</text><text x="393.79 399.33" y="152.96" fill="#80c880" stroke="#80c880">01</text><text x="414.83" y="152.96" fill="#d06a6a" stroke="#d06a6a">Z</text><text x="420.36 425.90" y="152.96" fill="#cdcd00" stroke="#cdcd00">00</text><text x="170.78" y="159.63" fill="#6a6ad4" stroke="#6a6ad4">2</text><text x="178.53" y="159.63" fill="#d06a6a" stroke="#d06a6a">G</text><text x="184.06 189.60" y="159.63" fill="#00cd00" stroke="#00cd00">02</text><text x="295.33" y="159.63" fill="#d06a6a" stroke="#d06a6a">G</text><text x="300.86 306.40" y="159.63" fill="#00cd00" stroke="#00cd00">02</text><text x="21.87 27.41 32.94" y="166.30" fill="#00cd00" stroke="#00cd00">B-4</text><text x="40.69 46.23" y="166.30" fill="#80c880" stroke="#80c880">02</text><text x="138.67 144.21 149.74" y="166.30" fill="#00cd00" stroke="#00cd00">A#2</text><text x="157.49 163.03" y="166.30" fill="#80c880" stroke="#80c880">00</text><text x="170.78" y="166.30" fill="#6a6ad4" stroke="#6a6ad4">8</text><text x="255.47 261.01 266.54" y="166.30" fill="#00cd00" stroke="#00cd00">E-3</text><text x="274.29 279.83" y="166.30" fill="#80c880" stroke="#80c880">00</text><text x="315.27 320.81 326.34" y="166.30" fill="#00cd00" stroke="#00cd00">D-#</text><text x="334.09 339.63" y="166.30" fill="#80c880" stroke="#80c880">00</text><text x="347.38" y="166.30" fill="#6a6ad4" stroke="#6a6ad4">8</text><text x="170.78" y="172.97" fill="#6a6ad4" stroke="#6a6ad4">2</text><text x="178.53" y="172.97" fill="#d06a6a" stroke="#d06a6a">G</text><text x="184.06 189.60" y="172.97" fill="#00cd00" stroke="#00cd00">02</text><text x="295.33" y="172.97" fill="#d06a6a" stroke="#d06a6a">G</text><text x="300.86 306.40" y="172.97" fill="#00cd00" stroke="#00cd00">02</text><text x="21.87 27.41 32.94" y="179.65" fill="#f0f082" stroke="#f0f082">F#5</text><text x="40.69 46.23" y="179.65" fill="#80c880" stroke="#80c880">02</text><text x="138.67 144.21 149.74" y="179.65" fill="#f0f082" stroke="#f0f082">C#3</text><text x="157.49 163.03" y="179.65" fill="#80c880" stroke="#80c880">00</text><text x="170.78" y="179.65" fill="#6a6ad4" stroke="#6a6ad4">8</text><text x="255.47 261.01 266.54" y="179.65" fill="#f0f082" stroke="#f0f082">F#3</text><text x="274.29 279.83" y="179.65" fill="#80c880" stroke="#80c880">00</text><text x="315.27 320.81 326.34" y="179.65" fill="#f0f082" stroke="#f0f082">D-#</text><text x="334.09 339.63" y="179.65" fill="#80c880" stroke="#80c880">00</text><text x="347.38" y="179.65" fill="#6a6ad4" stroke="#6a6ad4">8</text><text x="374.97 380.51 386.04" y="179.65" fill="#f0f082" stroke="#f0f082">C-3</text><text x="393.79 399.33" y="179.65" fill="#80c880" stroke="#80c880">01</text><text x="414.83" y="179.65" fill="#d06a6a" stroke="#d06a6a">Z</text><text x="420.36 425.90" y="179.65" fill="#f0f082" stroke="#f0f082">00</text><text x="170.78" y="186.32" fill="#6a6ad4" stroke="#6a6ad4">2</text><text x="178.53" y="186.32" fill="#d06a6a" stroke="#d06a6a">G</text><text x="184.06 189.60" y="186.32" fill="#00cd00" stroke="#00cd00">02</text><text x="315.27 320.81 326.34" y="186.32" fill="#00cd00" stroke="#00cd00">0-#</text><text x="334.09 339.63" y="186.32" fill="#80c880" stroke="#80c880">00</text><text x="347.38" y="186.32" fill="#6a6ad4" stroke="#6a6ad4">8</text><text x="355.13" y="186.32" fill="#d06a6a" stroke="#d06a6a">A</text><text x="360.66 366.20" y="186.32" fill="#00cd00" stroke="#00cd00">0C</text><text x="21.87 27.41 32.94" y="192.99" fill="#00cd00" stroke="#00cd00">E-5</text><text x="40.69 46.23" y="192.99" fill="#80c880" stroke="#80c880">02</text><text x="374.97 380.51 386.04" y="192.99" fill="#00cd00" stroke="#00cd00">C-3</text><text x="393.79 399.33" y="192.99" fill="#80c880" stroke="#80c880">01</text><text x="414.83" y="192.99" fill="#d06a6a" stroke="#d06a6a">Z</text><text x="420.36 425.90" y="192.99" fill="#00cd00" stroke="#00cd00">00</text><text x="315.27 320.81 326.34" y="199.67" fill="#00cd00" stroke="#00cd00">0-#</text><text x="334.09 339.63" y="199.67" fill="#80c880" stroke="#80c880">00</text><text x="347.38" y="199.67" fill="#6a6ad4" stroke="#6a6ad4">8</text><text x="355.13" y="199.67" fill="#d06a6a" stroke="#d06a6a">A</text><text x="360.66 366.20" y="199.67" fill="#00cd00" stroke="#00cd00">0C</text><text x="21.87 27.41 32.94" y="206.34" fill="#cdcd00" stroke="#cdcd00">F#5</text><text x="40.69 46.23" y="206.34" fill="#80c880" stroke="#80c880">02</text><text x="138.67 144.21 149.74" y="206.34" fill="#cdcd00" stroke="#cdcd00">F#3</text><text x="157.49 163.03" y="206.34" fill="#80c880" stroke="#80c880">00</text><text x="170.78" y="206.34" fill="#6a6ad4" stroke="#6a6ad4">8</text><text x="255.47 261.01 266.54" y="206.34" fill="#cdcd00" stroke="#cdcd00">F#3</text><text x="274.29 279.83" y="206.34" fill="#80c880" stroke="#80c880">00</text><text x="315.27 320.81 326.34" y="206.34" fill="#cdcd00" stroke="#cdcd00">7-#</text><text x="334.09 339.63" y="206.34" fill="#80c880" stroke="#80c880">00</text><text x="347.38" y="206.34" fill="#6a6ad4" stroke="#6a6ad4">A</text><text x="355.13" y="206.34" fill="#d06a6a" stroke="#d06a6a">A</text><text x="360.66 366.20" y="206.34" fill="#cdcd00" stroke="#cdcd00">07</text><text x="374.97 380.51 386.04" y="206.34" fill="#cdcd00" stroke="#cdcd00">C#3</text><text x="393.79 399.33" y="206.34" fill="#80c880" stroke="#80c880">01</text><text x="414.83" y="206.34" fill="#d06a6a" stroke="#d06a6a">Z</text><text x="420.36 425.90" y="206.34" fill="#cdcd00" stroke="#cdcd00">00</text><text x="178.53" y="213.01" fill="#d06a6a" stroke="#d06a6a">4</text><text x="184.06 189.60" y="213.01" fill="#00cd00" stroke="#00cd00">62</text><text x="61.73" y="219.69" fill="#d06a6a" stroke="#d06a6a">4</text><text x="67.26 72.80" y="219.69" fill="#00cd00" stroke="#00cd00">72</text><text x="80.55" y="219.69" fill="#d06a6a" stroke="#d06a6a">A</text><text x="86.08 91.62" y="219.69" fill="#00cd00" stroke="#00cd00">02</text><text x="170.78" y="226.36" fill="#6a6ad4" stroke="#6a6ad4">2</text><text x="178.53" y="226.36" fill="#d06a6a" stroke="#d06a6a">G</text><text x="184.06 189.60" y="226.36" fill="#00cd00" stroke="#00cd00">02</text><text x="295.33" y="226.36" fill="#d06a6a" stroke="#d06a6a">G</text><text x="300.86 306.40" y="226.36" fill="#00cd00" stroke="#00cd00">02</text><text x="138.67 144.21 149.74" y="233.03" fill="#cdcd00" stroke="#cdcd00">F#3</text><text x="157.49 163.03" y="233.03" fill="#80c880" stroke="#80c880">00</text><text x="170.78" y="233.03" fill="#6a6ad4" stroke="#6a6ad4">8</text><text x="178.53" y="233.03" fill="#d06a6a" stroke="#d06a6a">4</text><text x="184.06 189.60" y="233.03" fill="#cdcd00" stroke="#cdcd00">00</text><text x="255.47 261.01 266.54" y="233.03" fill="#cdcd00" stroke="#cdcd00">E-3</text><text x="274.29 279.83" y="233.03" fill="#80c880" stroke="#80c880">00</text><text x="315.27 320.81 326.34" y="233.03" fill="#cdcd00" stroke="#cdcd00">D-#</text><text x="334.09 339.63" y="233.03" fill="#80c880" stroke="#80c880">00</text><text x="347.38" y="233.03" fill="#6a6ad4" stroke="#6a6ad4">8</text><text x="355.13" y="233.03" fill="#d06a6a" stroke="#d06a6a">A</text><text x="360.66 366.20" y="233.03" fill="#cdcd00" stroke="#cdcd00">0A</text><text x="374.97 380.51 386.04" y="233.03" fill="#cdcd00" stroke="#cdcd00">C-3</text><text x="393.79 399.33" y="233.03" fill="#80c880" stroke="#80c880">01</text><text x="414.83" y="233.03" fill="#d06a6a" stroke="#d06a6a">Z</text><text x="420.36 425.90" y="233.03" fill="#cdcd00" stroke="#cdcd00">00</text><text x="170.78" y="239.70" fill="#6a6ad4" stroke="#6a6ad4">2</text><text x="178.53" y="239.70" fill="#d06a6a" stroke="#d06a6a">G</text><text x="184.06 189.60" y="239.70" fill="#00cd00" stroke="#00cd00">02</text><text x="315.27 320.81 326.34" y="239.70" fill="#00cd00" stroke="#00cd00">0-#</text><text x="334.09 339.63" y="239.70" fill="#80c880" stroke="#80c880">00</text><text x="347.38" y="239.70" fill="#6a6ad4" stroke="#6a6ad4">8</text><text x="355.13" y="239.70" fill="#d06a6a" stroke="#d06a6a">A</text><text x="360.66 366.20" y="239.70" fill="#00cd00" stroke="#00cd00">0C</text><text x="138.67 144.21 149.74" y="246.38" fill="#00cd00" stroke="#00cd00">A-3</text><text x="157.49 163.03" y="246.38" fill="#80c880" stroke="#80c880">00</text><text x="170.78" y="246.38" fill="#6a6ad4" stroke="#6a6ad4">8</text><text x="374.97 380.51 386.04" y="246.38" fill="#00cd00" stroke="#00cd00">C-3</text><text x="393.79 399.33" y="246.38" fill="#80c880" stroke="#80c880">01</text><text x="414.83" y="246.38" fill="#d06a6a" stroke="#d06a6a">Z</text><text x="420.36 425.90" y="246.38" fill="#00cd00" stroke="#00cd00">00</text><text x="170.78" y="253.05" fill="#6a6ad4" stroke="#6a6ad4">2</text><text x="178.53" y="253.05" fill="#d06a6a" stroke="#d06a6a">G</text><text x="184.06 189.60" y="253.05" fill="#00cd00" stroke="#00cd00">02</text><text x="295.33" y="253.05" fill="#d06a6a" stroke="#d06a6a">G</text><text x="300.86 306.40" y="253.05" fill="#00cd00" stroke="#00cd00">02</text><text x="315.27 320.81 326.34" y="253.05" fill="#00cd00" stroke="#00cd00">0-#</text><text x="334.09 339.63" y="253.05" fill="#80c880" stroke="#80c880">00</text><text x="347.38" y="253.05" fill="#6a6ad4" stroke="#6a6ad4">8</text><text x="355.13" y="253.05" fill="#d06a6a" stroke="#d06a6a">A</text><text x="360.66 366.20" y="253.05" fill="#00cd00" stroke="#00cd00">0C</text><text x="138.67 144.21 149.74" y="259.72" fill="#cdcd00" stroke="#cdcd00">F#3</text><text x="157.49 163.03" y="259.72" fill="#80c880" stroke="#80c880">00</text><text x="170.78" y="259.72" fill="#6a6ad4" stroke="#6a6ad4">8</text><text x="255.47 261.01 266.54" y="259.72" fill="#cdcd00" stroke="#cdcd00">D-3</text><text x="274.29 279.83" y="259.72" fill="#80c880" stroke="#80c880">00</text><text x="315.27 320.81 326.34" y="259.72" fill="#cdcd00" stroke="#cdcd00">7-#</text><text x="334.09 339.63" y="259.72" fill="#80c880" stroke="#80c880">00</text><text x="347.38" y="259.72" fill="#6a6ad4" stroke="#6a6ad4">A</text><text x="355.13" y="259.72" fill="#d06a6a" stroke="#d06a6a">A</text><text x="360.66 366.20" y="259.72" fill="#cdcd00" stroke="#cdcd00">07</text><text x="374.97 380.51 386.04" y="259.72" fill="#cdcd00" stroke="#cdcd00">C#3</text><text x="393.79 399.33" y="259.72" fill="#80c880" stroke="#80c880">01</text><text x="414.83" y="259.72" fill="#d06a6a" stroke="#d06a6a">Z</text><text x="420.36 425.90" y="259.72" fill="#cdcd00" stroke="#cdcd00">00</text><text x="178.53" y="266.40" fill="#d06a6a" stroke="#d06a6a">4</text><text x="184.06 189.60" y="266.40" fill="#00cd00" stroke="#00cd00">62</text><text x="295.33" y="279.74" fill="#d06a6a" stroke="#d06a6a">G</text><text x="300.86 306.40" y="279.74" fill="#00cd00" stroke="#00cd00">02</text><text x="21.87 27.41 32.94" y="286.42" fill="#56562f" stroke="#56562f">F#5</text><text x="40.69 46.23" y="286.42" fill="#2e482e" stroke="#2e482e">03</text><text x="53.98" y="286.42" fill="#26264c" stroke="#26264c">8</text><text x="61.73" y="286.42" fill="#4b2626" stroke="#4b2626">A</text><text x="67.26 72.80" y="286.42" fill="#56562f" stroke="#56562f">00</text><text x="80.55" y="286.42" fill="#4b2626" stroke="#4b2626">4</text><text x="86.08 91.62" y="286.42" fill="#56562f" stroke="#56562f">00</text><text x="138.67 144.21 149.74" y="286.42" fill="#56562f" stroke="#56562f">B-2</text><text x="157.49 163.03" y="286.42" fill="#2e482e" stroke="#2e482e">00</text><text x="170.78" y="286.42" fill="#26264c" stroke="#26264c">8</text><text x="178.53" y="286.42" fill="#4b2626" stroke="#4b2626">V</text><text x="184.06 189.60" y="286.42" fill="#56562f" stroke="#56562f">01</text><text x="197.35" y="286.42" fill="#4b2626" stroke="#4b2626">4</text><text x="202.88 208.42" y="286.42" fill="#56562f" stroke="#56562f">00</text><text x="216.16" y="286.42" fill="#4b2626" stroke="#4b2626">A</text><text x="221.70 227.23" y="286.42" fill="#56562f" stroke="#56562f">00</text><text x="234.98" y="286.42" fill="#4b2626" stroke="#4b2626">P</text><text x="240.52 246.05" y="286.42" fill="#56562f" stroke="#56562f">80</text><text x="255.47 261.01 266.54" y="286.42" fill="#56562f" stroke="#56562f">B-2</text><text x="274.29 279.83" y="286.42" fill="#2e482e" stroke="#2e482e">00</text><text x="315.27 320.81 326.34" y="286.42" fill="#56562f" stroke="#56562f">D-#</text><text x="334.09 339.63" y="286.42" fill="#2e482e" stroke="#2e482e">00</text><text x="347.38" y="286.42" fill="#26264c" stroke="#26264c">8</text><text x="355.13" y="286.42" fill="#4b2626" stroke="#4b2626">A</text><text x="360.66 366.20" y="286.42" fill="#56562f" stroke="#56562f">0A</text><text x="374.97 380.51 386.04" y="286.42" fill="#56562f" stroke="#56562f">C-3</text><text x="393.79 399.33" y="286.42" fill="#2e482e" stroke="#2e482e">01</text><text x="414.83" y="286.42" fill="#4b2626" stroke="#4b2626">Z</text><text x="420.36 425.90" y="286.42" fill="#56562f" stroke="#56562f">00</text><text x="170.78" y="293.09" fill="#26264c" stroke="#26264c">2</text><text x="178.53" y="293.09" fill="#4b2626" stroke="#4b2626">G</text><text x="184.06 189.60" y="293.09" fill="#004a00" stroke="#004a00">02</text><text x="295.33" y="293.09" fill="#4b2626" stroke="#4b2626">G</text><text x="300.86 306.40" y="293.09" fill="#004a00" stroke="#004a00">02</text><text x="61.73" y="299.76" fill="#4b2626" stroke="#4b2626">4</text><text x="67.26 72.80" y="299.76" fill="#004a00" stroke="#004a00">72</text><text x="80.55" y="299.76" fill="#4b2626" stroke="#4b2626">A</text><text x="86.08 91.62" y="299.76" fill="#004a00" stroke="#004a00">02</text><text x="138.67 144.21 149.74" y="299.76" fill="#004a00" stroke="#004a00">D-3</text><text x="157.49 163.03" y="299.76" fill="#2e482e" stroke="#2e482e">00</text><text x="170.78" y="299.76" fill="#26264c" stroke="#26264c">8</text><text x="255.47 261.01 266.54" y="299.76" fill="#004a00" stroke="#004a00">B-2</text><text x="274.29 279.83" y="299.76" fill="#2e482e" stroke="#2e482e">00</text><text x="170.78" y="306.44" fill="#26264c" stroke="#26264c">2</text><text x="178.53" y="306.44" fill="#4b2626" stroke="#4b2626">G</text><text x="184.06 189.60" y="306.44" fill="#004a00" stroke="#004a00">02</text><text x="295.33" y="306.44" fill="#4b2626" stroke="#4b2626">G</text><text x="300.86 306.40" y="306.44" fill="#004a00" stroke="#004a00">02</text><text x="138.67 144.21 149.74" y="313.11" fill="#4a4a00" stroke="#4a4a00">B-2</text><text x="157.49 163.03" y="313.11" fill="#2e482e" stroke="#2e482e">00</text><text x="170.78" y="313.11" fill="#26264c" stroke="#26264c">8</text><text x="255.47 261.01 266.54" y="313.11" fill="#4a4a00" stroke="#4a4a00">B-2</text><text x="274.29 279.83" y="313.11" fill="#2e482e" stroke="#2e482e">00</text><text x="170.78" y="319.78" fill="#26264c" stroke="#26264c">2</text><text x="178.53" y="319.78" fill="#4b2626" stroke="#4b2626">G</text><text x="184.06 189.60" y="319.78" fill="#004a00" stroke="#004a00">02</text><text x="295.33" y="319.78" fill="#4b2626" stroke="#4b2626">G</text><text x="300.86 306.40" y="319.78" fill="#004a00" stroke="#004a00">02</text><text x="21.87 27.41 32.94" y="326.45" fill="#004a00" stroke="#004a00">F#3</text><text x="40.69 46.23" y="326.45" fill="#2e482e" stroke="#2e482e">00</text><text x="53.98" y="326.45" fill="#26264c" stroke="#26264c">A</text><text x="61.73" y="326.45" fill="#4b2626" stroke="#4b2626">V</text><text x="67.26 72.80" y="326.45" fill="#004a00" stroke="#004a00">01</text><text x="80.55" y="326.45" fill="#4b2626" stroke="#4b2626">A</text><text x="86.08 91.62" y="326.45" fill="#004a00" stroke="#004a00">00</text><text x="99.36" y="326.45" fill="#4b2626" stroke="#4b2626">4</text><text x="104.90 110.43" y="326.45" fill="#004a00" stroke="#004a00">00</text><text x="118.18" y="326.45" fill="#4b2626" stroke="#4b2626">P</text><text x="123.72 129.25" y="326.45" fill="#004a00" stroke="#004a00">7E</text><text x="315.27 320.81 326.34" y="326.45" fill="#004a00" stroke="#004a00">D-#</text><text x="334.09 339.63" y="326.45" fill="#2e482e" stroke="#2e482e">00</text><text x="347.38" y="326.45" fill="#26264c" stroke="#26264c">8</text></g></svg></div>
  <!-- right scrollbar -->
  <div class="a" style="left:580px;top:141px;width:10px;height:351px;background:#eeeeee;border-left:1px solid #d8d8d8"></div>
  <div class="a" style="left:584px;top:145px;width:3px;height:2px;background:#333;clip-path:polygon(50% 0,100% 100%,0 100%)"></div>
  <div class="a" style="left:581px;top:423px;width:8px;height:22px;background:linear-gradient(90deg,#f8f8f8,#e4e4e4);border:1px solid #c0c0c0;border-radius:1px"></div>
  <!-- mouse cursor -->
  <div class="a" style="left:417.5px;top:487px;width:6px;height:6px;background:#fff;clip-path:polygon(0 0,100% 100%,0 100%)"></div>
</div>
</div>
</body></html>
